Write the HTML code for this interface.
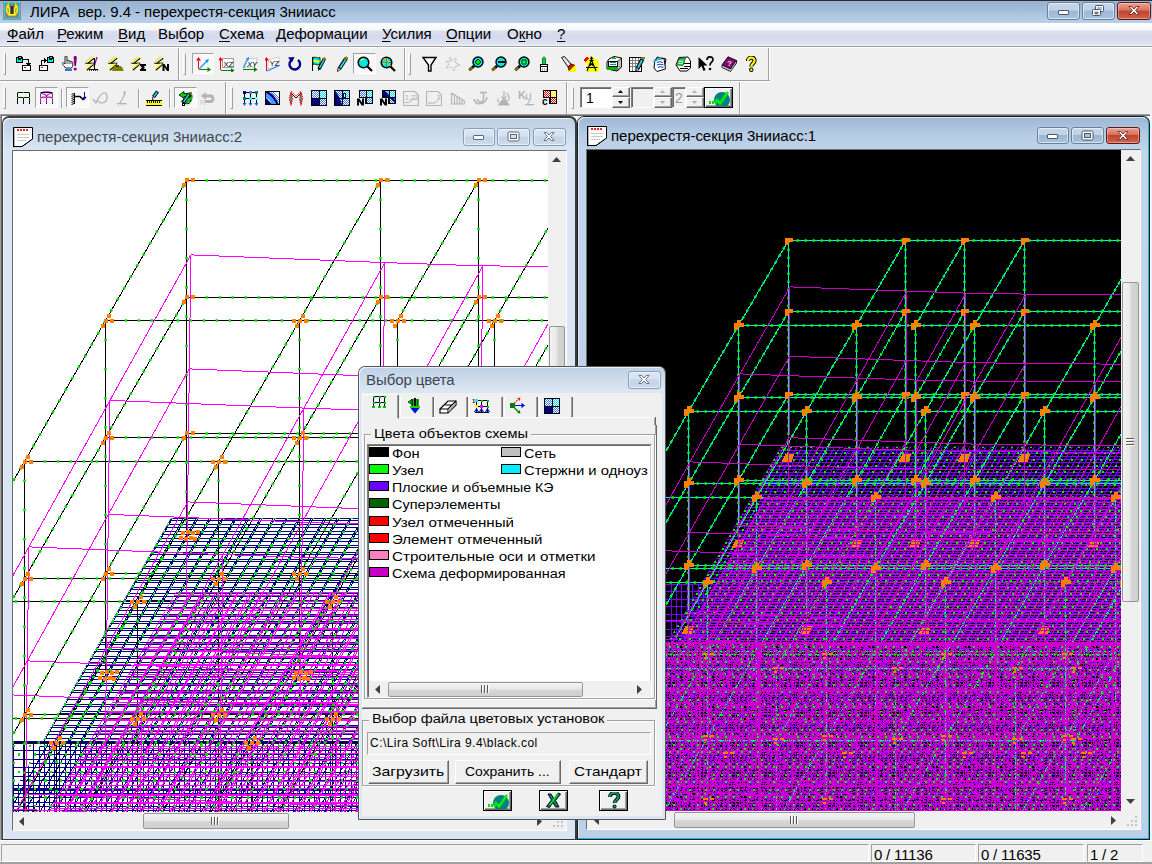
<!DOCTYPE html>
<html><head><meta charset="utf-8"><title>LIRA</title>
<style>
*{box-sizing:border-box;margin:0;padding:0}
html,body{width:1152px;height:864px;overflow:hidden;background:#f0f0f0;font-family:"Liberation Sans",sans-serif;}
.a{position:absolute}
svg{position:absolute;overflow:hidden;display:block}
.t{position:absolute;white-space:nowrap;line-height:1;color:#000}

#title{left:0;top:0;width:1152px;height:23px;background:linear-gradient(#98b3d2 0px,#9db7d5 6px,#adc5e0 14px,#b9d1ea 23px);border-top:1px solid #2a2a2a}
#menu{left:0;top:23px;width:1152px;height:23px;background:linear-gradient(#ffffff 0px,#f5f7fb 7px,#dadeee 8px,#d5daeb 14px,#dde2f1 20px,#e6eaf5 22px,#f6f8fc 23px)}
.mi{top:26px;font-size:15px;letter-spacing:0px}
.mi u{text-decoration:underline;text-underline-offset:2px}
.cbtn{position:absolute;border:1px solid #6a7f9c;border-radius:3px;background:linear-gradient(#c4d6ea 0,#bdd1e7 45%,#9db7d3 50%,#a9c2dc 100%);box-shadow:inset 0 0 0 1px rgba(255,255,255,.55)}
.cbtn.red{border-color:#5a1a1a;background:linear-gradient(#e8a294 0,#d8705c 45%,#c2432b 50%,#d0634c 100%);box-shadow:inset 0 0 0 1px rgba(255,255,255,.35)}
.cbtn.in{border-color:#8a9db8;background:linear-gradient(#dbe6f3 0,#d3e0ef 45%,#c3d3e6 50%,#cddbeb 100%)}
.child{position:absolute}
.ctitle{font-size:15px;color:#000;letter-spacing:-0.01px}
.sb{position:absolute;background:#f0f0f0}
.thumbv{position:absolute;border:1px solid #979797;border-radius:2px;background:linear-gradient(90deg,#f3f3f3 0,#e9e9e9 45%,#d6d6d6 55%,#cfcfcf 100%)}
.thumbh{position:absolute;border:1px solid #979797;border-radius:2px;background:linear-gradient(#f3f3f3 0,#e9e9e9 45%,#d6d6d6 55%,#cfcfcf 100%)}
.pane{position:absolute;top:844px;height:18px;border:1px solid;border-color:#a0a0a0 #fff #fff #a0a0a0;font-size:15px}
.pane span{position:absolute;left:2px;top:1px;white-space:nowrap;letter-spacing:-0.2px}

.grip{position:absolute;width:3px;border-left:1px solid #fff;border-top:1px solid #fff;border-right:1px solid #a0a0a0;border-bottom:1px solid #a0a0a0}
.vsep{position:absolute;width:2px;border-left:1px solid #a0a0a0;border-right:1px solid #fff}
.press{position:absolute;border:1px solid;border-color:#a0a0a0 #fff #fff #a0a0a0;background:#f8f8f8}
.ic{position:absolute;width:16px;height:16px;shape-rendering:crispEdges}
.spin{position:absolute;width:18px;background:#f0f0f0;border:1px solid;border-color:#fff #696969 #696969 #fff;box-shadow:inset -1px -1px 0 #a0a0a0}
.sunk{position:absolute;border:1px solid;border-color:#828282 #fff #fff #828282;box-shadow:inset 1px 1px 0 #696969}

.btn{position:absolute;background:#f0f0f0;border:1px solid;border-color:#fff #696969 #696969 #fff;box-shadow:inset -1px -1px 0 #a0a0a0}
.gb{position:absolute;border:1px solid #a0a0a0;box-shadow:inset 1px 1px 0 #fff, 1px 1px 0 #fff}
.sw{position:absolute;width:20px;height:10px;border:1px solid #000}

</style></head><body>
<div id="title" class="a"></div><svg class="a" style="left:3px;top:2px" width="18" height="18" viewBox="0 0 18 18"><rect x="0" y="0" width="18" height="18" fill="#8a8f96"/><rect x="1.5" y="0.5" width="15" height="16" fill="#7f8489" stroke="#16d9e6" stroke-width="1"/><path d="M5 3 C3 6 3.5 10 6 13 L12 13 C14.5 10 15 6 13 3 C13 5 12 6 11.5 7 L11.5 12 L6.5 12 L6.5 7 C6 6 5 5 5 3Z" fill="none" stroke="#ffef00" stroke-width="1.6"/><rect x="7.5" y="4" width="3" height="8" fill="#333"/></svg><div class="t" style="left:30px;top:4px;font-size:15px;letter-spacing:-0.05px" id="ttl">ЛИРА&nbsp; вер. 9.4 - перехрестя-секция 3нииасс</div><div class="cbtn" style="left:1047px;top:2px;width:33px;height:18px"></div><div class="a" style="left:1058px;top:10px;width:11px;height:5px;background:#fff;border:1px solid #4b556b;border-radius:1px"></div><div class="cbtn" style="left:1082px;top:2px;width:33px;height:18px"></div><svg class="a" style="left:1091px;top:4px" width="14" height="13" viewBox="0 0 14 13"><rect x="4.5" y="1.5" width="8" height="6" rx="1" fill="#fff" stroke="#4b556b"/><rect x="6" y="3" width="5" height="3" fill="#a9c2dc"/><rect x="1.5" y="5.5" width="8" height="6" rx="1" fill="#fff" stroke="#4b556b"/><rect x="4" y="8" width="3" height="2" fill="#7c90ad" stroke="#4b556b" stroke-width=".6"/></svg><div class="cbtn red" style="left:1117px;top:2px;width:34px;height:18px"></div><svg class="a" style="left:1127px;top:5px" width="14" height="12" viewBox="0 0 14 12"><path d="M2 1.5 L4.6 1.5 L7 4 L9.4 1.5 L12 1.5 L8.6 5.5 L12 9.5 L9.4 9.5 L7 7 L4.6 9.5 L2 9.5 L5.4 5.5 Z" fill="#fff" stroke="#5d2a2a" stroke-width=".9"/></svg><div id="menu" class="a"></div><div class="t mi" style="left:7px"><u>Ф</u>айл</div><div class="t mi" style="left:57px"><u>Р</u>ежим</div><div class="t mi" style="left:118px"><u>В</u>ид</div><div class="t mi" style="left:158px">Вы<u>б</u>ор</div><div class="t mi" style="left:219px"><u>С</u>хема</div><div class="t mi" style="left:276px"><u>Д</u>еформации</div><div class="t mi" style="left:382px"><u>У</u>силия</div><div class="t mi" style="left:446px"><u>О</u>пции</div><div class="t mi" style="left:507px">О<u>к</u>но</div><div class="t mi" style="left:557px"><u>?</u></div><div class="a" style="left:0;top:46px;width:1152px;height:1px;background:#a0a0a0"></div><div class="a" style="left:0;top:47px;width:1152px;height:1px;background:#fff"></div><svg width="0" height="0" style="position:absolute"><defs><pattern id="d4080ff" width="2" height="2" patternUnits="userSpaceOnUse"><rect x="0" y="0" width="1" height="1" fill="#4080ff"/><rect x="1" y="1" width="1" height="1" fill="#4080ff"/></pattern><pattern id="d00e0ff" width="2" height="2" patternUnits="userSpaceOnUse"><rect x="0" y="0" width="1" height="1" fill="#00e0ff"/><rect x="1" y="1" width="1" height="1" fill="#00e0ff"/></pattern><pattern id="dff0000" width="2" height="2" patternUnits="userSpaceOnUse"><rect x="0" y="0" width="1" height="1" fill="#ff0000"/><rect x="1" y="1" width="1" height="1" fill="#ff0000"/></pattern><pattern id="dffff00" width="2" height="2" patternUnits="userSpaceOnUse"><rect x="0" y="0" width="1" height="1" fill="#ffff00"/><rect x="1" y="1" width="1" height="1" fill="#ffff00"/></pattern></defs></svg><div class="a" style="left:0;top:80px;width:770px;height:1px;background:#a0a0a0"></div><div class="a" style="left:0;top:81px;width:770px;height:1px;background:#fff"></div><div class="a" style="left:178px;top:48px;width:1px;height:32px;background:#a0a0a0"></div><div class="a" style="left:179px;top:48px;width:1px;height:32px;background:#fff"></div><div class="a" style="left:404px;top:48px;width:1px;height:32px;background:#a0a0a0"></div><div class="a" style="left:405px;top:48px;width:1px;height:32px;background:#fff"></div><div class="a" style="left:768px;top:48px;width:1px;height:32px;background:#a0a0a0"></div><div class="a" style="left:769px;top:48px;width:1px;height:32px;background:#fff"></div><div class="grip" style="left:3px;top:53px;height:22px"></div><div class="grip" style="left:183px;top:53px;height:22px"></div><div class="grip" style="left:408px;top:53px;height:22px"></div><div class="press" style="left:192px;top:53px;width:22px;height:21px"></div><div class="press" style="left:353px;top:53px;width:23px;height:21px"></div><svg class="ic" style="left:16px;top:56px;width:16px;height:16px" viewBox="0 0 16 16" ><rect x="0.5" y="1.5" width="6" height="5" fill="#00e5e5" stroke="#000"/><rect x="2" y="0.5" width="3" height="1.5" fill="#00e5e5" stroke="#000"/><rect x="2" y="3" width="3" height="1" fill="#000"/><path d="M7 3.5 H12.5 V7.5" fill="none" stroke="#000" stroke-width="1.4" /><path d="M10 7 H15 L12.5 10Z" fill="#000" /><rect x="6.5" y="9.5" width="8" height="5" fill="#fff" stroke="#000"/><rect x="8" y="11" width="2" height="1" fill="#ff0000"/></svg><svg class="ic" style="left:39px;top:56px;width:16px;height:16px" viewBox="0 0 16 16" ><rect x="8.5" y="1.5" width="6" height="5" fill="#00e5e5" stroke="#000"/><rect x="10" y="0.5" width="3" height="1.5" fill="#00e5e5" stroke="#000"/><rect x="10" y="3" width="3" height="1" fill="#000"/><rect x="0.5" y="9.5" width="8" height="5" fill="#fff" stroke="#000"/><rect x="2" y="11" width="2" height="1" fill="#ff0000"/><path d="M2.5 9 V4.5 H5.5" fill="none" stroke="#000" stroke-width="1.4" /><path d="M5 2 V7 L8 4.5Z" fill="#000" /></svg><svg class="ic" style="left:62px;top:56px;width:16px;height:16px" viewBox="0 0 16 16" ><path d="M3 0.8 C3 -0.3 5 -0.3 5 0.8 V5 C5.5 4.2 7 4.3 7 5.3 C7.5 4.6 9 4.8 9 5.8 C9.5 5.2 10.8 5.5 10.8 6.6 V9 C10.8 10.5 10 11 9.5 12 H3.5 C3 10.5 0.5 9 0.2 7.5 C0.2 6.5 1.5 6.3 3 8 Z" fill="#fff" stroke="#000" stroke-width="0.9" style="shape-rendering:auto"/><path d="M5 5 V8 M7 5.5 V8 M9 6 V8" fill="none" stroke="#000" stroke-width="0.7" style="shape-rendering:auto"/><rect x="2.5" y="12.5" width="7.5" height="2.2" fill="#1e7fe0"/><path d="M11.6 1.5 C11.6 -0.4 14.8 -0.4 14.8 1.5 L14 10 L12.4 10Z" fill="#800080" style="shape-rendering:auto"/><circle cx="13.2" cy="13" r="1.6" fill="#800080" style="shape-rendering:auto"/></svg><svg class="ic" style="left:85px;top:56px;width:16px;height:16px" viewBox="0 0 16 16" ><path d="M6.5 0.8 L0.8 5.5" fill="none" stroke="#c8c8c8" stroke-width="1" style="shape-rendering:auto"/><path d="M9.2 2.2 L2.6 7.4 M8.6 8.4 L1.8 14.2" fill="none" stroke="#000" stroke-width="1.15" style="shape-rendering:auto"/><path d="M0.3 7.2 H9.3" fill="none" stroke="#000" stroke-width="1.1" style="shape-rendering:auto"/><path d="M8.2 1.2 L1.4 6.4 M7.6 7.6 L0.8 13.2" fill="none" stroke="#ffff00" stroke-width="1.35" style="shape-rendering:auto"/><path d="M12 1 L9 11" fill="none" stroke="#a000a0" stroke-width="1.2" style="shape-rendering:auto"/><path d="M9 2 V13" fill="none" stroke="#000" stroke-width="1" /><rect x="4" y="13" width="9" height="1" fill="#000"/><path d="M4 15 l1 -1 m1 1 l1 -1 m1 1 l1 -1 m1 1 l1 -1 m1 1 l1 -1" fill="none" stroke="#000" stroke-width="0.8" /></svg><svg class="ic" style="left:108px;top:56px;width:16px;height:16px" viewBox="0 0 16 16" ><path d="M6.5 0.8 L0.8 5.5" fill="none" stroke="#c8c8c8" stroke-width="1" style="shape-rendering:auto"/><path d="M9.2 2.2 L2.6 7.4 M8.6 8.4 L1.8 14.2" fill="none" stroke="#000" stroke-width="1.15" style="shape-rendering:auto"/><path d="M0.3 7.2 H9.3" fill="none" stroke="#000" stroke-width="1.1" style="shape-rendering:auto"/><path d="M8.2 1.2 L1.4 6.4 M7.6 7.6 L0.8 13.2" fill="none" stroke="#ffff00" stroke-width="1.35" style="shape-rendering:auto"/><path d="M4 15 C5 10 7 10 8 10 L12 10 C13 10 15 11 15.5 15 Z" fill="#808000" style="shape-rendering:auto"/><rect x="8" y="9" width="3" height="1.5" fill="#404000"/></svg><svg class="ic" style="left:131px;top:56px;width:16px;height:16px" viewBox="0 0 16 16" ><path d="M6.5 0.8 L0.8 5.5" fill="none" stroke="#c8c8c8" stroke-width="1" style="shape-rendering:auto"/><path d="M9.2 2.2 L2.6 7.4 M8.6 8.4 L1.8 14.2" fill="none" stroke="#000" stroke-width="1.15" style="shape-rendering:auto"/><path d="M0.3 7.2 H9.3" fill="none" stroke="#000" stroke-width="1.1" style="shape-rendering:auto"/><path d="M8.2 1.2 L1.4 6.4 M7.6 7.6 L0.8 13.2" fill="none" stroke="#ffff00" stroke-width="1.35" style="shape-rendering:auto"/><path d="M9 8 H15 V10 H12.5 L14 11.5 L12.5 13 H15 V15 H9 V13.5 L11 11.5 L9 9.5Z" fill="#000" style="shape-rendering:auto"/></svg><svg class="ic" style="left:154px;top:56px;width:16px;height:16px" viewBox="0 0 16 16" ><path d="M6.5 0.8 L0.8 5.5" fill="none" stroke="#c8c8c8" stroke-width="1" style="shape-rendering:auto"/><path d="M9.2 2.2 L2.6 7.4 M8.6 8.4 L1.8 14.2" fill="none" stroke="#000" stroke-width="1.15" style="shape-rendering:auto"/><path d="M0.3 7.2 H9.3" fill="none" stroke="#000" stroke-width="1.1" style="shape-rendering:auto"/><path d="M8.2 1.2 L1.4 6.4 M7.6 7.6 L0.8 13.2" fill="none" stroke="#ffff00" stroke-width="1.35" style="shape-rendering:auto"/><path d="M8.5 15 V8 H10.5 L13 12 V8 H15 V15 H13 L10.5 11 V15Z" fill="#000" style="shape-rendering:auto"/></svg><svg class="ic" style="left:196px;top:56px;width:16px;height:16px" viewBox="0 0 16 16" ><path d="M2.5 13 V2" fill="none" stroke="#ff0000" stroke-width="1" /><path d="M0.0 4.5 L2.5 1 L5.0 4.5Z" fill="#ff0000" style="shape-rendering:auto"/><path d="M2.5 13.5 H14" fill="none" stroke="#008000" stroke-width="1" /><path d="M11.5 11.0 L15 13.5 L11.5 16.0Z" fill="#008000" style="shape-rendering:auto"/><path d="M3.5 12.5 L12 4" fill="none" stroke="#1e90ff" stroke-width="1.2" style="shape-rendering:auto"/><path d="M12.8 3 L9 4.2 L11.8 7Z" fill="#1e90ff" style="shape-rendering:auto"/></svg><svg class="ic" style="left:219px;top:56px;width:16px;height:16px" viewBox="0 0 16 16" ><rect x="3.5" y="2.5" width="11" height="9" fill="#fff" stroke="#a0a0a0"/><path d="M1.5 14 V2" fill="none" stroke="#ff0000" stroke-width="1" /><path d="M-1.0 4.5 L1.5 1 L4.0 4.5Z" fill="#ff0000" style="shape-rendering:auto"/><path d="M1.5 14.5 H14.5" fill="none" stroke="#008000" stroke-width="1" /><path d="M12.0 12.0 L15.5 14.5 L12.0 17.0Z" fill="#008000" style="shape-rendering:auto"/><text x="4.5" y="10.5" font-family="Liberation Sans" font-size="8" font-weight="normal" font-style="normal" fill="#000" letter-spacing="-0.3" style="shape-rendering:auto">XZ</text></svg><svg class="ic" style="left:242px;top:56px;width:16px;height:16px" viewBox="0 0 16 16" ><path d="M5 2.5 H15.5 L12 11 H1Z" fill="#fff" stroke="#c0c0c0" stroke-width="0.8" style="shape-rendering:auto"/><path d="M1.5 12 L6 2.5" fill="none" stroke="#1e90ff" stroke-width="1.2" style="shape-rendering:auto"/><path d="M7 0.8 L3.6 3 L6.8 4.6Z" fill="#1e90ff" style="shape-rendering:auto"/><path d="M0.5 13.5 H14.5" fill="none" stroke="#008000" stroke-width="1" /><path d="M12.0 11.0 L15.5 13.5 L12.0 16.0Z" fill="#008000" style="shape-rendering:auto"/><text x="5" y="10.5" font-family="Liberation Sans" font-size="8" font-weight="normal" font-style="italic" fill="#000" letter-spacing="-0.3" style="shape-rendering:auto">XY</text></svg><svg class="ic" style="left:265px;top:56px;width:16px;height:16px" viewBox="0 0 16 16" ><path d="M3 4 L14 1 V9 L3 13Z" fill="#fff" stroke="#c0c0c0" stroke-width="0.8" style="shape-rendering:auto"/><path d="M1.5 15 V2" fill="none" stroke="#ff0000" stroke-width="1" /><path d="M-1.0 4.5 L1.5 1 L4.0 4.5Z" fill="#ff0000" style="shape-rendering:auto"/><path d="M2 15 L14.5 9.5" fill="none" stroke="#1e90ff" stroke-width="1.2" style="shape-rendering:auto"/><text x="4.5" y="9.5" font-family="Liberation Sans" font-size="8" font-weight="normal" font-style="normal" fill="#000" letter-spacing="-0.4" style="shape-rendering:auto">YZ</text></svg><svg class="ic" style="left:287px;top:56px;width:16px;height:16px" viewBox="0 0 16 16" ><path d="M4 4.5 A5.3 5.3 0 1 0 11 4" fill="none" stroke="#000080" stroke-width="2.4" style="shape-rendering:auto"/><path d="M1 1.5 L7.5 1 L5 6.5Z" fill="#000080" style="shape-rendering:auto"/></svg><svg class="ic" style="left:311px;top:56px;width:16px;height:16px" viewBox="0 0 16 16" ><path d="M1.5 1 V15" fill="none" stroke="#000" stroke-width="1.4" /><path d="M2 1.5 C4 0 6 3 9 1.5 V8.5 C6 10 4 7 2 8.5Z" fill="#00e5e5" stroke="#000" stroke-width="0.8" style="shape-rendering:auto"/><path d="M2.3 4 C4 2.8 6 5.5 8.7 4.2 V6.3 C6 7.6 4 4.8 2.3 6.2Z" fill="#ffff00" style="shape-rendering:auto"/><path d="M13.5 2.5 L8 13" fill="none" stroke="#000" stroke-width="3.4" style="shape-rendering:auto"/><path d="M13 3.5 L8.6 12" fill="none" stroke="#00e5e5" stroke-width="1.6" style="shape-rendering:auto"/><circle cx="13.3" cy="2.8" r="1.6" fill="#808000" style="shape-rendering:auto"/><path d="M7 15 L7.4 11.5 L9.6 12.8Z" fill="#000" style="shape-rendering:auto"/></svg><svg class="ic" style="left:334px;top:56px;width:16px;height:16px" viewBox="0 0 16 16" ><path d="M12 2.5 L5.5 12.5" fill="none" stroke="#000" stroke-width="4" style="shape-rendering:auto"/><path d="M11.5 3.5 L6 12" fill="none" stroke="#20d0e0" stroke-width="2" style="shape-rendering:auto"/><circle cx="12.2" cy="2.3" r="1.7" fill="#808000" style="shape-rendering:auto"/><path d="M3.5 15.5 L4 11.5 L6.8 13.2Z" fill="#fff" stroke="#000" stroke-width="0.8" style="shape-rendering:auto"/></svg><svg class="ic" style="left:357px;top:56px;width:16px;height:16px" viewBox="0 0 16 16" ><circle cx="6.5" cy="6.5" r="5.3" fill="#00e5e5" stroke="#000" stroke-width="1.5" style="shape-rendering:auto"/><path d="M4 5 A3 3 0 0 1 7 3.2" fill="none" stroke="#ffff00" stroke-width="1.3" style="shape-rendering:auto"/><path d="M10.5 10.5 L15 15" fill="none" stroke="#000" stroke-width="2.2" style="shape-rendering:auto"/></svg><svg class="ic" style="left:380px;top:56px;width:16px;height:16px" viewBox="0 0 16 16" ><circle cx="6.5" cy="6.5" r="5.3" fill="#00e5e5" stroke="#000" stroke-width="1.5" style="shape-rendering:auto"/><path d="M3 4 Q5 2 7 4 T10 5 M3 8 Q5 6 8 8 T10 9" fill="none" stroke="#e0c000" stroke-width="1.4" style="shape-rendering:auto"/><path d="M2 6.5 H11 M6.5 2 V11" fill="none" stroke="#0a9aa0" stroke-width="0.8" style="shape-rendering:auto"/><path d="M10.5 10.5 L15 15" fill="none" stroke="#000" stroke-width="2.2" style="shape-rendering:auto"/></svg><svg class="ic" style="left:422px;top:56px;width:16px;height:16px" viewBox="0 0 16 16" ><path d="M1 1.5 H14 L9 9 V15 H6.5 V9 Z" fill="#fff" stroke="#000" stroke-width="1.4" style="shape-rendering:auto"/></svg><svg class="ic" style="left:445px;top:56px;width:16px;height:16px" viewBox="0 0 16 16" ><path d="M5 1 L7 5 L11 2 L10.5 7 L15 9 L10 10.5 L9 15 L6 11 L1 12 L4 8 L1 5 L5 5.5Z" fill="none" stroke="#b0b0b0" stroke-width="1" stroke-dasharray="1.5 1" style="shape-rendering:auto"/></svg><svg class="ic" style="left:468px;top:56px;width:16px;height:16px" viewBox="0 0 16 16" ><path d="M6 10 L1.5 14" fill="none" stroke="#000" stroke-width="3" style="shape-rendering:auto"/><path d="M4.5 11.5 L1 14.5" fill="none" stroke="#808000" stroke-width="2" style="shape-rendering:auto"/><circle cx="10" cy="6" r="5" fill="#00e5e5" stroke="#000" stroke-width="1.4" style="shape-rendering:auto"/><path d="M10 3 L13 6 L10 9 L7 6Z" fill="#00e000" stroke="#000" stroke-width="0.8" style="shape-rendering:auto"/></svg><svg class="ic" style="left:491px;top:56px;width:16px;height:16px" viewBox="0 0 16 16" ><path d="M6 10 L1.5 14" fill="none" stroke="#000" stroke-width="3" style="shape-rendering:auto"/><path d="M4.5 11.5 L1 14.5" fill="none" stroke="#808000" stroke-width="2" style="shape-rendering:auto"/><circle cx="10" cy="6" r="5" fill="#00e5e5" stroke="#000" stroke-width="1.4" style="shape-rendering:auto"/><path d="M6.5 6 H13.5" fill="none" stroke="#000" stroke-width="1.6" /></svg><svg class="ic" style="left:514px;top:56px;width:16px;height:16px" viewBox="0 0 16 16" ><path d="M6 10 L1.5 14" fill="none" stroke="#000" stroke-width="3" style="shape-rendering:auto"/><path d="M4.5 11.5 L1 14.5" fill="none" stroke="#808000" stroke-width="2" style="shape-rendering:auto"/><circle cx="10" cy="6" r="5" fill="#00e5e5" stroke="#000" stroke-width="1.4" style="shape-rendering:auto"/><path d="M7 4.5 H13 M7 7.5 H13 M8.5 3 V9 M11.5 3 V9" fill="none" stroke="#00a000" stroke-width="1.2" /><circle cx="10" cy="6" r="2.6" fill="none" stroke="#008000" stroke-width="0.8" style="shape-rendering:auto"/></svg><svg class="ic" style="left:536px;top:56px;width:16px;height:16px" viewBox="0 0 16 16" ><path d="M6.5 9 V3 C6.5 0.5 9.5 0.5 9.5 3 V9Z" fill="#00d040" stroke="#006000" stroke-width="0.8" style="shape-rendering:auto"/><rect x="4.5" y="8.5" width="7" height="7" fill="#fff" stroke="#000"/><path d="M4.5 10.5 H11.5" fill="none" stroke="#000" stroke-width="1" /><path d="M6.5 12 V15 M8.5 12 V15 M10 12 V15" fill="none" stroke="#a0a0a0" stroke-width="0.8" /></svg><svg class="ic" style="left:560px;top:56px;width:16px;height:16px" viewBox="0 0 16 16" ><path d="M8 9 L15.5 9 L15.5 15.5 L8.5 15.5Z" fill="#ffff00" /><path d="M1.5 1.5 L4.5 0.5 L11 8 L8 11Z" fill="#d8d8d8" stroke="#000" stroke-width="0.9" style="shape-rendering:auto"/><path d="M8 11 L11 8 L14.5 9 L9 14.5Z" fill="#ff0000" stroke="#000" stroke-width="0.7" style="shape-rendering:auto"/><path d="M3 2 L9 9" fill="none" stroke="#fff" stroke-width="1" style="shape-rendering:auto"/></svg><svg class="ic" style="left:583px;top:56px;width:16px;height:16px" viewBox="0 0 16 16" ><path d="M1 3 L5 0.5 L10 0.5 L15.5 5 V15.5 H3.5 V8Z" fill="#ffff00" /><path d="M0.5 4 L4.5 0.5 L6 3 L2 6Z" fill="#ff0000" /><path d="M8.5 0.5 V4 M8.5 4 L4 15 M8.5 4 L13 15 M6.5 4.5 H10.5 M7 7 L10 9.5 M10 7 L7 9.5 M3 11.5 H14.5" fill="none" stroke="#000" stroke-width="1.1" style="shape-rendering:auto"/><circle cx="8.5" cy="2.5" r="1.3" fill="#000" style="shape-rendering:auto"/></svg><svg class="ic" style="left:606px;top:56px;width:16px;height:16px" viewBox="0 0 16 16" ><path d="M3 3 L8 0.5 L15.5 2 V11 L11 15 L1 13 L1 6 Z" fill="#fff" stroke="#000" stroke-width="1" style="shape-rendering:auto"/><path d="M11 6 L15.5 2 V11 L11 15Z" fill="#c0c0c0" stroke="#000" stroke-width="0.8" style="shape-rendering:auto"/><rect x="2.5" y="5" width="8.5" height="5" fill="#fff" stroke="#000"/><path d="M4 6.8 H9.5 M4 8.6 H9.5" fill="none" stroke="#008a8a" stroke-width="1.2" /><path d="M1 12.5 H11" fill="none" stroke="#00b000" stroke-width="2.4" /><path d="M6 2.5 L8.5 0.8 L10.5 2.6Z" fill="#00c000" /><rect x="13" y="9.5" width="1.4" height="1.4" fill="#00c000"/></svg><svg class="ic" style="left:629px;top:56px;width:16px;height:16px" viewBox="0 0 16 16" ><rect x="0.5" y="1.5" width="12" height="13.5" fill="#fff" stroke="#000"/><path d="M3.5 2 V15 M6.5 2 V15 M9.5 2 V15 M1 4.5 H12 M1 7.5 H12 M1 10.5 H12" fill="none" stroke="#808080" stroke-width="1" /><path d="M13.5 3 L8.5 12.5" fill="none" stroke="#000" stroke-width="4" style="shape-rendering:auto"/><path d="M13 4 L9 11.8" fill="none" stroke="#20d0e0" stroke-width="2" style="shape-rendering:auto"/><rect x="12" y="0.5" width="3.5" height="2" fill="#808000"/><path d="M7 15 L7.5 11.5 L10 13Z" fill="#fff" stroke="#000" stroke-width="0.7" style="shape-rendering:auto"/></svg><svg class="ic" style="left:652px;top:56px;width:16px;height:16px" viewBox="0 0 16 16" ><path d="M5 1 L14 3 L12 13 L3 11Z" fill="#fff" stroke="#000" stroke-width="1" style="shape-rendering:auto"/><path d="M3 3.5 L12 2.5 L13.5 13 L5 15.5 L2 12Z" fill="#fff" stroke="#000" stroke-width="1" style="shape-rendering:auto"/><path d="M5 6.5 Q8 5 11 6.5 M5 9 Q8 7.5 11.5 9 M6 11.5 Q8.5 10 11.5 11.5" fill="none" stroke="#2040d0" stroke-width="1.1" style="shape-rendering:auto"/><path d="M1.5 6 L9 1.5" fill="none" stroke="#20c0d0" stroke-width="1.8" style="shape-rendering:auto"/></svg><svg class="ic" style="left:675px;top:56px;width:16px;height:16px" viewBox="0 0 16 16" ><path d="M4 1.5 L13 1 L15.5 5 V12 L12 15 H5 L1 9Z" fill="#fff" stroke="#000" stroke-width="1" style="shape-rendering:auto"/><path d="M4.5 2.5 L10.5 2 L8 9.5 L1.5 9Z" fill="#30d060" stroke="#006000" stroke-width="0.8" style="shape-rendering:auto"/><path d="M9 7 H14.5 M8.5 10 H14.5 M5 12.5 H13" fill="none" stroke="#000" stroke-width="1" /><path d="M3 5 H8 M2.5 7 H7.5" fill="none" stroke="#e0ffe0" stroke-width="0.8" /></svg><svg class="ic" style="left:698px;top:56px;width:16px;height:16px" viewBox="0 0 16 16" ><path d="M0.5 1 V13 L3.5 10 L5.5 15 L7.5 14 L5.5 9.5 L9.5 9.5Z" fill="#000" style="shape-rendering:auto"/><path d="M9 4 C9 0 15 0 15 3.5 C15 6.5 12 6 12 9.5" fill="none" stroke="#000" stroke-width="1.7" style="shape-rendering:auto"/><circle cx="12" cy="13" r="1.3" fill="#000" style="shape-rendering:auto"/></svg><svg class="ic" style="left:721px;top:56px;width:16px;height:16px" viewBox="0 0 16 16" ><path d="M1 9 L7 0.8 L15.5 4.5 L9.5 13Z" fill="#800090" stroke="#000" stroke-width="0.9" style="shape-rendering:auto"/><path d="M1 9 L9.5 13 L15.5 4.5 V7 L9.5 15.5 L1 11.5Z" fill="#fff" stroke="#000" stroke-width="0.9" style="shape-rendering:auto"/><path d="M1.5 10.5 L9.5 14.2 L15 6" fill="none" stroke="#909090" stroke-width="0.8" style="shape-rendering:auto"/><text x="6" y="9.5" font-family="Liberation Sans" font-size="8" font-weight="bold" font-style="normal" fill="#ffff00" letter-spacing="0" style="shape-rendering:auto">?</text></svg><svg class="ic" style="left:743px;top:56px;width:16px;height:16px" viewBox="0 0 16 16" ><path d="M5 5 C5 0.5 11.5 0.5 11.5 4.5 C11.5 7.5 8.3 7.5 8.3 10.5" fill="none" stroke="#000" stroke-width="4.2" style="shape-rendering:auto"/><circle cx="8.3" cy="13.8" r="2.2" fill="#000" style="shape-rendering:auto"/><path d="M5 5 C5 0.5 11.5 0.5 11.5 4.5 C11.5 7.5 8.3 7.5 8.3 10.5" fill="none" stroke="#ffff00" stroke-width="2.2" style="shape-rendering:auto"/><circle cx="8.3" cy="13.8" r="1.25" fill="#ffff00" style="shape-rendering:auto"/></svg><div class="a" style="left:225px;top:82px;width:1px;height:32px;background:#a0a0a0"></div><div class="a" style="left:226px;top:82px;width:1px;height:32px;background:#fff"></div><div class="a" style="left:566px;top:82px;width:1px;height:32px;background:#a0a0a0"></div><div class="a" style="left:567px;top:82px;width:1px;height:32px;background:#fff"></div><div class="a" style="left:739px;top:82px;width:1px;height:32px;background:#a0a0a0"></div><div class="a" style="left:740px;top:82px;width:1px;height:32px;background:#fff"></div><div class="grip" style="left:3px;top:87px;height:22px"></div><div class="grip" style="left:230px;top:87px;height:22px"></div><div class="grip" style="left:571px;top:87px;height:22px"></div><div class="vsep" style="left:61px;top:89px;height:19px"></div><div class="vsep" style="left:138px;top:89px;height:19px"></div><div class="vsep" style="left:169px;top:89px;height:19px"></div><div class="press" style="left:35px;top:87px;width:23px;height:21px"></div><div class="press" style="left:66px;top:87px;width:23px;height:21px"></div><div class="press" style="left:174px;top:87px;width:23px;height:21px"></div><svg class="ic" style="left:16px;top:90px;width:16px;height:16px" viewBox="0 0 16 16" ><path d="M1.5 2 V14 M7.5 7 V14 M13.5 2 V14 M1 2.5 H14 M1 7.5 H14" fill="none" stroke="#000" stroke-width="1.3" /><rect x="0.7" y="1.7" width="1.6" height="1.6" fill="#00e000"/><rect x="6.7" y="1.7" width="1.6" height="1.6" fill="#00e000"/><rect x="12.7" y="1.7" width="1.6" height="1.6" fill="#00e000"/><rect x="0.7" y="6.7" width="1.6" height="1.6" fill="#00e000"/><rect x="6.7" y="6.7" width="1.6" height="1.6" fill="#00e000"/><rect x="12.7" y="6.7" width="1.6" height="1.6" fill="#00e000"/><rect x="0.7" y="12.5" width="1.6" height="1.6" fill="#000080"/><rect x="6.7" y="12.5" width="1.6" height="1.6" fill="#000080"/><rect x="12.7" y="12.5" width="1.6" height="1.6" fill="#000080"/></svg><svg class="ic" style="left:39px;top:90px;width:16px;height:16px" viewBox="0 0 16 16" ><path d="M1.5 3 V14 M7.5 7 V14 M13.5 3 V14" fill="none" stroke="#c000c0" stroke-width="1.3" /><path d="M1.5 3.5 Q4 1.5 7.5 2 Q11 1.5 13.5 3.5 M1.5 8 Q4 6.5 7.5 7.5 Q11 6.5 13.5 8 M2 3.5 Q7.5 4 7.5 7 Q7.5 4 13 3.5" fill="none" stroke="#c000c0" stroke-width="1.2" style="shape-rendering:auto"/><path d="M1 2.5 H14" fill="none" stroke="#000" stroke-width="1" /><rect x="0.7" y="2.2" width="1.6" height="1.6" fill="#00e000"/><rect x="12.7" y="2.2" width="1.6" height="1.6" fill="#00e000"/><rect x="0.7" y="7.2" width="1.6" height="1.6" fill="#00e000"/><rect x="6.7" y="6.7" width="1.6" height="1.6" fill="#00e000"/><rect x="12.7" y="7.2" width="1.6" height="1.6" fill="#00e000"/><rect x="0.7" y="12.5" width="1.6" height="1.6" fill="#000080"/><rect x="6.7" y="12.5" width="1.6" height="1.6" fill="#000080"/><rect x="12.7" y="12.5" width="1.6" height="1.6" fill="#000080"/></svg><svg class="ic" style="left:71px;top:90px;width:16px;height:16px" viewBox="0 0 16 16" ><path d="M3.5 3 V14" fill="none" stroke="#000" stroke-width="1.3" /><path d="M0.5 4.5 l2.5 -1 M0.5 6.5 l2.5 -1 M0.5 8.5 l2.5 -1 M0.5 10.5 l2.5 -1 M0.5 12.5 l2.5 -1 M0.5 14.5 l2.5 -1" fill="none" stroke="#000" stroke-width="1" style="shape-rendering:auto"/><path d="M3.5 6.5 L9 6.5 L12 9.5 L15 7" fill="none" stroke="#000" stroke-width="1.5" style="shape-rendering:auto"/><path d="M13.5 2 V8" fill="none" stroke="#0000c0" stroke-width="1.3" /><path d="M11.8 7 H15.2 L13.5 10Z" fill="#0000c0" style="shape-rendering:auto"/></svg><svg class="ic" style="left:92px;top:90px;width:16px;height:16px" viewBox="0 0 16 16" ><path d="M1 9 L4 13 C8 3 14 0 15 6 C16 12 8 16 5.5 10" fill="none" stroke="#b4b4b4" stroke-width="1.3" style="shape-rendering:auto"/></svg><svg class="ic" style="left:115px;top:90px;width:16px;height:16px" viewBox="0 0 16 16" ><path d="M9.5 1 V6 M8 3 H11 M9.5 5 L5 13 M2 13.5 H11" fill="none" stroke="#b4b4b4" stroke-width="1.2" style="shape-rendering:auto"/><path d="M2.5 15.5 l1.5 -2 m1 2 l1.5 -2 m1 2 l1.5 -2 m1 2 l1.5 -2" fill="none" stroke="#b4b4b4" stroke-width="0.8" style="shape-rendering:auto"/></svg><svg class="ic" style="left:146px;top:90px;width:16px;height:16px" viewBox="0 0 16 16" ><rect x="0" y="11" width="16" height="3.5" fill="#ffff00"/><path d="M0 10.5 H16" fill="none" stroke="#000" stroke-width="1.4" /><path d="M1.5 11 V13 M3.5 11 V12.5 M5.5 11 V13 M7.5 11 V12.5 M9.5 11 V13 M11.5 11 V12.5 M13.5 11 V13" fill="none" stroke="#000" stroke-width="0.9" /><path d="M0 15.5 H16" fill="none" stroke="#000" stroke-width="1" /><path d="M11.5 1.5 L7.5 7" fill="none" stroke="#000" stroke-width="3.6" style="shape-rendering:auto"/><path d="M11 2.3 L8 6.5" fill="none" stroke="#20d0e0" stroke-width="1.8" style="shape-rendering:auto"/><path d="M7 7 Q6 9 7 10" fill="none" stroke="#000" stroke-width="1" style="shape-rendering:auto"/></svg><svg class="ic" style="left:178px;top:90px;width:16px;height:16px" viewBox="0 0 16 16" ><path d="M13 5 C14 9 12 12 5 12" fill="none" stroke="#00c000" stroke-width="3" style="shape-rendering:auto"/><path d="M1 5 L6 1.5 V3.5 H13 V6.5 H6 V8.5Z" fill="#00d000" stroke="#000" stroke-width="0.8" style="shape-rendering:auto"/><path d="M4 12 C3 8 12 9 12 7 M4 12 C8 15 13 14 13 10" fill="none" stroke="#000" stroke-width="1" style="shape-rendering:auto"/><path d="M11.5 3.5 L5 13" fill="none" stroke="#000" stroke-width="3.4" style="shape-rendering:auto"/><path d="M11 4.2 L5.6 12" fill="none" stroke="#20d0e0" stroke-width="1.6" style="shape-rendering:auto"/><rect x="10.5" y="1.5" width="3" height="2" fill="#808000"/><rect x="4" y="13" width="2.5" height="2" fill="#fff" stroke="#000"/></svg><svg class="ic" style="left:200px;top:90px;width:16px;height:16px" viewBox="0 0 16 16" ><path d="M1 6 L6 2 V4.5 H11 C15.5 4.5 15.5 13 11 13 H5 V10 H10.5 C12 10 12 7.5 10.5 7.5 H6 V10Z" fill="#b4b4b4" style="shape-rendering:auto"/><text x="0" y="15" font-family="Liberation Sans" font-size="7" font-weight="normal" font-style="normal" fill="#c4c4c4" letter-spacing="0" style="shape-rendering:auto">R</text></svg><svg class="ic" style="left:242px;top:90px;width:16px;height:16px" viewBox="0 0 16 16" ><path d="M2.5 2 V13 M8.5 2 V13 M14.5 2 V13 M2 2.5 H15 M2 8.5 H15" fill="none" stroke="#000" stroke-width="1.3" /><rect x="1" y="1" width="3" height="3" fill="#000080"/><rect x="7" y="1" width="3" height="3" fill="#1e90ff"/><rect x="13" y="1" width="3" height="3" fill="#008080"/><rect x="1" y="7" width="3" height="3" fill="#008080"/><rect x="7" y="7" width="3" height="3" fill="#00ffff"/><rect x="13" y="7" width="3" height="3" fill="#80ffff"/><path d="M0.5 13 H4.5 L2.5 16Z" fill="#1e60ff" style="shape-rendering:auto"/><path d="M6.5 13 H10.5 L8.5 16Z" fill="#1e60ff" style="shape-rendering:auto"/><path d="M12.5 13 H16.5 L14.5 16Z" fill="#1e60ff" style="shape-rendering:auto"/></svg><svg class="ic" style="left:265px;top:90px;width:16px;height:16px" viewBox="0 0 16 16" ><rect x="0.5" y="1.5" width="14" height="13" fill="#fff" stroke="#000"/><path d="M1 8 L7 14 H1Z" fill="#000080" style="shape-rendering:auto"/><path d="M1 3 C5 5 10 10 11 14 H7 C6 11 4 9 1 8Z" fill="#3a9aff" style="shape-rendering:auto"/><path d="M1 2 H4 C8 4 12 9 13.5 14 H11 C10 10 5 5 1 3Z" fill="#000080" style="shape-rendering:auto"/><path d="M4 2 H9 L14 8 V14 H13.5 C12 9 8 4 4 2Z" fill="url(#d4080ff)"/><rect x="0.5" y="1.5" width="14" height="13" fill="none" stroke="#000"/></svg><svg class="ic" style="left:288px;top:90px;width:16px;height:16px" viewBox="0 0 16 16" ><path d="M3 3 V14 M13 3 V14 M3 3 L8 8 L13 3" fill="none" stroke="#000" stroke-width="1" style="shape-rendering:auto"/><path d="M3 2 L1.2 8 L3 15.5 L4.8 8Z M13 2 L11.2 8 L13 15.5 L14.8 8Z" fill="none" stroke="#ff0000" stroke-width="1" stroke-dasharray="1.6 0.9" style="shape-rendering:auto"/><path d="M3 1 L8 6 L13 1" fill="none" stroke="#ff0000" stroke-width="0.9" stroke-dasharray="1.6 0.9" style="shape-rendering:auto"/></svg><svg class="ic" style="left:311px;top:90px;width:16px;height:16px" viewBox="0 0 16 16" ><rect x="0.5" y="0.5" width="15" height="15" fill="#fff" stroke="#000"/><rect x="1" y="1" width="7" height="7" fill="#fff"/><rect x="1" y="1" width="7" height="7" fill="url(#d4080ff)"/><rect x="8" y="1" width="7" height="7" fill="#fff"/><rect x="8" y="1" width="7" height="7" fill="url(#d00e0ff)"/><rect x="1" y="8" width="7" height="7" fill="#000080"/><rect x="8" y="8" width="7" height="7" fill="#fff"/><rect x="8" y="8" width="7" height="7" fill="url(#d4080ff)"/><path d="M8 1 V15 M1 8 H15" fill="none" stroke="#000" stroke-width="1" /></svg><svg class="ic" style="left:334px;top:90px;width:16px;height:16px" viewBox="0 0 16 16" ><rect x="0.5" y="0.5" width="15" height="15" fill="#fff" stroke="#000"/><rect x="1" y="1" width="7" height="7" fill="#fff"/><rect x="1" y="1" width="7" height="7" fill="url(#d4080ff)"/><rect x="8" y="1" width="7" height="7" fill="#fff"/><rect x="8" y="1" width="7" height="7" fill="url(#d00e0ff)"/><rect x="1" y="8" width="7" height="7" fill="#fff"/><rect x="1" y="8" width="7" height="7" fill="url(#d4080ff)"/><rect x="8" y="8" width="7" height="7" fill="#fff"/><rect x="8" y="8" width="7" height="7" fill="url(#d4080ff)"/><path d="M1 1 V15 L8 15 C7 10 4 4 1 1Z" fill="#000080" style="shape-rendering:auto"/><path d="M8 1 V15 M1 8 H15" fill="none" stroke="#000" stroke-width="1" /><rect x="9" y="3" width="2.5" height="4" fill="#fff" stroke="#000080"/></svg><svg class="ic" style="left:357px;top:90px;width:16px;height:16px" viewBox="0 0 16 16" ><rect x="3" y="1" width="6" height="6" fill="#fff"/><rect x="3" y="1" width="6" height="6" fill="url(#d4080ff)"/><rect x="9" y="1" width="6" height="6" fill="#fff"/><rect x="9" y="1" width="6" height="6" fill="url(#d00e0ff)"/><rect x="9" y="7" width="6" height="6" fill="#fff"/><rect x="9" y="7" width="6" height="6" fill="url(#d4080ff)"/><path d="M2.5 0.5 H15.5 V13.5 H8.5 V7.5 H2.5Z M9 1 V13 M3 7 H15" fill="none" stroke="#000" stroke-width="1" /><path d="M0 15.5 V8.5 H2.3 L5 12.5 V8.5 H7 V15.5 H4.7 L2 11.5 V15.5Z" fill="#000" style="shape-rendering:auto"/></svg><svg class="ic" style="left:380px;top:90px;width:16px;height:16px" viewBox="0 0 16 16" ><rect x="3" y="1" width="6" height="6" fill="#000080"/><path d="M5 1 H9 V5Z" fill="#80c0ff" style="shape-rendering:auto"/><rect x="9" y="1" width="6" height="6" fill="#fff"/><rect x="9" y="1" width="6" height="6" fill="url(#d00e0ff)"/><rect x="9" y="7" width="6" height="6" fill="#fff"/><rect x="9" y="7" width="6" height="6" fill="url(#d4080ff)"/><path d="M9 7 H13 L15 10 V13 Z" fill="#000080" style="shape-rendering:auto"/><path d="M2.5 0.5 H15.5 V13.5 H8.5 V7.5 H2.5Z M9 1 V13 M3 7 H15" fill="none" stroke="#000" stroke-width="1" /><path d="M0 15.5 V8.5 H2.3 L5 12.5 V8.5 H7 V15.5 H4.7 L2 11.5 V15.5Z" fill="#000" style="shape-rendering:auto"/></svg><svg class="ic" style="left:403px;top:90px;width:16px;height:16px" viewBox="0 0 16 16" ><path d="M0.5 1.5 H12 L15.5 5 V15.5 H0.5Z" fill="none" stroke="#b4b4b4" stroke-width="1.2" style="shape-rendering:auto"/><text x="2" y="9.5" font-family="Liberation Sans" font-size="7" font-weight="normal" font-style="normal" fill="#b4b4b4" letter-spacing="0" style="shape-rendering:auto">1.2</text><path d="M2 12.5 Q6 13.5 8 11 T14 9" fill="none" stroke="#b4b4b4" stroke-width="1" style="shape-rendering:auto"/><text x="11" y="9.5" font-family="Liberation Sans" font-size="7" font-weight="normal" font-style="normal" fill="#b4b4b4" letter-spacing="0" style="shape-rendering:auto">3</text></svg><svg class="ic" style="left:426px;top:90px;width:16px;height:16px" viewBox="0 0 16 16" ><path d="M0.5 1.5 H12 L15.5 5 V15.5 H0.5Z" fill="none" stroke="#b4b4b4" stroke-width="1.2" style="shape-rendering:auto"/><path d="M2 13 H8 C10 13 12 11 13 8" fill="none" stroke="#b4b4b4" stroke-width="1" style="shape-rendering:auto"/><text x="11" y="9" font-family="Liberation Sans" font-size="6" font-weight="normal" font-style="normal" fill="#b4b4b4" letter-spacing="0" style="shape-rendering:auto">3</text></svg><svg class="ic" style="left:450px;top:90px;width:16px;height:16px" viewBox="0 0 16 16" ><path d="M1.5 3 V14 M4.5 5 V14 M7 7 V14 M9.5 8.5 V14 M12 10 V14 M14.5 11 V14 M1 14 H15 M1.5 3 L14.5 11" fill="none" stroke="#b4b4b4" stroke-width="1.1" style="shape-rendering:auto"/></svg><svg class="ic" style="left:473px;top:90px;width:16px;height:16px" viewBox="0 0 16 16" ><path d="M7 2.5 H14 M10.5 2.5 V9 C10.5 13 5 13 4.5 9 M1 9 C3 16 13 15 14 7" fill="none" stroke="#b4b4b4" stroke-width="1.5" style="shape-rendering:auto"/></svg><svg class="ic" style="left:496px;top:90px;width:16px;height:16px" viewBox="0 0 16 16" ><path d="M8 1 V9 M5.5 6.5 L8 9.5 L10.5 6.5 M10 3 C14 5 14 10 11 11" fill="none" stroke="#b4b4b4" stroke-width="1.2" style="shape-rendering:auto"/><path d="M1.5 15.5 L6 9.5 H10 L14 15.5Z" fill="#b4b4b4" style="shape-rendering:auto"/><path d="M3 9 C1 9 1 12 3 12" fill="none" stroke="#b4b4b4" stroke-width="1.1" style="shape-rendering:auto"/></svg><svg class="ic" style="left:518px;top:90px;width:16px;height:16px" viewBox="0 0 16 16" ><text x="0" y="9" font-family="Liberation Sans" font-size="11" font-weight="bold" font-style="normal" fill="#b4b4b4" letter-spacing="0" style="shape-rendering:auto">K</text><path d="M8.5 4 V9 H11 M12.5 3 V9 L9.5 14 M7 14.5 H16" fill="none" stroke="#b4b4b4" stroke-width="1.2" style="shape-rendering:auto"/><path d="M8 16 l1 -1.5 m1 1.5 l1 -1.5 m1 1.5 l1 -1.5 m1 1.5 l1 -1.5" fill="none" stroke="#b4b4b4" stroke-width="0.7" style="shape-rendering:auto"/></svg><svg class="ic" style="left:542px;top:90px;width:16px;height:16px" viewBox="0 0 16 16" ><rect x="2" y="1" width="6" height="6" fill="#fff"/><rect x="2" y="1" width="6" height="6" fill="url(#dff0000)"/><rect x="8" y="1" width="6" height="6" fill="#fff"/><rect x="8" y="1" width="6" height="6" fill="url(#dffff00)"/><rect x="8" y="7" width="6" height="6" fill="#fff"/><rect x="8" y="7" width="6" height="6" fill="url(#dff0000)"/><path d="M1.5 0.5 H14.5 V13.5 H7.5 V7.5 H1.5Z M8 1 V13 M2 7 H14" fill="none" stroke="#000" stroke-width="1" /><text x="0" y="14.5" font-family="Liberation Sans" font-size="10" font-weight="bold" font-style="normal" fill="#000" letter-spacing="0" style="shape-rendering:auto">c</text></svg><div class="sunk" style="left:580px;top:87px;width:32px;height:21px;background:#fff"></div><div class="t" style="left:586px;top:91px;font-size:14px">1</div><div class="spin" style="left:612px;top:87px;height:10px"></div><div class="spin" style="left:612px;top:97px;height:11px"></div><svg class="a" style="left:618px;top:90px" width="5" height="3"><path d="M0 3 L2.5 0 L5 3Z" fill="#000"/></svg><svg class="a" style="left:618px;top:101px" width="5" height="3"><path d="M0 0 L2.5 3 L5 0Z" fill="#000"/></svg><div class="sunk" style="left:631px;top:87px;width:23px;height:21px;background:#f0f0f0"></div><div class="spin" style="left:654px;top:87px;height:10px"></div><div class="spin" style="left:654px;top:97px;height:11px"></div><svg class="a" style="left:660px;top:90px" width="5" height="3"><path d="M0 3 L2.5 0 L5 3Z" fill="#b0b0b0"/></svg><svg class="a" style="left:660px;top:101px" width="5" height="3"><path d="M0 0 L2.5 3 L5 0Z" fill="#b0b0b0"/></svg><div class="sunk" style="left:672px;top:87px;width:14px;height:21px;background:#f0f0f0"></div><div class="t" style="left:675px;top:91px;font-size:14px;color:#9a9a9a">2</div><div class="spin" style="left:686px;top:87px;height:10px"></div><div class="spin" style="left:686px;top:97px;height:11px"></div><svg class="a" style="left:692px;top:90px" width="5" height="3"><path d="M0 3 L2.5 0 L5 3Z" fill="#b0b0b0"/></svg><svg class="a" style="left:692px;top:101px" width="5" height="3"><path d="M0 0 L2.5 3 L5 0Z" fill="#b0b0b0"/></svg><div class="a" style="left:704px;top:87px;width:29px;height:21px;background:#f0f0f0;border:1px solid #000;box-shadow:inset 1px 1px 0 #fff,inset -1px -1px 0 #696969,inset -2px -2px 0 #a0a0a0"></div><svg class="ic" style="left:707px;top:90px;width:24px;height:16px" viewBox="0 0 24 16" ><circle cx="15" cy="10" r="8" fill="#008080" style="shape-rendering:auto"/><path d="M2 12.5 H10" fill="none" stroke="#00e000" stroke-width="2.6" stroke-dasharray="2.2 1"/><path d="M9 9 L13 13.5 L21 2" fill="none" stroke="#00f000" stroke-width="2.6" style="shape-rendering:auto"/></svg><div class="a" style="left:0;top:114px;width:1152px;height:728px;background:#ffffff"></div><div class="a" style="left:0;top:114px;width:1152px;height:1px;background:#a0a0a0"></div><div class="a" style="left:0;top:115px;width:1152px;height:1px;background:#696969"></div><div class="a" style="left:0;top:114px;width:1px;height:728px;background:#a0a0a0"></div><div class="a" style="left:1px;top:115px;width:1px;height:726px;background:#696969"></div><div class="a" style="left:1150px;top:114px;width:2px;height:728px;background:#f4f4f4"></div><div class="a" style="left:2px;top:116px;width:575px;height:724px;background:#3c3c3c;border-radius:7px 7px 0 0"></div><div class="a" style="left:3px;top:118px;width:572px;height:721px;background:linear-gradient(#bccfe3 0,#cfdeee 20px,#dae6f3 33px,#d9e5f2 100%);border-radius:6px 6px 0 0;box-shadow:inset 1px 1px 0 #eef4fa"></div><svg class="a" style="left:13px;top:127px" width="22" height="21" viewBox="0 0 22 21"><path d="M0.5 0.5 H19.5 V12 L9 19.5 H0.5Z" fill="#fff" stroke="#000" stroke-width="1"/><path d="M0.5 0.5 V19.5" stroke="#000" stroke-width="1.6"/><path d="M0 19.6 H9 L19.5 12" stroke="#000" stroke-width="1" fill="none" stroke-dasharray="2 1"/><path d="M4 3 h11" stroke="#e8232b" stroke-width="2" stroke-dasharray="2 1"/><path d="M4 7.5 h12 M4 10.5 h12 M4 13.5 h9" stroke="#c8c8c8" stroke-width="1"/></svg><div class="t ctitle" style="left:37px;top:129px;color:#3e4650" id="lt">перехрестя-секция 3нииасс:2</div><div class="cbtn in" style="left:463px;top:128px;width:32px;height:18px"></div><div class="a" style="left:473px;top:135px;width:11px;height:5px;background:#fff;border:1px solid #5b6478;border-radius:1px"></div><div class="cbtn in" style="left:497px;top:128px;width:33px;height:18px"></div><svg class="a" style="left:507px;top:131px" width="13" height="11"><rect x="1" y="1" width="11" height="9" rx="1.5" fill="#fff" stroke="#5b6478"/><rect x="3.5" y="3.5" width="6" height="4" fill="#d3e0ef" stroke="#5b6478"/></svg><div class="cbtn in" style="left:533px;top:128px;width:33px;height:18px"></div><svg class="a" style="left:542px;top:131px" width="14" height="12" viewBox="0 0 14 12"><path d="M2 1.5 L4.6 1.5 L7 4 L9.4 1.5 L12 1.5 L8.6 5.5 L12 9.5 L9.4 9.5 L7 7 L4.6 9.5 L2 9.5 L5.4 5.5 Z" fill="#fff" stroke="#5b6478" stroke-width=".9"/></svg><div class="a" style="left:12px;top:150px;width:555px;height:681px;background:#fff;border:1px solid;border-color:#6d6d6d #fff #fff #6d6d6d"></div><svg style="left:13px;top:151px" width="535" height="661" viewBox="13 151 535 661"><defs><clipPath id="lslab"><path d="M171 518 H560 V820 H-2.5Z"/></clipPath><clipPath id="lslabm"><path d="M176 592 H560 V820 H44Z"/></clipPath></defs><g clip-path="url(#lslab)" shape-rendering="crispEdges"><path d="M171 518L560 518M167 524.9L560 524.9M163 531.8L560 531.8M159.1 538.7L560 538.7M155.1 545.6L560 545.6M151.1 552.5L560 552.5M147.1 559.4L560 559.4M143.2 566.3L560 566.3M139.2 573.2L560 573.2M135.2 580.1L560 580.1M131.2 587L560 587M127.2 593.9L560 593.9M123.3 600.8L560 600.8M119.3 607.7L560 607.7M115.3 614.6L560 614.6M111.3 621.5L560 621.5M107.4 628.4L560 628.4M103.4 635.3L560 635.3M99.4 642.2L560 642.2M95.4 649.1L560 649.1M91.4 656L560 656M87.5 662.9L560 662.9M83.5 669.8L560 669.8M79.5 676.7L560 676.7M75.5 683.6L560 683.6M71.6 690.5L560 690.5M67.6 697.4L560 697.4M63.6 704.3L560 704.3M59.6 711.2L560 711.2M55.6 718.1L560 718.1M51.7 725L560 725M47.7 731.9L560 731.9M43.7 738.8L560 738.8M171 518L41.9 742M183.8 518L54.7 742M196.6 518L67.5 742M209.4 518L80.3 742M222.2 518L93.1 742M235 518L105.9 742M247.8 518L118.7 742M260.6 518L131.5 742M273.4 518L144.3 742M286.2 518L157.1 742M299 518L169.9 742M311.8 518L182.7 742M324.6 518L195.5 742M337.4 518L208.3 742M350.2 518L221.1 742M363 518L233.9 742M375.8 518L246.7 742M388.6 518L259.5 742M401.4 518L272.3 742M414.2 518L285.1 742M427 518L297.9 742M439.8 518L310.7 742M452.6 518L323.5 742M465.4 518L336.3 742M478.2 518L349.1 742M491 518L361.9 742M503.8 518L374.7 742M516.6 518L387.5 742M529.4 518L400.3 742M542.2 518L413.1 742M555 518L425.9 742M567.8 518L438.7 742M580.6 518L451.5 742M593.4 518L464.3 742M606.2 518L477.1 742M619 518L489.9 742M631.8 518L502.7 742M644.6 518L515.5 742M657.4 518L528.3 742M670.2 518L541.1 742M683 518L553.9 742M695.8 518L566.7 742" stroke="#000080" stroke-width="1" fill="none"/><path d="M169.7 520.3L560 520.3M165.7 527.2L560 527.2M161.7 534.1L560 534.1M157.7 541L560 541M153.8 547.9L560 547.9M149.8 554.8L560 554.8M145.8 561.7L560 561.7M141.8 568.6L560 568.6M137.9 575.5L560 575.5M133.9 582.4L560 582.4M129.9 589.3L560 589.3M125.9 596.2L560 596.2M121.9 603.1L560 603.1M118 610L560 610M114 616.9L560 616.9M110 623.8L560 623.8M106 630.7L560 630.7M102 637.6L560 637.6M98.1 644.5L560 644.5M94.1 651.4L560 651.4M90.1 658.3L560 658.3M86.1 665.2L560 665.2M82.2 672.1L560 672.1M78.2 679L560 679M74.2 685.9L560 685.9M70.2 692.8L560 692.8M66.2 699.7L560 699.7M62.3 706.6L560 706.6M58.3 713.5L560 713.5M54.3 720.4L560 720.4M50.3 727.3L560 727.3M46.4 734.2L560 734.2M42.4 741.1L560 741.1M172.6 518L43.5 742M185.4 518L56.3 742M198.2 518L69.1 742M211 518L81.9 742M223.8 518L94.7 742M236.6 518L107.5 742M249.4 518L120.3 742M262.2 518L133.1 742M275 518L145.9 742M287.8 518L158.7 742M300.6 518L171.5 742M313.4 518L184.3 742M326.2 518L197.1 742M339 518L209.9 742M351.8 518L222.7 742M364.6 518L235.5 742M377.4 518L248.3 742M390.2 518L261.1 742M403 518L273.9 742M415.8 518L286.7 742M428.6 518L299.5 742M441.4 518L312.3 742M454.2 518L325.1 742M467 518L337.9 742M479.8 518L350.7 742M492.6 518L363.5 742M505.4 518L376.3 742M518.2 518L389.1 742M531 518L401.9 742M543.8 518L414.7 742M556.6 518L427.5 742M569.4 518L440.3 742M582.2 518L453.1 742M595 518L465.9 742M607.8 518L478.7 742M620.6 518L491.5 742M633.4 518L504.3 742M646.2 518L517.1 742M659 518L529.9 742M671.8 518L542.7 742M684.6 518L555.5 742M697.4 518L568.3 742" stroke="#000080" stroke-width="1" fill="none"/><path d="M13 742L548 742M13 746.3L548 746.3M13 750.6L548 750.6M13 754.9L548 754.9M13 759.2L548 759.2M13 763.5L548 763.5M13 767.8L548 767.8M13 772.1L548 772.1M13 776.4L548 776.4M13 780.7L548 780.7M13 785L548 785M13 789.3L548 789.3M13 793.6L548 793.6M13 797.9L548 797.9M13 802.2L548 802.2M13 806.5L548 806.5M13 810.8L548 810.8M13 742L13 812M18.2 742L18.2 812M23.4 742L23.4 812M28.6 742L28.6 812M33.8 742L33.8 812M39 742L39 812M44.2 742L44.2 812M49.4 742L49.4 812M54.6 742L54.6 812M59.8 742L59.8 812M65 742L65 812M70.2 742L70.2 812M75.4 742L75.4 812M80.6 742L80.6 812M85.8 742L85.8 812M91 742L91 812M96.2 742L96.2 812M101.4 742L101.4 812M106.6 742L106.6 812M111.8 742L111.8 812M117 742L117 812M122.2 742L122.2 812M127.4 742L127.4 812M132.6 742L132.6 812M137.8 742L137.8 812M143 742L143 812M148.2 742L148.2 812M153.4 742L153.4 812M158.6 742L158.6 812M163.8 742L163.8 812M169 742L169 812M174.2 742L174.2 812M179.4 742L179.4 812M184.6 742L184.6 812M189.8 742L189.8 812M195 742L195 812M200.2 742L200.2 812M205.4 742L205.4 812M210.6 742L210.6 812M215.8 742L215.8 812M221 742L221 812M226.2 742L226.2 812M231.4 742L231.4 812M236.6 742L236.6 812M241.8 742L241.8 812M247 742L247 812M252.2 742L252.2 812M257.4 742L257.4 812M262.6 742L262.6 812M267.8 742L267.8 812M273 742L273 812M278.2 742L278.2 812M283.4 742L283.4 812M288.6 742L288.6 812M293.8 742L293.8 812M299 742L299 812M304.2 742L304.2 812M309.4 742L309.4 812M314.6 742L314.6 812M319.8 742L319.8 812M325 742L325 812M330.2 742L330.2 812M335.4 742L335.4 812M340.6 742L340.6 812M345.8 742L345.8 812M351 742L351 812M356.2 742L356.2 812M361.4 742L361.4 812M366.6 742L366.6 812M371.8 742L371.8 812M377 742L377 812M382.2 742L382.2 812M387.4 742L387.4 812M392.6 742L392.6 812M397.8 742L397.8 812M403 742L403 812M408.2 742L408.2 812M413.4 742L413.4 812M418.6 742L418.6 812M423.8 742L423.8 812M429 742L429 812M434.2 742L434.2 812M439.4 742L439.4 812M444.6 742L444.6 812M449.8 742L449.8 812M455 742L455 812M460.2 742L460.2 812M465.4 742L465.4 812M470.6 742L470.6 812M475.8 742L475.8 812M481 742L481 812M486.2 742L486.2 812M491.4 742L491.4 812M496.6 742L496.6 812M501.8 742L501.8 812M507 742L507 812M512.2 742L512.2 812M517.4 742L517.4 812M522.6 742L522.6 812M527.8 742L527.8 812M533 742L533 812M538.2 742L538.2 812M543.4 742L543.4 812" stroke="#000080" stroke-width="1" fill="none"/><path d="M13 742H548M13 789H548" stroke="#000080" stroke-width="3" fill="none"/><path d="M41.6 742L1.2 812M49.3 742L8.9 812M57 742L16.6 812M64.7 742L24.3 812M72.4 742L32 812M80.1 742L39.7 812M87.8 742L47.4 812M95.5 742L55.1 812M103.2 742L62.8 812M110.9 742L70.5 812M118.6 742L78.2 812M126.3 742L85.9 812M134 742L93.6 812M141.7 742L101.3 812M149.4 742L109 812M157.1 742L116.7 812M164.8 742L124.4 812M172.5 742L132.1 812M180.2 742L139.8 812M187.9 742L147.5 812M195.6 742L155.2 812M203.3 742L162.9 812M211 742L170.6 812M218.7 742L178.3 812M226.4 742L186 812M234.1 742L193.7 812M241.8 742L201.4 812M249.5 742L209.1 812M257.2 742L216.8 812M264.9 742L224.5 812M272.6 742L232.2 812M280.3 742L239.9 812M288 742L247.6 812M295.7 742L255.3 812M303.4 742L263 812M311.1 742L270.7 812M318.8 742L278.4 812M326.5 742L286.1 812M334.2 742L293.8 812M341.9 742L301.5 812M349.6 742L309.2 812M357.3 742L316.9 812M365 742L324.6 812M372.7 742L332.3 812M380.4 742L340 812M388.1 742L347.7 812M395.8 742L355.4 812M403.5 742L363.1 812M411.2 742L370.8 812M418.9 742L378.5 812M426.6 742L386.2 812M434.3 742L393.9 812M442 742L401.6 812M449.7 742L409.3 812M457.4 742L417 812M465.1 742L424.7 812M472.8 742L432.4 812M480.5 742L440.1 812M488.2 742L447.8 812M495.9 742L455.5 812M503.6 742L463.2 812M511.3 742L470.9 812M519 742L478.6 812M526.7 742L486.3 812M534.4 742L494 812M542.1 742L501.7 812M549.8 742L509.4 812M557.5 742L517.1 812M565.2 742L524.8 812M572.9 742L532.5 812M580.6 742L540.2 812M588.3 742L547.9 812M596 742L555.6 812M603.7 742L563.3 812" stroke="#000080" stroke-width="1" fill="none"/></g><path d="M13 742L110 742M13 750.6L110 750.6M13 759.2L110 759.2M13 767.8L110 767.8M13 776.4L110 776.4M13 785L110 785M13 793.6L110 793.6M13 802.2L110 802.2M13 810.8L110 810.8M13 742L13 812M23.4 742L23.4 812M33.8 742L33.8 812M44.2 742L44.2 812M54.6 742L54.6 812M65 742L65 812M75.4 742L75.4 812M85.8 742L85.8 812M96.2 742L96.2 812M106.6 742L106.6 812" stroke="#000080" stroke-width="1" fill="none" shape-rendering="crispEdges"/><path d="M13 742H120M13 789H120" stroke="#000080" stroke-width="3" fill="none" shape-rendering="crispEdges"/><path d="M186.5 180.5L380.5 180.5L478.5 180.5L575.5 180.5L770.5 180.5M186.5 297.5L380.5 297.5L478.5 297.5L575.5 297.5L770.5 297.5M186.5 433.5L380.5 433.5L478.5 433.5L575.5 433.5L770.5 433.5M105.5 320.5L299.5 320.5L397.5 320.5L494.5 320.5L689.5 320.5M105.5 437.5L299.5 437.5L397.5 437.5L494.5 437.5L689.5 437.5M105.5 573.5L299.5 573.5L397.5 573.5L494.5 573.5L689.5 573.5M24.5 461.5L218.5 461.5L316.5 461.5L413.5 461.5L608.5 461.5M24.5 578.5L218.5 578.5L316.5 578.5L413.5 578.5L608.5 578.5M24.5 714.5L218.5 714.5L316.5 714.5L413.5 714.5L608.5 714.5M-56.5 601.5L137.5 601.5L235.5 601.5L332.5 601.5L527.5 601.5M-56.5 718.5L137.5 718.5L235.5 718.5L332.5 718.5L527.5 718.5M-56.5 854.5L137.5 854.5L235.5 854.5L332.5 854.5L527.5 854.5M-137.5 742.5L56.5 742.5L154.5 742.5L251.5 742.5L446.5 742.5M-137.5 859.5L56.5 859.5L154.5 859.5L251.5 859.5L446.5 859.5M-137.5 995.5L56.5 995.5L154.5 995.5L251.5 995.5L446.5 995.5M-218.5 882.5L-24.5 882.5L73.5 882.5L170.5 882.5L365.5 882.5M-218.5 999.5L-24.5 999.5L73.5 999.5L170.5 999.5L365.5 999.5M-218.5 1135.5L-24.5 1135.5L73.5 1135.5L170.5 1135.5L365.5 1135.5M186.5 180.5L105.5 320.5L24.5 461.5L-56.5 601.5L-137.5 742.5L-218.5 882.5M186.5 297.5L105.5 437.5L24.5 578.5L-56.5 718.5L-137.5 859.5L-218.5 999.5M186.5 433.5L105.5 573.5L24.5 714.5L-56.5 854.5L-137.5 995.5L-218.5 1135.5M380.5 180.5L299.5 320.5L218.5 461.5L137.5 601.5L56.5 742.5L-24.5 882.5M380.5 297.5L299.5 437.5L218.5 578.5L137.5 718.5L56.5 859.5L-24.5 999.5M380.5 433.5L299.5 573.5L218.5 714.5L137.5 854.5L56.5 995.5L-24.5 1135.5M478.5 180.5L397.5 320.5M478.5 297.5L397.5 437.5M478.5 433.5L397.5 573.5M575.5 180.5L494.5 320.5L413.5 461.5L332.5 601.5L251.5 742.5L170.5 882.5M575.5 297.5L494.5 437.5L413.5 578.5L332.5 718.5L251.5 859.5L170.5 999.5M575.5 433.5L494.5 573.5L413.5 714.5L332.5 854.5L251.5 995.5L170.5 1135.5M770.5 180.5L689.5 320.5L608.5 461.5L527.5 601.5L446.5 742.5L365.5 882.5M770.5 297.5L689.5 437.5L608.5 578.5L527.5 718.5L446.5 859.5L365.5 999.5M770.5 433.5L689.5 573.5L608.5 714.5L527.5 854.5L446.5 995.5L365.5 1135.5M186.5 180.5L186.5 297.5L186.5 433.5L186.5 536.5M380.5 180.5L380.5 297.5L380.5 433.5L380.5 536.5M478.5 180.5L478.5 297.5L478.5 433.5L478.5 536.5M575.5 180.5L575.5 297.5L575.5 433.5L575.5 536.5M770.5 180.5L770.5 297.5L770.5 433.5L770.5 536.5M105.5 320.5L105.5 437.5L105.5 573.5L105.5 676.5M299.5 320.5L299.5 437.5L299.5 573.5L299.5 676.5M397.5 320.5L397.5 437.5L397.5 573.5L397.5 676.5M494.5 320.5L494.5 437.5L494.5 573.5L494.5 676.5M689.5 320.5L689.5 437.5L689.5 573.5L689.5 676.5M24.5 461.5L24.5 578.5L24.5 714.5L24.5 817.5M218.5 461.5L218.5 578.5L218.5 714.5L218.5 817.5M413.5 461.5L413.5 578.5L413.5 714.5L413.5 817.5M608.5 461.5L608.5 578.5L608.5 714.5L608.5 817.5M-56.5 601.5L-56.5 718.5L-56.5 854.5L-56.5 957.5M137.5 601.5L137.5 718.5L137.5 854.5L137.5 957.5M332.5 601.5L332.5 718.5L332.5 854.5L332.5 957.5M527.5 601.5L527.5 718.5L527.5 854.5L527.5 957.5M-137.5 742.5L-137.5 859.5L-137.5 995.5L-137.5 1098.5M56.5 742.5L56.5 859.5L56.5 995.5L56.5 1098.5M251.5 742.5L251.5 859.5L251.5 995.5L251.5 1098.5M446.5 742.5L446.5 859.5L446.5 995.5L446.5 1098.5M-218.5 882.5L-218.5 999.5L-218.5 1135.5L-218.5 1238.5M-24.5 882.5L-24.5 999.5L-24.5 1135.5L-24.5 1238.5M170.5 882.5L170.5 999.5L170.5 1135.5L170.5 1238.5M365.5 882.5L365.5 999.5L365.5 1135.5L365.5 1238.5" stroke="#000" stroke-width="1" fill="none" shape-rendering="crispEdges"/><path d="M186.5 180.5L380.5 180.5L478.5 180.5L575.5 180.5L770.5 180.5M186.5 297.5L380.5 297.5L478.5 297.5L575.5 297.5L770.5 297.5M186.5 433.5L380.5 433.5L478.5 433.5L575.5 433.5L770.5 433.5M105.5 320.5L299.5 320.5L397.5 320.5L494.5 320.5L689.5 320.5M105.5 437.5L299.5 437.5L397.5 437.5L494.5 437.5L689.5 437.5M105.5 573.5L299.5 573.5L397.5 573.5L494.5 573.5L689.5 573.5M24.5 461.5L218.5 461.5L316.5 461.5L413.5 461.5L608.5 461.5M24.5 578.5L218.5 578.5L316.5 578.5L413.5 578.5L608.5 578.5M24.5 714.5L218.5 714.5L316.5 714.5L413.5 714.5L608.5 714.5M-56.5 601.5L137.5 601.5L235.5 601.5L332.5 601.5L527.5 601.5M-56.5 718.5L137.5 718.5L235.5 718.5L332.5 718.5L527.5 718.5M-56.5 854.5L137.5 854.5L235.5 854.5L332.5 854.5L527.5 854.5M-137.5 742.5L56.5 742.5L154.5 742.5L251.5 742.5L446.5 742.5M-137.5 859.5L56.5 859.5L154.5 859.5L251.5 859.5L446.5 859.5M-137.5 995.5L56.5 995.5L154.5 995.5L251.5 995.5L446.5 995.5M-218.5 882.5L-24.5 882.5L73.5 882.5L170.5 882.5L365.5 882.5M-218.5 999.5L-24.5 999.5L73.5 999.5L170.5 999.5L365.5 999.5M-218.5 1135.5L-24.5 1135.5L73.5 1135.5L170.5 1135.5L365.5 1135.5M186.5 180.5L105.5 320.5L24.5 461.5L-56.5 601.5L-137.5 742.5L-218.5 882.5M186.5 297.5L105.5 437.5L24.5 578.5L-56.5 718.5L-137.5 859.5L-218.5 999.5M186.5 433.5L105.5 573.5L24.5 714.5L-56.5 854.5L-137.5 995.5L-218.5 1135.5M380.5 180.5L299.5 320.5L218.5 461.5L137.5 601.5L56.5 742.5L-24.5 882.5M380.5 297.5L299.5 437.5L218.5 578.5L137.5 718.5L56.5 859.5L-24.5 999.5M380.5 433.5L299.5 573.5L218.5 714.5L137.5 854.5L56.5 995.5L-24.5 1135.5M478.5 180.5L397.5 320.5M478.5 297.5L397.5 437.5M478.5 433.5L397.5 573.5M575.5 180.5L494.5 320.5L413.5 461.5L332.5 601.5L251.5 742.5L170.5 882.5M575.5 297.5L494.5 437.5L413.5 578.5L332.5 718.5L251.5 859.5L170.5 999.5M575.5 433.5L494.5 573.5L413.5 714.5L332.5 854.5L251.5 995.5L170.5 1135.5M770.5 180.5L689.5 320.5L608.5 461.5L527.5 601.5L446.5 742.5L365.5 882.5M770.5 297.5L689.5 437.5L608.5 578.5L527.5 718.5L446.5 859.5L365.5 999.5M770.5 433.5L689.5 573.5L608.5 714.5L527.5 854.5L446.5 995.5L365.5 1135.5" stroke="#00e000" stroke-width="2.6" fill="none" stroke-dasharray="2.6 10.4" stroke-dashoffset="-6"/><path d="M186.5 180.5L186.5 297.5L186.5 433.5L186.5 536.5M380.5 180.5L380.5 297.5L380.5 433.5L380.5 536.5M478.5 180.5L478.5 297.5L478.5 433.5L478.5 536.5M575.5 180.5L575.5 297.5L575.5 433.5L575.5 536.5M770.5 180.5L770.5 297.5L770.5 433.5L770.5 536.5M105.5 320.5L105.5 437.5L105.5 573.5L105.5 676.5M299.5 320.5L299.5 437.5L299.5 573.5L299.5 676.5M397.5 320.5L397.5 437.5L397.5 573.5L397.5 676.5M494.5 320.5L494.5 437.5L494.5 573.5L494.5 676.5M689.5 320.5L689.5 437.5L689.5 573.5L689.5 676.5M24.5 461.5L24.5 578.5L24.5 714.5L24.5 817.5M218.5 461.5L218.5 578.5L218.5 714.5L218.5 817.5M413.5 461.5L413.5 578.5L413.5 714.5L413.5 817.5M608.5 461.5L608.5 578.5L608.5 714.5L608.5 817.5M-56.5 601.5L-56.5 718.5L-56.5 854.5L-56.5 957.5M137.5 601.5L137.5 718.5L137.5 854.5L137.5 957.5M332.5 601.5L332.5 718.5L332.5 854.5L332.5 957.5M527.5 601.5L527.5 718.5L527.5 854.5L527.5 957.5M-137.5 742.5L-137.5 859.5L-137.5 995.5L-137.5 1098.5M56.5 742.5L56.5 859.5L56.5 995.5L56.5 1098.5M251.5 742.5L251.5 859.5L251.5 995.5L251.5 1098.5M446.5 742.5L446.5 859.5L446.5 995.5L446.5 1098.5M-218.5 882.5L-218.5 999.5L-218.5 1135.5L-218.5 1238.5M-24.5 882.5L-24.5 999.5L-24.5 1135.5L-24.5 1238.5M170.5 882.5L170.5 999.5L170.5 1135.5L170.5 1238.5M365.5 882.5L365.5 999.5L365.5 1135.5L365.5 1238.5" stroke="#00e000" stroke-width="2.6" fill="none" stroke-dasharray="2.6 26.6" stroke-dashoffset="-18"/><g clip-path="url(#lslabm)" shape-rendering="crispEdges"><path d="M176 592L560 592M170.7 601.2L560 601.2M165.4 610.4L560 610.4M160.1 619.6L560 619.6M154.8 628.8L560 628.8M149.5 638L560 638M144.2 647.2L560 647.2M138.9 656.4L560 656.4M133.6 665.6L560 665.6M128.3 674.8L560 674.8M123 684L560 684M117.7 693.2L560 693.2M112.4 702.4L560 702.4M107 711.6L560 711.6M101.7 720.8L560 720.8M96.4 730L560 730M91.1 739.2L560 739.2M85.8 748.4L560 748.4M80.5 757.6L560 757.6M75.2 766.8L560 766.8M69.9 776L560 776M64.6 785.2L560 785.2M59.3 794.4L560 794.4M54 803.6L560 803.6M176 592L49.2 812M191.4 592L64.6 812M206.8 592L80 812M222.2 592L95.4 812M237.6 592L110.8 812M253 592L126.2 812M268.4 592L141.6 812M283.8 592L157 812M299.2 592L172.4 812M314.6 592L187.8 812M330 592L203.2 812M345.4 592L218.6 812M360.8 592L234 812M376.2 592L249.4 812M391.6 592L264.8 812M407 592L280.2 812M422.4 592L295.6 812M437.8 592L311 812M453.2 592L326.4 812M468.6 592L341.8 812M484 592L357.2 812M499.4 592L372.6 812M514.8 592L388 812M530.2 592L403.4 812M545.6 592L418.8 812M561 592L434.2 812M576.4 592L449.6 812M591.8 592L465 812M607.2 592L480.4 812M622.6 592L495.8 812M638 592L511.2 812M653.4 592L526.6 812M668.8 592L542 812M684.2 592L557.4 812M699.6 592L572.8 812" stroke="#ff00ff" stroke-width="1" fill="none"/><path d="M174.3 595L560 595M170.3 601.9L560 601.9M166.3 608.8L560 608.8M162.3 615.7L560 615.7M158.4 622.6L560 622.6M154.4 629.5L560 629.5M150.4 636.4L560 636.4M146.4 643.3L560 643.3M142.4 650.2L560 650.2M138.5 657.1L560 657.1M134.5 664L560 664M130.5 670.9L560 670.9M126.5 677.8L560 677.8M122.6 684.7L560 684.7M118.6 691.6L560 691.6M114.6 698.5L560 698.5M110.6 705.4L560 705.4M106.6 712.3L560 712.3M102.7 719.2L560 719.2M98.7 726.1L560 726.1M94.7 733L560 733M90.7 739.9L560 739.9M86.8 746.8L560 746.8M82.8 753.7L560 753.7M78.8 760.6L560 760.6M74.8 767.5L560 767.5M70.8 774.4L560 774.4M66.9 781.3L560 781.3M62.9 788.2L560 788.2M58.9 795.1L560 795.1M54.9 802L560 802M51 808.9L560 808.9M181 592L54.2 812M192.6 592L65.8 812M204.2 592L77.4 812M215.8 592L89 812M227.4 592L100.6 812M239 592L112.2 812M250.6 592L123.8 812M262.2 592L135.4 812M273.8 592L147 812M285.4 592L158.6 812M297 592L170.2 812M308.6 592L181.8 812M320.2 592L193.4 812M331.8 592L205 812M343.4 592L216.6 812M355 592L228.2 812M366.6 592L239.8 812M378.2 592L251.4 812M389.8 592L263 812M401.4 592L274.6 812M413 592L286.2 812M424.6 592L297.8 812M436.2 592L309.4 812M447.8 592L321 812M459.4 592L332.6 812M471 592L344.2 812M482.6 592L355.8 812M494.2 592L367.4 812M505.8 592L379 812M517.4 592L390.6 812M529 592L402.2 812M540.6 592L413.8 812M552.2 592L425.4 812M563.8 592L437 812M575.4 592L448.6 812M587 592L460.2 812M598.6 592L471.8 812M610.2 592L483.4 812M621.8 592L495 812M633.4 592L506.6 812M645 592L518.2 812M656.6 592L529.8 812M668.2 592L541.4 812M679.8 592L553 812M691.4 592L564.6 812" stroke="#ff00ff" stroke-width="1" fill="none"/></g><path d="M171 518L548 518M167 524.9L548 524.9M163 531.8L548 531.8M159.1 538.7L548 538.7M155.1 545.6L548 545.6M151.1 552.5L548 552.5M147.1 559.4L548 559.4M143.2 566.3L548 566.3M139.2 573.2L548 573.2M135.2 580.1L548 580.1M131.2 587L548 587M127.2 593.9L548 593.9M123.3 600.8L548 600.8M119.3 607.7L548 607.7M115.3 614.6L548 614.6M111.3 621.5L548 621.5M107.4 628.4L548 628.4M103.4 635.3L548 635.3M99.4 642.2L548 642.2M95.4 649.1L548 649.1M91.4 656L548 656M87.5 662.9L548 662.9M83.5 669.8L548 669.8M79.5 676.7L548 676.7M75.5 683.6L548 683.6M71.6 690.5L548 690.5M67.6 697.4L548 697.4M63.6 704.3L548 704.3M59.6 711.2L548 711.2M55.6 718.1L548 718.1M51.7 725L548 725M47.7 731.9L548 731.9M43.7 738.8L548 738.8" stroke="#00e000" stroke-width="2.4" fill="none" stroke-dasharray="2.4 10.4" shape-rendering="crispEdges" clip-path="url(#lslab)"/><path d="M13 746L548 746M18 754.6L548 754.6M13 763.2L548 763.2M18 771.8L548 771.8M13 780.4L548 780.4M18 789L548 789M13 797.6L548 797.6M18 806.2L548 806.2" stroke="#00e000" stroke-width="2.4" fill="none" stroke-dasharray="2.4 13.2" shape-rendering="crispEdges"/><path d="M190.9 254.9L384.9 262.6L482.9 265.9L579.9 266.5L774.9 266.9M189.3 368.9L383.3 376.6L481.3 379.9L578.3 380.5L773.3 380.9M187.7 501.9L381.7 509.6L479.7 512.9L576.7 513.5L771.7 513.9M109.9 400.4L303.9 408.1L401.9 411.4L498.9 412L693.9 412.4M108.3 514.4L302.3 522.1L400.3 525.4L497.3 526L692.3 526.4M106.7 647.4L300.7 655.1L398.7 658.4L495.7 659L690.7 659.4M28.9 546.9L222.9 554.6L320.9 557.9L417.9 558.5L612.9 558.9M27.3 660.9L221.3 668.6L319.3 671.9L416.3 672.5L611.3 672.9M25.7 793.9L219.7 801.6L317.7 804.9L414.7 805.5L609.7 805.9M-52.1 692.4L141.9 700.1L239.9 703.4L336.9 704L531.9 704.4M-53.7 806.4L140.3 814.1L238.3 817.4L335.3 818L530.3 818.4M-55.3 939.4L138.7 947.1L236.7 950.4L333.7 951L528.7 951.4M-133.1 838.9L60.9 846.6L158.9 849.9L255.9 850.5L450.9 850.9M-134.7 952.9L59.3 960.6L157.3 963.9L254.3 964.5L449.3 964.9M-136.3 1085.9L57.7 1093.6L155.7 1096.9L252.7 1097.5L447.7 1097.9M-214.1 984.4L-20.1 992.1L77.9 995.4L174.9 996L369.9 996.4M-215.7 1098.4L-21.7 1106.1L76.3 1109.4L173.3 1110L368.3 1110.4M-217.3 1231.4L-23.3 1239.1L74.7 1242.4L171.7 1243L366.7 1243.4M190.9 254.9L109.9 400.4L28.9 546.9L-52.1 692.4L-133.1 838.9L-214.1 984.4M189.3 368.9L108.3 514.4L27.3 660.9L-53.7 806.4L-134.7 952.9L-215.7 1098.4M187.7 501.9L106.7 647.4L25.7 793.9L-55.3 939.4L-136.3 1085.9L-217.3 1231.4M384.9 262.6L303.9 408.1L222.9 554.6L141.9 700.1L60.9 846.6L-20.1 992.1M383.3 376.6L302.3 522.1L221.3 668.6L140.3 814.1L59.3 960.6L-21.7 1106.1M381.7 509.6L300.7 655.1L219.7 801.6L138.7 947.1L57.7 1093.6L-23.3 1239.1M482.9 265.9L401.9 411.4M481.3 379.9L400.3 525.4M479.7 512.9L398.7 658.4M579.9 266.5L498.9 412L417.9 558.5L336.9 704L255.9 850.5L174.9 996M578.3 380.5L497.3 526L416.3 672.5L335.3 818L254.3 964.5L173.3 1110M576.7 513.5L495.7 659L414.7 805.5L333.7 951L252.7 1097.5L171.7 1243M774.9 266.9L693.9 412.4L612.9 558.9L531.9 704.4L450.9 850.9L369.9 996.4M773.3 380.9L692.3 526.4L611.3 672.9L530.3 818.4L449.3 964.9L368.3 1110.4M771.7 513.9L690.7 659.4L609.7 805.9L528.7 951.4L447.7 1097.9L366.7 1243.4M190.9 254.9L189.3 368.9L187.7 501.9L186.1 601.9M384.9 262.6L383.3 376.6L381.7 509.6L380.1 609.6M482.9 265.9L481.3 379.9L479.7 512.9L478.1 612.9M579.9 266.5L578.3 380.5L576.7 513.5L575.1 613.5M774.9 266.9L773.3 380.9L771.7 513.9L770.1 613.9M109.9 400.4L108.3 514.4L106.7 647.4L105.1 747.4M303.9 408.1L302.3 522.1L300.7 655.1L299.1 755.1M401.9 411.4L400.3 525.4L398.7 658.4L397.1 758.4M498.9 412L497.3 526L495.7 659L494.1 759M693.9 412.4L692.3 526.4L690.7 659.4L689.1 759.4M28.9 546.9L27.3 660.9L25.7 793.9L24.1 893.9M222.9 554.6L221.3 668.6L219.7 801.6L218.1 901.6M417.9 558.5L416.3 672.5L414.7 805.5L413.1 905.5M612.9 558.9L611.3 672.9L609.7 805.9L608.1 905.9M-52.1 692.4L-53.7 806.4L-55.3 939.4L-56.9 1039.4M141.9 700.1L140.3 814.1L138.7 947.1L137.1 1047.1M336.9 704L335.3 818L333.7 951L332.1 1051M531.9 704.4L530.3 818.4L528.7 951.4L527.1 1051.4M-133.1 838.9L-134.7 952.9L-136.3 1085.9L-137.9 1185.9M60.9 846.6L59.3 960.6L57.7 1093.6L56.1 1193.6M255.9 850.5L254.3 964.5L252.7 1097.5L251.1 1197.5M450.9 850.9L449.3 964.9L447.7 1097.9L446.1 1197.9M-214.1 984.4L-215.7 1098.4L-217.3 1231.4L-218.9 1331.4M-20.1 992.1L-21.7 1106.1L-23.3 1239.1L-24.9 1339.1M174.9 996L173.3 1110L171.7 1243L170.1 1343M369.9 996.4L368.3 1110.4L366.7 1243.4L365.1 1343.4" stroke="#ff00ff" stroke-width="1" fill="none" shape-rendering="crispEdges"/><g fill="#ff8000" shape-rendering="crispEdges"><rect x="184.5" y="177.5" width="4" height="4"/><rect x="190.5" y="177.5" width="4" height="4"/><rect x="181.5" y="182.5" width="4" height="4"/><rect x="184.5" y="294.5" width="4" height="4"/><rect x="190.5" y="294.5" width="4" height="4"/><rect x="181.5" y="299.5" width="4" height="4"/><rect x="184.5" y="430.5" width="4" height="4"/><rect x="190.5" y="430.5" width="4" height="4"/><rect x="181.5" y="435.5" width="4" height="4"/><rect x="378.5" y="177.5" width="4" height="4"/><rect x="384.5" y="177.5" width="4" height="4"/><rect x="375.5" y="182.5" width="4" height="4"/><rect x="378.5" y="294.5" width="4" height="4"/><rect x="384.5" y="294.5" width="4" height="4"/><rect x="375.5" y="299.5" width="4" height="4"/><rect x="378.5" y="430.5" width="4" height="4"/><rect x="384.5" y="430.5" width="4" height="4"/><rect x="375.5" y="435.5" width="4" height="4"/><rect x="476.5" y="177.5" width="4" height="4"/><rect x="482.5" y="177.5" width="4" height="4"/><rect x="473.5" y="182.5" width="4" height="4"/><rect x="476.5" y="294.5" width="4" height="4"/><rect x="482.5" y="294.5" width="4" height="4"/><rect x="473.5" y="299.5" width="4" height="4"/><rect x="476.5" y="430.5" width="4" height="4"/><rect x="482.5" y="430.5" width="4" height="4"/><rect x="473.5" y="435.5" width="4" height="4"/><rect x="573.5" y="177.5" width="4" height="4"/><rect x="579.5" y="177.5" width="4" height="4"/><rect x="570.5" y="182.5" width="4" height="4"/><rect x="573.5" y="294.5" width="4" height="4"/><rect x="579.5" y="294.5" width="4" height="4"/><rect x="570.5" y="299.5" width="4" height="4"/><rect x="573.5" y="430.5" width="4" height="4"/><rect x="579.5" y="430.5" width="4" height="4"/><rect x="570.5" y="435.5" width="4" height="4"/><rect x="768.5" y="177.5" width="4" height="4"/><rect x="774.5" y="177.5" width="4" height="4"/><rect x="765.5" y="182.5" width="4" height="4"/><rect x="768.5" y="294.5" width="4" height="4"/><rect x="774.5" y="294.5" width="4" height="4"/><rect x="765.5" y="299.5" width="4" height="4"/><rect x="768.5" y="430.5" width="4" height="4"/><rect x="774.5" y="430.5" width="4" height="4"/><rect x="765.5" y="435.5" width="4" height="4"/><rect x="103.5" y="318.5" width="4" height="4"/><rect x="109.5" y="318.5" width="4" height="4"/><rect x="100.5" y="323.5" width="4" height="4"/><rect x="106.5" y="313.5" width="4" height="4"/><rect x="103.5" y="435.5" width="4" height="4"/><rect x="109.5" y="435.5" width="4" height="4"/><rect x="100.5" y="440.5" width="4" height="4"/><rect x="106.5" y="430.5" width="4" height="4"/><rect x="103.5" y="571.5" width="4" height="4"/><rect x="109.5" y="571.5" width="4" height="4"/><rect x="100.5" y="576.5" width="4" height="4"/><rect x="106.5" y="566.5" width="4" height="4"/><rect x="297.5" y="318.5" width="4" height="4"/><rect x="303.5" y="318.5" width="4" height="4"/><rect x="294.5" y="323.5" width="4" height="4"/><rect x="300.5" y="313.5" width="4" height="4"/><rect x="291.5" y="318.5" width="4" height="4"/><rect x="297.5" y="435.5" width="4" height="4"/><rect x="303.5" y="435.5" width="4" height="4"/><rect x="294.5" y="440.5" width="4" height="4"/><rect x="300.5" y="430.5" width="4" height="4"/><rect x="291.5" y="435.5" width="4" height="4"/><rect x="297.5" y="571.5" width="4" height="4"/><rect x="303.5" y="571.5" width="4" height="4"/><rect x="294.5" y="576.5" width="4" height="4"/><rect x="300.5" y="566.5" width="4" height="4"/><rect x="291.5" y="571.5" width="4" height="4"/><rect x="395.5" y="318.5" width="4" height="4"/><rect x="401.5" y="318.5" width="4" height="4"/><rect x="392.5" y="323.5" width="4" height="4"/><rect x="398.5" y="313.5" width="4" height="4"/><rect x="389.5" y="318.5" width="4" height="4"/><rect x="395.5" y="435.5" width="4" height="4"/><rect x="401.5" y="435.5" width="4" height="4"/><rect x="392.5" y="440.5" width="4" height="4"/><rect x="398.5" y="430.5" width="4" height="4"/><rect x="389.5" y="435.5" width="4" height="4"/><rect x="395.5" y="571.5" width="4" height="4"/><rect x="401.5" y="571.5" width="4" height="4"/><rect x="392.5" y="576.5" width="4" height="4"/><rect x="398.5" y="566.5" width="4" height="4"/><rect x="389.5" y="571.5" width="4" height="4"/><rect x="492.5" y="318.5" width="4" height="4"/><rect x="498.5" y="318.5" width="4" height="4"/><rect x="489.5" y="323.5" width="4" height="4"/><rect x="495.5" y="313.5" width="4" height="4"/><rect x="486.5" y="318.5" width="4" height="4"/><rect x="492.5" y="435.5" width="4" height="4"/><rect x="498.5" y="435.5" width="4" height="4"/><rect x="489.5" y="440.5" width="4" height="4"/><rect x="495.5" y="430.5" width="4" height="4"/><rect x="486.5" y="435.5" width="4" height="4"/><rect x="492.5" y="571.5" width="4" height="4"/><rect x="498.5" y="571.5" width="4" height="4"/><rect x="489.5" y="576.5" width="4" height="4"/><rect x="495.5" y="566.5" width="4" height="4"/><rect x="486.5" y="571.5" width="4" height="4"/><rect x="687.5" y="318.5" width="4" height="4"/><rect x="693.5" y="318.5" width="4" height="4"/><rect x="684.5" y="323.5" width="4" height="4"/><rect x="690.5" y="313.5" width="4" height="4"/><rect x="681.5" y="318.5" width="4" height="4"/><rect x="687.5" y="435.5" width="4" height="4"/><rect x="693.5" y="435.5" width="4" height="4"/><rect x="684.5" y="440.5" width="4" height="4"/><rect x="690.5" y="430.5" width="4" height="4"/><rect x="681.5" y="435.5" width="4" height="4"/><rect x="687.5" y="571.5" width="4" height="4"/><rect x="693.5" y="571.5" width="4" height="4"/><rect x="684.5" y="576.5" width="4" height="4"/><rect x="690.5" y="566.5" width="4" height="4"/><rect x="681.5" y="571.5" width="4" height="4"/><rect x="22.5" y="459.5" width="4" height="4"/><rect x="28.5" y="459.5" width="4" height="4"/><rect x="19.5" y="464.5" width="4" height="4"/><rect x="25.5" y="454.5" width="4" height="4"/><rect x="22.5" y="576.5" width="4" height="4"/><rect x="28.5" y="576.5" width="4" height="4"/><rect x="19.5" y="581.5" width="4" height="4"/><rect x="25.5" y="571.5" width="4" height="4"/><rect x="22.5" y="712.5" width="4" height="4"/><rect x="28.5" y="712.5" width="4" height="4"/><rect x="19.5" y="717.5" width="4" height="4"/><rect x="25.5" y="707.5" width="4" height="4"/><rect x="216.5" y="459.5" width="4" height="4"/><rect x="222.5" y="459.5" width="4" height="4"/><rect x="213.5" y="464.5" width="4" height="4"/><rect x="219.5" y="454.5" width="4" height="4"/><rect x="210.5" y="459.5" width="4" height="4"/><rect x="216.5" y="576.5" width="4" height="4"/><rect x="222.5" y="576.5" width="4" height="4"/><rect x="213.5" y="581.5" width="4" height="4"/><rect x="219.5" y="571.5" width="4" height="4"/><rect x="210.5" y="576.5" width="4" height="4"/><rect x="216.5" y="712.5" width="4" height="4"/><rect x="222.5" y="712.5" width="4" height="4"/><rect x="213.5" y="717.5" width="4" height="4"/><rect x="219.5" y="707.5" width="4" height="4"/><rect x="210.5" y="712.5" width="4" height="4"/><rect x="411.5" y="459.5" width="4" height="4"/><rect x="417.5" y="459.5" width="4" height="4"/><rect x="408.5" y="464.5" width="4" height="4"/><rect x="414.5" y="454.5" width="4" height="4"/><rect x="405.5" y="459.5" width="4" height="4"/><rect x="411.5" y="576.5" width="4" height="4"/><rect x="417.5" y="576.5" width="4" height="4"/><rect x="408.5" y="581.5" width="4" height="4"/><rect x="414.5" y="571.5" width="4" height="4"/><rect x="405.5" y="576.5" width="4" height="4"/><rect x="411.5" y="712.5" width="4" height="4"/><rect x="417.5" y="712.5" width="4" height="4"/><rect x="408.5" y="717.5" width="4" height="4"/><rect x="414.5" y="707.5" width="4" height="4"/><rect x="405.5" y="712.5" width="4" height="4"/><rect x="606.5" y="459.5" width="4" height="4"/><rect x="612.5" y="459.5" width="4" height="4"/><rect x="603.5" y="464.5" width="4" height="4"/><rect x="609.5" y="454.5" width="4" height="4"/><rect x="600.5" y="459.5" width="4" height="4"/><rect x="606.5" y="576.5" width="4" height="4"/><rect x="612.5" y="576.5" width="4" height="4"/><rect x="603.5" y="581.5" width="4" height="4"/><rect x="609.5" y="571.5" width="4" height="4"/><rect x="600.5" y="576.5" width="4" height="4"/><rect x="606.5" y="712.5" width="4" height="4"/><rect x="612.5" y="712.5" width="4" height="4"/><rect x="603.5" y="717.5" width="4" height="4"/><rect x="609.5" y="707.5" width="4" height="4"/><rect x="600.5" y="712.5" width="4" height="4"/><rect x="-58.5" y="599.5" width="4" height="4"/><rect x="-52.5" y="599.5" width="4" height="4"/><rect x="-61.5" y="604.5" width="4" height="4"/><rect x="-55.5" y="594.5" width="4" height="4"/><rect x="-58.5" y="716.5" width="4" height="4"/><rect x="-52.5" y="716.5" width="4" height="4"/><rect x="-61.5" y="721.5" width="4" height="4"/><rect x="-55.5" y="711.5" width="4" height="4"/><rect x="-58.5" y="852.5" width="4" height="4"/><rect x="-52.5" y="852.5" width="4" height="4"/><rect x="-61.5" y="857.5" width="4" height="4"/><rect x="-55.5" y="847.5" width="4" height="4"/><rect x="135.5" y="599.5" width="4" height="4"/><rect x="141.5" y="599.5" width="4" height="4"/><rect x="132.5" y="604.5" width="4" height="4"/><rect x="138.5" y="594.5" width="4" height="4"/><rect x="129.5" y="599.5" width="4" height="4"/><rect x="135.5" y="716.5" width="4" height="4"/><rect x="141.5" y="716.5" width="4" height="4"/><rect x="132.5" y="721.5" width="4" height="4"/><rect x="138.5" y="711.5" width="4" height="4"/><rect x="129.5" y="716.5" width="4" height="4"/><rect x="135.5" y="852.5" width="4" height="4"/><rect x="141.5" y="852.5" width="4" height="4"/><rect x="132.5" y="857.5" width="4" height="4"/><rect x="138.5" y="847.5" width="4" height="4"/><rect x="129.5" y="852.5" width="4" height="4"/><rect x="330.5" y="599.5" width="4" height="4"/><rect x="336.5" y="599.5" width="4" height="4"/><rect x="327.5" y="604.5" width="4" height="4"/><rect x="333.5" y="594.5" width="4" height="4"/><rect x="324.5" y="599.5" width="4" height="4"/><rect x="330.5" y="716.5" width="4" height="4"/><rect x="336.5" y="716.5" width="4" height="4"/><rect x="327.5" y="721.5" width="4" height="4"/><rect x="333.5" y="711.5" width="4" height="4"/><rect x="324.5" y="716.5" width="4" height="4"/><rect x="330.5" y="852.5" width="4" height="4"/><rect x="336.5" y="852.5" width="4" height="4"/><rect x="327.5" y="857.5" width="4" height="4"/><rect x="333.5" y="847.5" width="4" height="4"/><rect x="324.5" y="852.5" width="4" height="4"/><rect x="525.5" y="599.5" width="4" height="4"/><rect x="531.5" y="599.5" width="4" height="4"/><rect x="522.5" y="604.5" width="4" height="4"/><rect x="528.5" y="594.5" width="4" height="4"/><rect x="519.5" y="599.5" width="4" height="4"/><rect x="525.5" y="716.5" width="4" height="4"/><rect x="531.5" y="716.5" width="4" height="4"/><rect x="522.5" y="721.5" width="4" height="4"/><rect x="528.5" y="711.5" width="4" height="4"/><rect x="519.5" y="716.5" width="4" height="4"/><rect x="525.5" y="852.5" width="4" height="4"/><rect x="531.5" y="852.5" width="4" height="4"/><rect x="522.5" y="857.5" width="4" height="4"/><rect x="528.5" y="847.5" width="4" height="4"/><rect x="519.5" y="852.5" width="4" height="4"/><rect x="-139.5" y="740.5" width="4" height="4"/><rect x="-133.5" y="740.5" width="4" height="4"/><rect x="-142.5" y="745.5" width="4" height="4"/><rect x="-136.5" y="735.5" width="4" height="4"/><rect x="-139.5" y="857.5" width="4" height="4"/><rect x="-133.5" y="857.5" width="4" height="4"/><rect x="-142.5" y="862.5" width="4" height="4"/><rect x="-136.5" y="852.5" width="4" height="4"/><rect x="-139.5" y="993.5" width="4" height="4"/><rect x="-133.5" y="993.5" width="4" height="4"/><rect x="-142.5" y="998.5" width="4" height="4"/><rect x="-136.5" y="988.5" width="4" height="4"/><rect x="54.5" y="740.5" width="4" height="4"/><rect x="60.5" y="740.5" width="4" height="4"/><rect x="51.5" y="745.5" width="4" height="4"/><rect x="57.5" y="735.5" width="4" height="4"/><rect x="48.5" y="740.5" width="4" height="4"/><rect x="54.5" y="857.5" width="4" height="4"/><rect x="60.5" y="857.5" width="4" height="4"/><rect x="51.5" y="862.5" width="4" height="4"/><rect x="57.5" y="852.5" width="4" height="4"/><rect x="48.5" y="857.5" width="4" height="4"/><rect x="54.5" y="993.5" width="4" height="4"/><rect x="60.5" y="993.5" width="4" height="4"/><rect x="51.5" y="998.5" width="4" height="4"/><rect x="57.5" y="988.5" width="4" height="4"/><rect x="48.5" y="993.5" width="4" height="4"/><rect x="249.5" y="740.5" width="4" height="4"/><rect x="255.5" y="740.5" width="4" height="4"/><rect x="246.5" y="745.5" width="4" height="4"/><rect x="252.5" y="735.5" width="4" height="4"/><rect x="243.5" y="740.5" width="4" height="4"/><rect x="249.5" y="857.5" width="4" height="4"/><rect x="255.5" y="857.5" width="4" height="4"/><rect x="246.5" y="862.5" width="4" height="4"/><rect x="252.5" y="852.5" width="4" height="4"/><rect x="243.5" y="857.5" width="4" height="4"/><rect x="249.5" y="993.5" width="4" height="4"/><rect x="255.5" y="993.5" width="4" height="4"/><rect x="246.5" y="998.5" width="4" height="4"/><rect x="252.5" y="988.5" width="4" height="4"/><rect x="243.5" y="993.5" width="4" height="4"/><rect x="444.5" y="740.5" width="4" height="4"/><rect x="450.5" y="740.5" width="4" height="4"/><rect x="441.5" y="745.5" width="4" height="4"/><rect x="447.5" y="735.5" width="4" height="4"/><rect x="438.5" y="740.5" width="4" height="4"/><rect x="444.5" y="857.5" width="4" height="4"/><rect x="450.5" y="857.5" width="4" height="4"/><rect x="441.5" y="862.5" width="4" height="4"/><rect x="447.5" y="852.5" width="4" height="4"/><rect x="438.5" y="857.5" width="4" height="4"/><rect x="444.5" y="993.5" width="4" height="4"/><rect x="450.5" y="993.5" width="4" height="4"/><rect x="441.5" y="998.5" width="4" height="4"/><rect x="447.5" y="988.5" width="4" height="4"/><rect x="438.5" y="993.5" width="4" height="4"/><rect x="-220.5" y="880.5" width="4" height="4"/><rect x="-214.5" y="880.5" width="4" height="4"/><rect x="-223.5" y="885.5" width="4" height="4"/><rect x="-217.5" y="875.5" width="4" height="4"/><rect x="-220.5" y="997.5" width="4" height="4"/><rect x="-214.5" y="997.5" width="4" height="4"/><rect x="-223.5" y="1002.5" width="4" height="4"/><rect x="-217.5" y="992.5" width="4" height="4"/><rect x="-220.5" y="1133.5" width="4" height="4"/><rect x="-214.5" y="1133.5" width="4" height="4"/><rect x="-223.5" y="1138.5" width="4" height="4"/><rect x="-217.5" y="1128.5" width="4" height="4"/><rect x="-26.5" y="880.5" width="4" height="4"/><rect x="-20.5" y="880.5" width="4" height="4"/><rect x="-29.5" y="885.5" width="4" height="4"/><rect x="-23.5" y="875.5" width="4" height="4"/><rect x="-32.5" y="880.5" width="4" height="4"/><rect x="-26.5" y="997.5" width="4" height="4"/><rect x="-20.5" y="997.5" width="4" height="4"/><rect x="-29.5" y="1002.5" width="4" height="4"/><rect x="-23.5" y="992.5" width="4" height="4"/><rect x="-32.5" y="997.5" width="4" height="4"/><rect x="-26.5" y="1133.5" width="4" height="4"/><rect x="-20.5" y="1133.5" width="4" height="4"/><rect x="-29.5" y="1138.5" width="4" height="4"/><rect x="-23.5" y="1128.5" width="4" height="4"/><rect x="-32.5" y="1133.5" width="4" height="4"/><rect x="168.5" y="880.5" width="4" height="4"/><rect x="174.5" y="880.5" width="4" height="4"/><rect x="165.5" y="885.5" width="4" height="4"/><rect x="171.5" y="875.5" width="4" height="4"/><rect x="162.5" y="880.5" width="4" height="4"/><rect x="168.5" y="997.5" width="4" height="4"/><rect x="174.5" y="997.5" width="4" height="4"/><rect x="165.5" y="1002.5" width="4" height="4"/><rect x="171.5" y="992.5" width="4" height="4"/><rect x="162.5" y="997.5" width="4" height="4"/><rect x="168.5" y="1133.5" width="4" height="4"/><rect x="174.5" y="1133.5" width="4" height="4"/><rect x="165.5" y="1138.5" width="4" height="4"/><rect x="171.5" y="1128.5" width="4" height="4"/><rect x="162.5" y="1133.5" width="4" height="4"/><rect x="363.5" y="880.5" width="4" height="4"/><rect x="369.5" y="880.5" width="4" height="4"/><rect x="360.5" y="885.5" width="4" height="4"/><rect x="366.5" y="875.5" width="4" height="4"/><rect x="357.5" y="880.5" width="4" height="4"/><rect x="363.5" y="997.5" width="4" height="4"/><rect x="369.5" y="997.5" width="4" height="4"/><rect x="360.5" y="1002.5" width="4" height="4"/><rect x="366.5" y="992.5" width="4" height="4"/><rect x="357.5" y="997.5" width="4" height="4"/><rect x="363.5" y="1133.5" width="4" height="4"/><rect x="369.5" y="1133.5" width="4" height="4"/><rect x="360.5" y="1138.5" width="4" height="4"/><rect x="366.5" y="1128.5" width="4" height="4"/><rect x="357.5" y="1133.5" width="4" height="4"/><rect x="180.5" y="530.5" width="4" height="4"/><rect x="185.5" y="529.5" width="4" height="4"/><rect x="190.5" y="530.5" width="4" height="4"/><rect x="195.5" y="529.5" width="4" height="4"/><rect x="178.5" y="535.5" width="4" height="4"/><rect x="183.5" y="536.5" width="4" height="4"/><rect x="188.5" y="535.5" width="4" height="4"/><rect x="192.5" y="536.5" width="4" height="4"/><rect x="374.5" y="530.5" width="4" height="4"/><rect x="379.5" y="529.5" width="4" height="4"/><rect x="384.5" y="530.5" width="4" height="4"/><rect x="389.5" y="529.5" width="4" height="4"/><rect x="372.5" y="535.5" width="4" height="4"/><rect x="377.5" y="536.5" width="4" height="4"/><rect x="382.5" y="535.5" width="4" height="4"/><rect x="386.5" y="536.5" width="4" height="4"/><rect x="472.5" y="530.5" width="4" height="4"/><rect x="477.5" y="529.5" width="4" height="4"/><rect x="482.5" y="530.5" width="4" height="4"/><rect x="487.5" y="529.5" width="4" height="4"/><rect x="470.5" y="535.5" width="4" height="4"/><rect x="475.5" y="536.5" width="4" height="4"/><rect x="480.5" y="535.5" width="4" height="4"/><rect x="484.5" y="536.5" width="4" height="4"/><rect x="569.5" y="530.5" width="4" height="4"/><rect x="574.5" y="529.5" width="4" height="4"/><rect x="579.5" y="530.5" width="4" height="4"/><rect x="584.5" y="529.5" width="4" height="4"/><rect x="567.5" y="535.5" width="4" height="4"/><rect x="572.5" y="536.5" width="4" height="4"/><rect x="577.5" y="535.5" width="4" height="4"/><rect x="581.5" y="536.5" width="4" height="4"/><rect x="764.5" y="530.5" width="4" height="4"/><rect x="769.5" y="529.5" width="4" height="4"/><rect x="774.5" y="530.5" width="4" height="4"/><rect x="779.5" y="529.5" width="4" height="4"/><rect x="762.5" y="535.5" width="4" height="4"/><rect x="767.5" y="536.5" width="4" height="4"/><rect x="772.5" y="535.5" width="4" height="4"/><rect x="776.5" y="536.5" width="4" height="4"/><rect x="99.5" y="670.5" width="4" height="4"/><rect x="104.5" y="669.5" width="4" height="4"/><rect x="109.5" y="670.5" width="4" height="4"/><rect x="114.5" y="669.5" width="4" height="4"/><rect x="97.5" y="675.5" width="4" height="4"/><rect x="102.5" y="676.5" width="4" height="4"/><rect x="107.5" y="675.5" width="4" height="4"/><rect x="111.5" y="676.5" width="4" height="4"/><rect x="293.5" y="670.5" width="4" height="4"/><rect x="298.5" y="669.5" width="4" height="4"/><rect x="303.5" y="670.5" width="4" height="4"/><rect x="308.5" y="669.5" width="4" height="4"/><rect x="291.5" y="675.5" width="4" height="4"/><rect x="296.5" y="676.5" width="4" height="4"/><rect x="301.5" y="675.5" width="4" height="4"/><rect x="305.5" y="676.5" width="4" height="4"/><rect x="391.5" y="670.5" width="4" height="4"/><rect x="396.5" y="669.5" width="4" height="4"/><rect x="401.5" y="670.5" width="4" height="4"/><rect x="406.5" y="669.5" width="4" height="4"/><rect x="389.5" y="675.5" width="4" height="4"/><rect x="394.5" y="676.5" width="4" height="4"/><rect x="399.5" y="675.5" width="4" height="4"/><rect x="403.5" y="676.5" width="4" height="4"/><rect x="488.5" y="670.5" width="4" height="4"/><rect x="493.5" y="669.5" width="4" height="4"/><rect x="498.5" y="670.5" width="4" height="4"/><rect x="503.5" y="669.5" width="4" height="4"/><rect x="486.5" y="675.5" width="4" height="4"/><rect x="491.5" y="676.5" width="4" height="4"/><rect x="496.5" y="675.5" width="4" height="4"/><rect x="500.5" y="676.5" width="4" height="4"/><rect x="683.5" y="670.5" width="4" height="4"/><rect x="688.5" y="669.5" width="4" height="4"/><rect x="693.5" y="670.5" width="4" height="4"/><rect x="698.5" y="669.5" width="4" height="4"/><rect x="681.5" y="675.5" width="4" height="4"/><rect x="686.5" y="676.5" width="4" height="4"/><rect x="691.5" y="675.5" width="4" height="4"/><rect x="695.5" y="676.5" width="4" height="4"/><rect x="18.5" y="811.5" width="4" height="4"/><rect x="23.5" y="810.5" width="4" height="4"/><rect x="28.5" y="811.5" width="4" height="4"/><rect x="33.5" y="810.5" width="4" height="4"/><rect x="16.5" y="816.5" width="4" height="4"/><rect x="21.5" y="817.5" width="4" height="4"/><rect x="26.5" y="816.5" width="4" height="4"/><rect x="30.5" y="817.5" width="4" height="4"/><rect x="212.5" y="811.5" width="4" height="4"/><rect x="217.5" y="810.5" width="4" height="4"/><rect x="222.5" y="811.5" width="4" height="4"/><rect x="227.5" y="810.5" width="4" height="4"/><rect x="210.5" y="816.5" width="4" height="4"/><rect x="215.5" y="817.5" width="4" height="4"/><rect x="220.5" y="816.5" width="4" height="4"/><rect x="224.5" y="817.5" width="4" height="4"/><rect x="407.5" y="811.5" width="4" height="4"/><rect x="412.5" y="810.5" width="4" height="4"/><rect x="417.5" y="811.5" width="4" height="4"/><rect x="422.5" y="810.5" width="4" height="4"/><rect x="405.5" y="816.5" width="4" height="4"/><rect x="410.5" y="817.5" width="4" height="4"/><rect x="415.5" y="816.5" width="4" height="4"/><rect x="419.5" y="817.5" width="4" height="4"/><rect x="602.5" y="811.5" width="4" height="4"/><rect x="607.5" y="810.5" width="4" height="4"/><rect x="612.5" y="811.5" width="4" height="4"/><rect x="617.5" y="810.5" width="4" height="4"/><rect x="600.5" y="816.5" width="4" height="4"/><rect x="605.5" y="817.5" width="4" height="4"/><rect x="610.5" y="816.5" width="4" height="4"/><rect x="614.5" y="817.5" width="4" height="4"/><rect x="-62.5" y="951.5" width="4" height="4"/><rect x="-57.5" y="950.5" width="4" height="4"/><rect x="-52.5" y="951.5" width="4" height="4"/><rect x="-47.5" y="950.5" width="4" height="4"/><rect x="-64.5" y="956.5" width="4" height="4"/><rect x="-59.5" y="957.5" width="4" height="4"/><rect x="-54.5" y="956.5" width="4" height="4"/><rect x="-50.5" y="957.5" width="4" height="4"/><rect x="131.5" y="951.5" width="4" height="4"/><rect x="136.5" y="950.5" width="4" height="4"/><rect x="141.5" y="951.5" width="4" height="4"/><rect x="146.5" y="950.5" width="4" height="4"/><rect x="129.5" y="956.5" width="4" height="4"/><rect x="134.5" y="957.5" width="4" height="4"/><rect x="139.5" y="956.5" width="4" height="4"/><rect x="143.5" y="957.5" width="4" height="4"/><rect x="326.5" y="951.5" width="4" height="4"/><rect x="331.5" y="950.5" width="4" height="4"/><rect x="336.5" y="951.5" width="4" height="4"/><rect x="341.5" y="950.5" width="4" height="4"/><rect x="324.5" y="956.5" width="4" height="4"/><rect x="329.5" y="957.5" width="4" height="4"/><rect x="334.5" y="956.5" width="4" height="4"/><rect x="338.5" y="957.5" width="4" height="4"/><rect x="521.5" y="951.5" width="4" height="4"/><rect x="526.5" y="950.5" width="4" height="4"/><rect x="531.5" y="951.5" width="4" height="4"/><rect x="536.5" y="950.5" width="4" height="4"/><rect x="519.5" y="956.5" width="4" height="4"/><rect x="524.5" y="957.5" width="4" height="4"/><rect x="529.5" y="956.5" width="4" height="4"/><rect x="533.5" y="957.5" width="4" height="4"/><rect x="-143.5" y="1092.5" width="4" height="4"/><rect x="-138.5" y="1091.5" width="4" height="4"/><rect x="-133.5" y="1092.5" width="4" height="4"/><rect x="-128.5" y="1091.5" width="4" height="4"/><rect x="-145.5" y="1097.5" width="4" height="4"/><rect x="-140.5" y="1098.5" width="4" height="4"/><rect x="-135.5" y="1097.5" width="4" height="4"/><rect x="-131.5" y="1098.5" width="4" height="4"/><rect x="50.5" y="1092.5" width="4" height="4"/><rect x="55.5" y="1091.5" width="4" height="4"/><rect x="60.5" y="1092.5" width="4" height="4"/><rect x="65.5" y="1091.5" width="4" height="4"/><rect x="48.5" y="1097.5" width="4" height="4"/><rect x="53.5" y="1098.5" width="4" height="4"/><rect x="58.5" y="1097.5" width="4" height="4"/><rect x="62.5" y="1098.5" width="4" height="4"/><rect x="245.5" y="1092.5" width="4" height="4"/><rect x="250.5" y="1091.5" width="4" height="4"/><rect x="255.5" y="1092.5" width="4" height="4"/><rect x="260.5" y="1091.5" width="4" height="4"/><rect x="243.5" y="1097.5" width="4" height="4"/><rect x="248.5" y="1098.5" width="4" height="4"/><rect x="253.5" y="1097.5" width="4" height="4"/><rect x="257.5" y="1098.5" width="4" height="4"/><rect x="440.5" y="1092.5" width="4" height="4"/><rect x="445.5" y="1091.5" width="4" height="4"/><rect x="450.5" y="1092.5" width="4" height="4"/><rect x="455.5" y="1091.5" width="4" height="4"/><rect x="438.5" y="1097.5" width="4" height="4"/><rect x="443.5" y="1098.5" width="4" height="4"/><rect x="448.5" y="1097.5" width="4" height="4"/><rect x="452.5" y="1098.5" width="4" height="4"/><rect x="-224.5" y="1232.5" width="4" height="4"/><rect x="-219.5" y="1231.5" width="4" height="4"/><rect x="-214.5" y="1232.5" width="4" height="4"/><rect x="-209.5" y="1231.5" width="4" height="4"/><rect x="-226.5" y="1237.5" width="4" height="4"/><rect x="-221.5" y="1238.5" width="4" height="4"/><rect x="-216.5" y="1237.5" width="4" height="4"/><rect x="-212.5" y="1238.5" width="4" height="4"/><rect x="-30.5" y="1232.5" width="4" height="4"/><rect x="-25.5" y="1231.5" width="4" height="4"/><rect x="-20.5" y="1232.5" width="4" height="4"/><rect x="-15.5" y="1231.5" width="4" height="4"/><rect x="-32.5" y="1237.5" width="4" height="4"/><rect x="-27.5" y="1238.5" width="4" height="4"/><rect x="-22.5" y="1237.5" width="4" height="4"/><rect x="-18.5" y="1238.5" width="4" height="4"/><rect x="164.5" y="1232.5" width="4" height="4"/><rect x="169.5" y="1231.5" width="4" height="4"/><rect x="174.5" y="1232.5" width="4" height="4"/><rect x="179.5" y="1231.5" width="4" height="4"/><rect x="162.5" y="1237.5" width="4" height="4"/><rect x="167.5" y="1238.5" width="4" height="4"/><rect x="172.5" y="1237.5" width="4" height="4"/><rect x="176.5" y="1238.5" width="4" height="4"/><rect x="359.5" y="1232.5" width="4" height="4"/><rect x="364.5" y="1231.5" width="4" height="4"/><rect x="369.5" y="1232.5" width="4" height="4"/><rect x="374.5" y="1231.5" width="4" height="4"/><rect x="357.5" y="1237.5" width="4" height="4"/><rect x="362.5" y="1238.5" width="4" height="4"/><rect x="367.5" y="1237.5" width="4" height="4"/><rect x="371.5" y="1238.5" width="4" height="4"/></g></svg><div class="sb" style="left:548px;top:151px;width:18px;height:661px"></div><svg class="a" style="left:552px;top:157px" width="9" height="5"><path d="M0 5 L4.5 0 L9 5Z" fill="#404040"/></svg><svg class="a" style="left:552px;top:800px" width="9" height="5"><path d="M0 0 L4.5 5 L9 0Z" fill="#404040"/></svg><div class="thumbv" style="left:549px;top:326px;width:16px;height:200px"></div><div class="sb" style="left:13px;top:812px;width:553px;height:18px"></div><svg class="a" style="left:19px;top:817px" width="5" height="9"><path d="M5 0 L0 4.5 L5 9Z" fill="#404040"/></svg><svg class="a" style="left:537px;top:817px" width="5" height="9"><path d="M0 0 L5 4.5 L0 9Z" fill="#404040"/></svg><div class="thumbh" style="left:143px;top:813px;width:146px;height:16px"></div><div class="a" style="left:211px;top:817px;width:8px;height:8px;background:repeating-linear-gradient(90deg,#5a5a5a 0,#5a5a5a 1px,#fff 1px,#fff 2px,transparent 2px,transparent 3px)"></div><svg class="a" style="left:552px;top:816px" width="12" height="12"><rect x="9" y="1" width="2" height="2" fill="#c4c4c4"/><rect x="5" y="5" width="2" height="2" fill="#c4c4c4"/><rect x="9" y="5" width="2" height="2" fill="#c4c4c4"/><rect x="1" y="9" width="2" height="2" fill="#c4c4c4"/><rect x="5" y="9" width="2" height="2" fill="#c4c4c4"/><rect x="9" y="9" width="2" height="2" fill="#c4c4c4"/></svg><div class="a" style="left:577px;top:116px;width:573px;height:724px;background:#1e1e1e;border-radius:7px 7px 0 0"></div><div class="a" style="left:578px;top:117px;width:571px;height:722px;background:#19b8e6;border-radius:6px 6px 0 0"></div><div class="a" style="left:578px;top:117px;width:570px;height:721px;background:linear-gradient(#9db6d3 0,#b3cae2 16px,#c1d5ea 33px,#b9d0e8 100%);border-radius:6px 6px 0 0;box-shadow:inset 1px 1px 0 #dbe8f5"></div><div class="a" style="left:1148px;top:124px;width:1px;height:715px;background:#19b8e6"></div><svg class="a" style="left:587px;top:126px" width="22" height="21" viewBox="0 0 22 21"><path d="M0.5 0.5 H19.5 V12 L9 19.5 H0.5Z" fill="#fff" stroke="#000" stroke-width="1"/><path d="M0.5 0.5 V19.5" stroke="#000" stroke-width="1.6"/><path d="M0 19.6 H9 L19.5 12" stroke="#000" stroke-width="1" fill="none" stroke-dasharray="2 1"/><path d="M4 3 h11" stroke="#e8232b" stroke-width="2" stroke-dasharray="2 1"/><path d="M4 7.5 h12 M4 10.5 h12 M4 13.5 h9" stroke="#c8c8c8" stroke-width="1"/></svg><div class="t ctitle" style="left:611px;top:128px" id="rt">перехрестя-секция 3нииасс:1</div><div class="cbtn" style="left:1037px;top:127px;width:32px;height:17px"></div><div class="a" style="left:1047px;top:134px;width:11px;height:5px;background:#fff;border:1px solid #4b556b;border-radius:1px"></div><div class="cbtn" style="left:1071px;top:127px;width:33px;height:17px"></div><svg class="a" style="left:1081px;top:130px" width="13" height="11"><rect x="1" y="1" width="11" height="9" rx="1.5" fill="#fff" stroke="#4b556b"/><rect x="3.5" y="3.5" width="6" height="4" fill="#a9c2dc" stroke="#4b556b"/></svg><div class="cbtn red" style="left:1106px;top:127px;width:34px;height:17px"></div><svg class="a" style="left:1116px;top:130px" width="14" height="12" viewBox="0 0 14 12"><path d="M2 1.5 L4.6 1.5 L7 4 L9.4 1.5 L12 1.5 L8.6 5.5 L12 9.5 L9.4 9.5 L7 7 L4.6 9.5 L2 9.5 L5.4 5.5 Z" fill="#fff" stroke="#5d2a2a" stroke-width=".9"/></svg><div class="a" style="left:586px;top:149px;width:555px;height:681px;background:#000;border:1px solid;border-color:#6d6d6d #fff #fff #6d6d6d"></div><svg style="left:587px;top:150px" width="534" height="661" viewBox="587 150 534 661"><defs><clipPath id="rslab"><path d="M780.8 446.8H1130V642H667.8Z"/></clipPath><clipPath id="rslabm"><path d="M764 498H1130V642H680.7Z"/></clipPath><pattern id="dense" width="32" height="30" patternUnits="userSpaceOnUse"><path d="M0 0h1v1h-1zM1 0h1v1h-1zM2 0h1v1h-1zM3 0h1v1h-1zM4 0h1v1h-1zM5 0h1v1h-1zM6 0h1v1h-1zM7 0h1v1h-1zM8 0h1v1h-1zM9 0h1v1h-1zM10 0h1v1h-1zM11 0h1v1h-1zM12 0h1v1h-1zM13 0h1v1h-1zM14 0h1v1h-1zM15 0h1v1h-1zM16 0h1v1h-1zM18 0h1v1h-1zM19 0h1v1h-1zM21 0h1v1h-1zM22 0h1v1h-1zM23 0h1v1h-1zM24 0h1v1h-1zM25 0h1v1h-1zM26 0h1v1h-1zM27 0h1v1h-1zM28 0h1v1h-1zM29 0h1v1h-1zM30 0h1v1h-1zM31 0h1v1h-1zM0 1h1v1h-1zM1 1h1v1h-1zM2 1h1v1h-1zM3 1h1v1h-1zM4 1h1v1h-1zM5 1h1v1h-1zM6 1h1v1h-1zM7 1h1v1h-1zM8 1h1v1h-1zM9 1h1v1h-1zM10 1h1v1h-1zM11 1h1v1h-1zM12 1h1v1h-1zM13 1h1v1h-1zM14 1h1v1h-1zM15 1h1v1h-1zM16 1h1v1h-1zM17 1h1v1h-1zM19 1h1v1h-1zM20 1h1v1h-1zM21 1h1v1h-1zM22 1h1v1h-1zM23 1h1v1h-1zM24 1h1v1h-1zM25 1h1v1h-1zM26 1h1v1h-1zM27 1h1v1h-1zM28 1h1v1h-1zM29 1h1v1h-1zM30 1h1v1h-1zM31 1h1v1h-1zM0 2h1v1h-1zM1 2h1v1h-1zM4 2h1v1h-1zM6 2h1v1h-1zM8 2h1v1h-1zM11 2h1v1h-1zM12 2h1v1h-1zM14 2h1v1h-1zM15 2h1v1h-1zM16 2h1v1h-1zM17 2h1v1h-1zM18 2h1v1h-1zM20 2h1v1h-1zM21 2h1v1h-1zM22 2h1v1h-1zM24 2h1v1h-1zM25 2h1v1h-1zM30 2h1v1h-1zM31 2h1v1h-1zM0 3h1v1h-1zM3 3h1v1h-1zM4 3h1v1h-1zM5 3h1v1h-1zM6 3h1v1h-1zM7 3h1v1h-1zM8 3h1v1h-1zM9 3h1v1h-1zM10 3h1v1h-1zM11 3h1v1h-1zM12 3h1v1h-1zM16 3h1v1h-1zM19 3h1v1h-1zM24 3h1v1h-1zM25 3h1v1h-1zM26 3h1v1h-1zM28 3h1v1h-1zM29 3h1v1h-1zM30 3h1v1h-1zM31 3h1v1h-1zM0 4h1v1h-1zM1 4h1v1h-1zM2 4h1v1h-1zM3 4h1v1h-1zM4 4h1v1h-1zM5 4h1v1h-1zM6 4h1v1h-1zM8 4h1v1h-1zM9 4h1v1h-1zM10 4h1v1h-1zM11 4h1v1h-1zM12 4h1v1h-1zM13 4h1v1h-1zM16 4h1v1h-1zM17 4h1v1h-1zM18 4h1v1h-1zM19 4h1v1h-1zM20 4h1v1h-1zM21 4h1v1h-1zM23 4h1v1h-1zM24 4h1v1h-1zM27 4h1v1h-1zM29 4h1v1h-1zM2 5h1v1h-1zM3 5h1v1h-1zM4 5h1v1h-1zM8 5h1v1h-1zM9 5h1v1h-1zM16 5h1v1h-1zM18 5h1v1h-1zM19 5h1v1h-1zM20 5h1v1h-1zM21 5h1v1h-1zM22 5h1v1h-1zM25 5h1v1h-1zM29 5h1v1h-1zM30 5h1v1h-1zM31 5h1v1h-1zM0 6h1v1h-1zM1 6h1v1h-1zM5 6h1v1h-1zM8 6h1v1h-1zM13 6h1v1h-1zM14 6h1v1h-1zM16 6h1v1h-1zM19 6h1v1h-1zM20 6h1v1h-1zM23 6h1v1h-1zM24 6h1v1h-1zM25 6h1v1h-1zM28 6h1v1h-1zM0 7h1v1h-1zM2 7h1v1h-1zM3 7h1v1h-1zM8 7h1v1h-1zM11 7h1v1h-1zM12 7h1v1h-1zM13 7h1v1h-1zM14 7h1v1h-1zM16 7h1v1h-1zM17 7h1v1h-1zM18 7h1v1h-1zM20 7h1v1h-1zM21 7h1v1h-1zM24 7h1v1h-1zM29 7h1v1h-1zM30 7h1v1h-1zM31 7h1v1h-1zM0 8h1v1h-1zM2 8h1v1h-1zM3 8h1v1h-1zM6 8h1v1h-1zM8 8h1v1h-1zM10 8h1v1h-1zM12 8h1v1h-1zM13 8h1v1h-1zM16 8h1v1h-1zM19 8h1v1h-1zM24 8h1v1h-1zM26 8h1v1h-1zM31 8h1v1h-1zM0 9h1v1h-1zM3 9h1v1h-1zM4 9h1v1h-1zM5 9h1v1h-1zM6 9h1v1h-1zM7 9h1v1h-1zM8 9h1v1h-1zM12 9h1v1h-1zM15 9h1v1h-1zM18 9h1v1h-1zM20 9h1v1h-1zM21 9h1v1h-1zM24 9h1v1h-1zM25 9h1v1h-1zM27 9h1v1h-1zM28 9h1v1h-1zM29 9h1v1h-1zM31 9h1v1h-1zM0 10h1v1h-1zM1 10h1v1h-1zM2 10h1v1h-1zM3 10h1v1h-1zM6 10h1v1h-1zM10 10h1v1h-1zM11 10h1v1h-1zM12 10h1v1h-1zM14 10h1v1h-1zM15 10h1v1h-1zM16 10h1v1h-1zM19 10h1v1h-1zM20 10h1v1h-1zM24 10h1v1h-1zM25 10h1v1h-1zM27 10h1v1h-1zM28 10h1v1h-1zM0 11h1v1h-1zM2 11h1v1h-1zM4 11h1v1h-1zM5 11h1v1h-1zM8 11h1v1h-1zM9 11h1v1h-1zM11 11h1v1h-1zM12 11h1v1h-1zM13 11h1v1h-1zM14 11h1v1h-1zM15 11h1v1h-1zM16 11h1v1h-1zM17 11h1v1h-1zM19 11h1v1h-1zM21 11h1v1h-1zM22 11h1v1h-1zM23 11h1v1h-1zM24 11h1v1h-1zM25 11h1v1h-1zM28 11h1v1h-1zM29 11h1v1h-1zM31 11h1v1h-1zM1 12h1v1h-1zM2 12h1v1h-1zM4 12h1v1h-1zM8 12h1v1h-1zM12 12h1v1h-1zM13 12h1v1h-1zM14 12h1v1h-1zM15 12h1v1h-1zM16 12h1v1h-1zM18 12h1v1h-1zM19 12h1v1h-1zM20 12h1v1h-1zM24 12h1v1h-1zM25 12h1v1h-1zM26 12h1v1h-1zM27 12h1v1h-1zM28 12h1v1h-1zM29 12h1v1h-1zM30 12h1v1h-1zM2 13h1v1h-1zM4 13h1v1h-1zM5 13h1v1h-1zM6 13h1v1h-1zM7 13h1v1h-1zM8 13h1v1h-1zM10 13h1v1h-1zM12 13h1v1h-1zM13 13h1v1h-1zM14 13h1v1h-1zM15 13h1v1h-1zM16 13h1v1h-1zM17 13h1v1h-1zM18 13h1v1h-1zM19 13h1v1h-1zM24 13h1v1h-1zM26 13h1v1h-1zM27 13h1v1h-1zM29 13h1v1h-1zM0 14h1v1h-1zM6 14h1v1h-1zM8 14h1v1h-1zM16 14h1v1h-1zM17 14h1v1h-1zM18 14h1v1h-1zM19 14h1v1h-1zM20 14h1v1h-1zM24 14h1v1h-1zM26 14h1v1h-1zM27 14h1v1h-1zM0 15h1v1h-1zM1 15h1v1h-1zM2 15h1v1h-1zM3 15h1v1h-1zM4 15h1v1h-1zM5 15h1v1h-1zM6 15h1v1h-1zM7 15h1v1h-1zM8 15h1v1h-1zM10 15h1v1h-1zM11 15h1v1h-1zM12 15h1v1h-1zM13 15h1v1h-1zM14 15h1v1h-1zM15 15h1v1h-1zM16 15h1v1h-1zM17 15h1v1h-1zM18 15h1v1h-1zM19 15h1v1h-1zM20 15h1v1h-1zM21 15h1v1h-1zM22 15h1v1h-1zM23 15h1v1h-1zM24 15h1v1h-1zM25 15h1v1h-1zM26 15h1v1h-1zM27 15h1v1h-1zM28 15h1v1h-1zM29 15h1v1h-1zM30 15h1v1h-1zM31 15h1v1h-1zM0 16h1v1h-1zM1 16h1v1h-1zM2 16h1v1h-1zM3 16h1v1h-1zM6 16h1v1h-1zM7 16h1v1h-1zM10 16h1v1h-1zM11 16h1v1h-1zM12 16h1v1h-1zM14 16h1v1h-1zM15 16h1v1h-1zM16 16h1v1h-1zM17 16h1v1h-1zM19 16h1v1h-1zM20 16h1v1h-1zM21 16h1v1h-1zM22 16h1v1h-1zM23 16h1v1h-1zM24 16h1v1h-1zM25 16h1v1h-1zM26 16h1v1h-1zM27 16h1v1h-1zM28 16h1v1h-1zM29 16h1v1h-1zM30 16h1v1h-1zM31 16h1v1h-1zM0 17h1v1h-1zM1 17h1v1h-1zM2 17h1v1h-1zM4 17h1v1h-1zM7 17h1v1h-1zM11 17h1v1h-1zM12 17h1v1h-1zM13 17h1v1h-1zM16 17h1v1h-1zM17 17h1v1h-1zM18 17h1v1h-1zM19 17h1v1h-1zM20 17h1v1h-1zM22 17h1v1h-1zM24 17h1v1h-1zM25 17h1v1h-1zM27 17h1v1h-1zM28 17h1v1h-1zM0 18h1v1h-1zM5 18h1v1h-1zM7 18h1v1h-1zM10 18h1v1h-1zM11 18h1v1h-1zM13 18h1v1h-1zM14 18h1v1h-1zM15 18h1v1h-1zM16 18h1v1h-1zM19 18h1v1h-1zM21 18h1v1h-1zM23 18h1v1h-1zM24 18h1v1h-1zM25 18h1v1h-1zM26 18h1v1h-1zM28 18h1v1h-1zM29 18h1v1h-1zM0 19h1v1h-1zM1 19h1v1h-1zM2 19h1v1h-1zM3 19h1v1h-1zM4 19h1v1h-1zM5 19h1v1h-1zM6 19h1v1h-1zM7 19h1v1h-1zM8 19h1v1h-1zM11 19h1v1h-1zM12 19h1v1h-1zM14 19h1v1h-1zM15 19h1v1h-1zM16 19h1v1h-1zM17 19h1v1h-1zM19 19h1v1h-1zM23 19h1v1h-1zM24 19h1v1h-1zM25 19h1v1h-1zM26 19h1v1h-1zM27 19h1v1h-1zM31 19h1v1h-1zM0 20h1v1h-1zM3 20h1v1h-1zM5 20h1v1h-1zM6 20h1v1h-1zM11 20h1v1h-1zM12 20h1v1h-1zM13 20h1v1h-1zM20 20h1v1h-1zM22 20h1v1h-1zM24 20h1v1h-1zM27 20h1v1h-1zM28 20h1v1h-1zM29 20h1v1h-1zM0 21h1v1h-1zM1 21h1v1h-1zM4 21h1v1h-1zM5 21h1v1h-1zM7 21h1v1h-1zM8 21h1v1h-1zM9 21h1v1h-1zM13 21h1v1h-1zM14 21h1v1h-1zM15 21h1v1h-1zM18 21h1v1h-1zM19 21h1v1h-1zM20 21h1v1h-1zM22 21h1v1h-1zM23 21h1v1h-1zM24 21h1v1h-1zM26 21h1v1h-1zM27 21h1v1h-1zM28 21h1v1h-1zM29 21h1v1h-1zM31 21h1v1h-1zM3 22h1v1h-1zM5 22h1v1h-1zM7 22h1v1h-1zM8 22h1v1h-1zM10 22h1v1h-1zM12 22h1v1h-1zM13 22h1v1h-1zM14 22h1v1h-1zM15 22h1v1h-1zM16 22h1v1h-1zM18 22h1v1h-1zM19 22h1v1h-1zM20 22h1v1h-1zM22 22h1v1h-1zM23 22h1v1h-1zM24 22h1v1h-1zM25 22h1v1h-1zM31 22h1v1h-1zM0 23h1v1h-1zM3 23h1v1h-1zM5 23h1v1h-1zM6 23h1v1h-1zM7 23h1v1h-1zM8 23h1v1h-1zM9 23h1v1h-1zM10 23h1v1h-1zM11 23h1v1h-1zM13 23h1v1h-1zM15 23h1v1h-1zM16 23h1v1h-1zM19 23h1v1h-1zM20 23h1v1h-1zM21 23h1v1h-1zM22 23h1v1h-1zM24 23h1v1h-1zM25 23h1v1h-1zM27 23h1v1h-1zM28 23h1v1h-1zM31 23h1v1h-1zM0 24h1v1h-1zM1 24h1v1h-1zM3 24h1v1h-1zM6 24h1v1h-1zM7 24h1v1h-1zM10 24h1v1h-1zM12 24h1v1h-1zM13 24h1v1h-1zM14 24h1v1h-1zM19 24h1v1h-1zM20 24h1v1h-1zM21 24h1v1h-1zM24 24h1v1h-1zM25 24h1v1h-1zM26 24h1v1h-1zM27 24h1v1h-1zM29 24h1v1h-1zM3 25h1v1h-1zM4 25h1v1h-1zM5 25h1v1h-1zM7 25h1v1h-1zM8 25h1v1h-1zM10 25h1v1h-1zM11 25h1v1h-1zM12 25h1v1h-1zM14 25h1v1h-1zM18 25h1v1h-1zM19 25h1v1h-1zM20 25h1v1h-1zM21 25h1v1h-1zM23 25h1v1h-1zM24 25h1v1h-1zM25 25h1v1h-1zM31 25h1v1h-1zM1 26h1v1h-1zM3 26h1v1h-1zM5 26h1v1h-1zM6 26h1v1h-1zM7 26h1v1h-1zM8 26h1v1h-1zM11 26h1v1h-1zM12 26h1v1h-1zM15 26h1v1h-1zM19 26h1v1h-1zM20 26h1v1h-1zM24 26h1v1h-1zM25 26h1v1h-1zM26 26h1v1h-1zM27 26h1v1h-1zM31 26h1v1h-1zM1 27h1v1h-1zM2 27h1v1h-1zM5 27h1v1h-1zM8 27h1v1h-1zM9 27h1v1h-1zM10 27h1v1h-1zM11 27h1v1h-1zM12 27h1v1h-1zM15 27h1v1h-1zM16 27h1v1h-1zM17 27h1v1h-1zM19 27h1v1h-1zM20 27h1v1h-1zM21 27h1v1h-1zM24 27h1v1h-1zM25 27h1v1h-1zM26 27h1v1h-1zM29 27h1v1h-1zM30 27h1v1h-1zM0 28h1v1h-1zM1 28h1v1h-1zM2 28h1v1h-1zM4 28h1v1h-1zM6 28h1v1h-1zM7 28h1v1h-1zM10 28h1v1h-1zM11 28h1v1h-1zM13 28h1v1h-1zM14 28h1v1h-1zM16 28h1v1h-1zM18 28h1v1h-1zM20 28h1v1h-1zM21 28h1v1h-1zM22 28h1v1h-1zM24 28h1v1h-1zM26 28h1v1h-1zM28 28h1v1h-1zM30 28h1v1h-1zM31 28h1v1h-1zM0 29h1v1h-1zM2 29h1v1h-1zM3 29h1v1h-1zM6 29h1v1h-1zM7 29h1v1h-1zM10 29h1v1h-1zM11 29h1v1h-1zM13 29h1v1h-1zM17 29h1v1h-1zM19 29h1v1h-1zM20 29h1v1h-1zM23 29h1v1h-1zM24 29h1v1h-1zM25 29h1v1h-1zM27 29h1v1h-1zM28 29h1v1h-1zM29 29h1v1h-1z" fill="#cc00cc"/></pattern></defs><path d="M587 584L705 584M587 591.5L705 591.5M587 599L705 599M587 606.5L705 606.5M587 614L705 614M587 621.5L705 621.5M587 629L705 629M587 636.5L705 636.5M590 584L590 642M595.4 584L595.4 642M600.8 584L600.8 642M606.2 584L606.2 642M611.6 584L611.6 642M617 584L617 642M622.4 584L622.4 642M627.8 584L627.8 642M633.2 584L633.2 642M638.6 584L638.6 642M644 584L644 642M649.4 584L649.4 642M654.8 584L654.8 642M660.2 584L660.2 642M665.6 584L665.6 642M671 584L671 642M676.4 584L676.4 642M681.8 584L681.8 642M687.2 584L687.2 642M692.6 584L692.6 642M698 584L698 642M703.4 584L703.4 642" stroke="#7a00ff" stroke-width="1" fill="none" shape-rendering="crispEdges"/><g clip-path="url(#rslab)" shape-rendering="crispEdges"><path d="M780.8 446.8L1130 446.8M778.9 450L1130 450M777.1 453.2L1130 453.2M775.2 456.4L1130 456.4M773.4 459.6L1130 459.6M771.5 462.8L1130 462.8M769.7 466L1130 466M767.8 469.2L1130 469.2M766 472.4L1130 472.4M764.1 475.6L1130 475.6M762.3 478.8L1130 478.8M760.4 482L1130 482M758.6 485.2L1130 485.2M756.7 488.4L1130 488.4M754.9 491.6L1130 491.6M753 494.8L1130 494.8M751.2 498L1130 498M749.3 501.2L1130 501.2M747.5 504.4L1130 504.4M745.6 507.6L1130 507.6M743.8 510.8L1130 510.8M741.9 514L1130 514M740.1 517.2L1130 517.2M738.2 520.4L1130 520.4M736.4 523.6L1130 523.6M734.5 526.8L1130 526.8M732.6 530L1130 530M730.8 533.2L1130 533.2M728.9 536.4L1130 536.4M727.1 539.6L1130 539.6M725.2 542.8L1130 542.8M723.4 546L1130 546M721.5 549.2L1130 549.2M719.7 552.4L1130 552.4M717.8 555.6L1130 555.6M716 558.8L1130 558.8M714.1 562L1130 562M712.3 565.2L1130 565.2M710.4 568.4L1130 568.4M708.6 571.6L1130 571.6M706.7 574.8L1130 574.8M704.9 578L1130 578M703 581.2L1130 581.2M701.2 584.4L1130 584.4M699.3 587.6L1130 587.6M697.5 590.8L1130 590.8M695.6 594L1130 594M693.8 597.2L1130 597.2M691.9 600.4L1130 600.4M690 603.6L1130 603.6M688.2 606.8L1130 606.8M686.3 610L1130 610M684.5 613.2L1130 613.2M682.6 616.4L1130 616.4M680.8 619.6L1130 619.6M678.9 622.8L1130 622.8M677.1 626L1130 626M675.2 629.2L1130 629.2M673.4 632.4L1130 632.4M671.5 635.6L1130 635.6M669.7 638.8L1130 638.8M780.8 446.8L667.8 642M786.2 446.8L673.2 642M791.6 446.8L678.6 642M797 446.8L684 642M802.4 446.8L689.4 642M807.8 446.8L694.8 642M813.2 446.8L700.2 642M818.6 446.8L705.6 642M824 446.8L711 642M829.4 446.8L716.4 642M834.8 446.8L721.8 642M840.2 446.8L727.2 642M845.6 446.8L732.6 642M851 446.8L738 642M856.4 446.8L743.4 642M861.8 446.8L748.8 642M867.2 446.8L754.2 642M872.6 446.8L759.6 642M878 446.8L765 642M883.4 446.8L770.4 642M888.8 446.8L775.8 642M894.2 446.8L781.2 642M899.6 446.8L786.6 642M905 446.8L792 642M910.4 446.8L797.4 642M915.8 446.8L802.8 642M921.2 446.8L808.2 642M926.6 446.8L813.6 642M932 446.8L819 642M937.4 446.8L824.4 642M942.8 446.8L829.8 642M948.2 446.8L835.2 642M953.6 446.8L840.6 642M959 446.8L846 642M964.4 446.8L851.4 642M969.8 446.8L856.8 642M975.2 446.8L862.2 642M980.6 446.8L867.6 642M986 446.8L873 642M991.4 446.8L878.4 642M996.8 446.8L883.8 642M1002.2 446.8L889.2 642M1007.6 446.8L894.6 642M1013 446.8L900 642M1018.4 446.8L905.4 642M1023.8 446.8L910.8 642M1029.2 446.8L916.2 642M1034.6 446.8L921.6 642M1040 446.8L927 642M1045.4 446.8L932.4 642M1050.8 446.8L937.8 642M1056.2 446.8L943.2 642M1061.6 446.8L948.6 642M1067 446.8L954 642M1072.4 446.8L959.4 642M1077.8 446.8L964.8 642M1083.2 446.8L970.2 642M1088.6 446.8L975.6 642M1094 446.8L981 642M1099.4 446.8L986.4 642M1104.8 446.8L991.8 642M1110.2 446.8L997.2 642M1115.6 446.8L1002.6 642M1121 446.8L1008 642M1126.4 446.8L1013.4 642M1131.8 446.8L1018.8 642M1137.2 446.8L1024.2 642M1142.6 446.8L1029.6 642M1148 446.8L1035 642M1153.4 446.8L1040.4 642M1158.8 446.8L1045.8 642M1164.2 446.8L1051.2 642M1169.6 446.8L1056.6 642M1175 446.8L1062 642M1180.4 446.8L1067.4 642M1185.8 446.8L1072.8 642M1191.2 446.8L1078.2 642M1196.6 446.8L1083.6 642M1202 446.8L1089 642M1207.4 446.8L1094.4 642M1212.8 446.8L1099.8 642M1218.2 446.8L1105.2 642M1223.6 446.8L1110.6 642M1229 446.8L1116 642M1234.4 446.8L1121.4 642M1239.8 446.8L1126.8 642M1245.2 446.8L1132.2 642" stroke="#7a00ff" stroke-width="1" fill="none"/><path d="M780.8 446.8L1125 446.8M777.1 453.2L1125 453.2M773.4 459.6L1125 459.6M769.7 466L1125 466M766 472.4L1125 472.4M762.3 478.8L1125 478.8M758.6 485.2L1125 485.2M754.9 491.6L1125 491.6M751.2 498L1125 498M747.5 504.4L1125 504.4M743.8 510.8L1125 510.8M740.1 517.2L1125 517.2M736.4 523.6L1125 523.6M732.6 530L1125 530M728.9 536.4L1125 536.4M725.2 542.8L1125 542.8M721.5 549.2L1125 549.2M717.8 555.6L1125 555.6M714.1 562L1125 562M710.4 568.4L1125 568.4M706.7 574.8L1125 574.8M703 581.2L1125 581.2M699.3 587.6L1125 587.6M695.6 594L1125 594M691.9 600.4L1125 600.4M688.2 606.8L1125 606.8M684.5 613.2L1125 613.2M680.8 619.6L1125 619.6M677.1 626L1125 626M673.4 632.4L1125 632.4M669.7 638.8L1125 638.8" stroke="#00f000" stroke-width="2" fill="none" stroke-dasharray="2 7.6"/></g><g shape-rendering="crispEdges"><path d="M587 642L1122 642M587 645L1122 645M587 648L1122 648M587 651L1122 651M587 654L1122 654M587 657L1122 657M587 660L1122 660M587 663L1122 663M587 666L1122 666M587 669L1122 669M587 672L1122 672M587 675L1122 675M587 678L1122 678M587 681L1122 681M587 684L1122 684M587 687L1122 687M587 690L1122 690M587 693L1122 693M587 696L1122 696M587 699L1122 699M587 702L1122 702M587 705L1122 705M587 708L1122 708M587 711L1122 711M587 714L1122 714M587 717L1122 717M587 720L1122 720M587 723L1122 723M587 726L1122 726M587 729L1122 729M587 732L1122 732M587 735L1122 735M587 738L1122 738M587 741L1122 741M587 744L1122 744M587 747L1122 747M587 750L1122 750M587 753L1122 753M587 756L1122 756M587 759L1122 759M587 762L1122 762M587 765L1122 765M587 768L1122 768M587 771L1122 771M587 774L1122 774M587 777L1122 777M587 780L1122 780M587 783L1122 783M587 786L1122 786M587 789L1122 789M587 792L1122 792M587 795L1122 795M587 798L1122 798M587 801L1122 801M587 804L1122 804M587 807L1122 807M587 810L1122 810M587 642L587 812M591 642L591 812M595 642L595 812M599 642L599 812M603 642L603 812M607 642L607 812M611 642L611 812M615 642L615 812M619 642L619 812M623 642L623 812M627 642L627 812M631 642L631 812M635 642L635 812M639 642L639 812M643 642L643 812M647 642L647 812M651 642L651 812M655 642L655 812M659 642L659 812M663 642L663 812M667 642L667 812M671 642L671 812M675 642L675 812M679 642L679 812M683 642L683 812M687 642L687 812M691 642L691 812M695 642L695 812M699 642L699 812M703 642L703 812M707 642L707 812M711 642L711 812M715 642L715 812M719 642L719 812M723 642L723 812M727 642L727 812M731 642L731 812M735 642L735 812M739 642L739 812M743 642L743 812M747 642L747 812M751 642L751 812M755 642L755 812M759 642L759 812M763 642L763 812M767 642L767 812M771 642L771 812M775 642L775 812M779 642L779 812M783 642L783 812M787 642L787 812M791 642L791 812M795 642L795 812M799 642L799 812M803 642L803 812M807 642L807 812M811 642L811 812M815 642L815 812M819 642L819 812M823 642L823 812M827 642L827 812M831 642L831 812M835 642L835 812M839 642L839 812M843 642L843 812M847 642L847 812M851 642L851 812M855 642L855 812M859 642L859 812M863 642L863 812M867 642L867 812M871 642L871 812M875 642L875 812M879 642L879 812M883 642L883 812M887 642L887 812M891 642L891 812M895 642L895 812M899 642L899 812M903 642L903 812M907 642L907 812M911 642L911 812M915 642L915 812M919 642L919 812M923 642L923 812M927 642L927 812M931 642L931 812M935 642L935 812M939 642L939 812M943 642L943 812M947 642L947 812M951 642L951 812M955 642L955 812M959 642L959 812M963 642L963 812M967 642L967 812M971 642L971 812M975 642L975 812M979 642L979 812M983 642L983 812M987 642L987 812M991 642L991 812M995 642L995 812M999 642L999 812M1003 642L1003 812M1007 642L1007 812M1011 642L1011 812M1015 642L1015 812M1019 642L1019 812M1023 642L1023 812M1027 642L1027 812M1031 642L1031 812M1035 642L1035 812M1039 642L1039 812M1043 642L1043 812M1047 642L1047 812M1051 642L1051 812M1055 642L1055 812M1059 642L1059 812M1063 642L1063 812M1067 642L1067 812M1071 642L1071 812M1075 642L1075 812M1079 642L1079 812M1083 642L1083 812M1087 642L1087 812M1091 642L1091 812M1095 642L1095 812M1099 642L1099 812M1103 642L1103 812M1107 642L1107 812M1111 642L1111 812M1115 642L1115 812M1119 642L1119 812" stroke="#7a00ff" stroke-width="1" fill="none"/><path d="M588 644h2M596 644h2M604 644h2M612 644h2M620 644h2M628 644h2M636 644h2M644 644h2M652 644h2M660 644h2M668 644h2M676 644h2M684 644h2M692 644h2M700 644h2M708 644h2M716 644h2M724 644h2M732 644h2M740 644h2M748 644h2M756 644h2M764 644h2M772 644h2M780 644h2M788 644h2M796 644h2M804 644h2M812 644h2M820 644h2M828 644h2M836 644h2M844 644h2M852 644h2M860 644h2M868 644h2M876 644h2M884 644h2M892 644h2M900 644h2M908 644h2M916 644h2M924 644h2M932 644h2M940 644h2M948 644h2M956 644h2M964 644h2M972 644h2M980 644h2M988 644h2M996 644h2M1004 644h2M1012 644h2M1020 644h2M1028 644h2M1036 644h2M1044 644h2M1052 644h2M1060 644h2M1068 644h2M1076 644h2M1084 644h2M1092 644h2M1100 644h2M1108 644h2M1116 644h2M592 651.5h2M600 651.5h2M608 651.5h2M616 651.5h2M624 651.5h2M632 651.5h2M640 651.5h2M648 651.5h2M656 651.5h2M664 651.5h2M672 651.5h2M680 651.5h2M688 651.5h2M696 651.5h2M704 651.5h2M712 651.5h2M720 651.5h2M728 651.5h2M736 651.5h2M744 651.5h2M752 651.5h2M760 651.5h2M768 651.5h2M776 651.5h2M784 651.5h2M792 651.5h2M800 651.5h2M808 651.5h2M816 651.5h2M824 651.5h2M832 651.5h2M840 651.5h2M848 651.5h2M856 651.5h2M864 651.5h2M872 651.5h2M880 651.5h2M888 651.5h2M896 651.5h2M904 651.5h2M912 651.5h2M920 651.5h2M928 651.5h2M936 651.5h2M944 651.5h2M952 651.5h2M960 651.5h2M968 651.5h2M976 651.5h2M984 651.5h2M992 651.5h2M1000 651.5h2M1008 651.5h2M1016 651.5h2M1024 651.5h2M1032 651.5h2M1040 651.5h2M1048 651.5h2M1056 651.5h2M1064 651.5h2M1072 651.5h2M1080 651.5h2M1088 651.5h2M1096 651.5h2M1104 651.5h2M1112 651.5h2M1120 651.5h2M588 659h2M596 659h2M604 659h2M612 659h2M620 659h2M628 659h2M636 659h2M644 659h2M652 659h2M660 659h2M668 659h2M676 659h2M684 659h2M692 659h2M700 659h2M708 659h2M716 659h2M724 659h2M732 659h2M740 659h2M748 659h2M756 659h2M764 659h2M772 659h2M780 659h2M788 659h2M796 659h2M804 659h2M812 659h2M820 659h2M828 659h2M836 659h2M844 659h2M852 659h2M860 659h2M868 659h2M876 659h2M884 659h2M892 659h2M900 659h2M908 659h2M916 659h2M924 659h2M932 659h2M940 659h2M948 659h2M956 659h2M964 659h2M972 659h2M980 659h2M988 659h2M996 659h2M1004 659h2M1012 659h2M1020 659h2M1028 659h2M1036 659h2M1044 659h2M1052 659h2M1060 659h2M1068 659h2M1076 659h2M1084 659h2M1092 659h2M1100 659h2M1108 659h2M1116 659h2M592 666.5h2M600 666.5h2M608 666.5h2M616 666.5h2M624 666.5h2M632 666.5h2M640 666.5h2M648 666.5h2M656 666.5h2M664 666.5h2M672 666.5h2M680 666.5h2M688 666.5h2M696 666.5h2M704 666.5h2M712 666.5h2M720 666.5h2M728 666.5h2M736 666.5h2M744 666.5h2M752 666.5h2M760 666.5h2M768 666.5h2M776 666.5h2M784 666.5h2M792 666.5h2M800 666.5h2M808 666.5h2M816 666.5h2M824 666.5h2M832 666.5h2M840 666.5h2M848 666.5h2M856 666.5h2M864 666.5h2M872 666.5h2M880 666.5h2M888 666.5h2M896 666.5h2M904 666.5h2M912 666.5h2M920 666.5h2M928 666.5h2M936 666.5h2M944 666.5h2M952 666.5h2M960 666.5h2M968 666.5h2M976 666.5h2M984 666.5h2M992 666.5h2M1000 666.5h2M1008 666.5h2M1016 666.5h2M1024 666.5h2M1032 666.5h2M1040 666.5h2M1048 666.5h2M1056 666.5h2M1064 666.5h2M1072 666.5h2M1080 666.5h2M1088 666.5h2M1096 666.5h2M1104 666.5h2M1112 666.5h2M1120 666.5h2M588 674h2M596 674h2M604 674h2M612 674h2M620 674h2M628 674h2M636 674h2M644 674h2M652 674h2M660 674h2M668 674h2M676 674h2M684 674h2M692 674h2M700 674h2M708 674h2M716 674h2M724 674h2M732 674h2M740 674h2M748 674h2M756 674h2M764 674h2M772 674h2M780 674h2M788 674h2M796 674h2M804 674h2M812 674h2M820 674h2M828 674h2M836 674h2M844 674h2M852 674h2M860 674h2M868 674h2M876 674h2M884 674h2M892 674h2M900 674h2M908 674h2M916 674h2M924 674h2M932 674h2M940 674h2M948 674h2M956 674h2M964 674h2M972 674h2M980 674h2M988 674h2M996 674h2M1004 674h2M1012 674h2M1020 674h2M1028 674h2M1036 674h2M1044 674h2M1052 674h2M1060 674h2M1068 674h2M1076 674h2M1084 674h2M1092 674h2M1100 674h2M1108 674h2M1116 674h2M592 681.5h2M600 681.5h2M608 681.5h2M616 681.5h2M624 681.5h2M632 681.5h2M640 681.5h2M648 681.5h2M656 681.5h2M664 681.5h2M672 681.5h2M680 681.5h2M688 681.5h2M696 681.5h2M704 681.5h2M712 681.5h2M720 681.5h2M728 681.5h2M736 681.5h2M744 681.5h2M752 681.5h2M760 681.5h2M768 681.5h2M776 681.5h2M784 681.5h2M792 681.5h2M800 681.5h2M808 681.5h2M816 681.5h2M824 681.5h2M832 681.5h2M840 681.5h2M848 681.5h2M856 681.5h2M864 681.5h2M872 681.5h2M880 681.5h2M888 681.5h2M896 681.5h2M904 681.5h2M912 681.5h2M920 681.5h2M928 681.5h2M936 681.5h2M944 681.5h2M952 681.5h2M960 681.5h2M968 681.5h2M976 681.5h2M984 681.5h2M992 681.5h2M1000 681.5h2M1008 681.5h2M1016 681.5h2M1024 681.5h2M1032 681.5h2M1040 681.5h2M1048 681.5h2M1056 681.5h2M1064 681.5h2M1072 681.5h2M1080 681.5h2M1088 681.5h2M1096 681.5h2M1104 681.5h2M1112 681.5h2M1120 681.5h2M588 689h2M596 689h2M604 689h2M612 689h2M620 689h2M628 689h2M636 689h2M644 689h2M652 689h2M660 689h2M668 689h2M676 689h2M684 689h2M692 689h2M700 689h2M708 689h2M716 689h2M724 689h2M732 689h2M740 689h2M748 689h2M756 689h2M764 689h2M772 689h2M780 689h2M788 689h2M796 689h2M804 689h2M812 689h2M820 689h2M828 689h2M836 689h2M844 689h2M852 689h2M860 689h2M868 689h2M876 689h2M884 689h2M892 689h2M900 689h2M908 689h2M916 689h2M924 689h2M932 689h2M940 689h2M948 689h2M956 689h2M964 689h2M972 689h2M980 689h2M988 689h2M996 689h2M1004 689h2M1012 689h2M1020 689h2M1028 689h2M1036 689h2M1044 689h2M1052 689h2M1060 689h2M1068 689h2M1076 689h2M1084 689h2M1092 689h2M1100 689h2M1108 689h2M1116 689h2M592 696.5h2M600 696.5h2M608 696.5h2M616 696.5h2M624 696.5h2M632 696.5h2M640 696.5h2M648 696.5h2M656 696.5h2M664 696.5h2M672 696.5h2M680 696.5h2M688 696.5h2M696 696.5h2M704 696.5h2M712 696.5h2M720 696.5h2M728 696.5h2M736 696.5h2M744 696.5h2M752 696.5h2M760 696.5h2M768 696.5h2M776 696.5h2M784 696.5h2M792 696.5h2M800 696.5h2M808 696.5h2M816 696.5h2M824 696.5h2M832 696.5h2M840 696.5h2M848 696.5h2M856 696.5h2M864 696.5h2M872 696.5h2M880 696.5h2M888 696.5h2M896 696.5h2M904 696.5h2M912 696.5h2M920 696.5h2M928 696.5h2M936 696.5h2M944 696.5h2M952 696.5h2M960 696.5h2M968 696.5h2M976 696.5h2M984 696.5h2M992 696.5h2M1000 696.5h2M1008 696.5h2M1016 696.5h2M1024 696.5h2M1032 696.5h2M1040 696.5h2M1048 696.5h2M1056 696.5h2M1064 696.5h2M1072 696.5h2M1080 696.5h2M1088 696.5h2M1096 696.5h2M1104 696.5h2M1112 696.5h2M1120 696.5h2M588 704h2M596 704h2M604 704h2M612 704h2M620 704h2M628 704h2M636 704h2M644 704h2M652 704h2M660 704h2M668 704h2M676 704h2M684 704h2M692 704h2M700 704h2M708 704h2M716 704h2M724 704h2M732 704h2M740 704h2M748 704h2M756 704h2M764 704h2M772 704h2M780 704h2M788 704h2M796 704h2M804 704h2M812 704h2M820 704h2M828 704h2M836 704h2M844 704h2M852 704h2M860 704h2M868 704h2M876 704h2M884 704h2M892 704h2M900 704h2M908 704h2M916 704h2M924 704h2M932 704h2M940 704h2M948 704h2M956 704h2M964 704h2M972 704h2M980 704h2M988 704h2M996 704h2M1004 704h2M1012 704h2M1020 704h2M1028 704h2M1036 704h2M1044 704h2M1052 704h2M1060 704h2M1068 704h2M1076 704h2M1084 704h2M1092 704h2M1100 704h2M1108 704h2M1116 704h2M592 711.5h2M600 711.5h2M608 711.5h2M616 711.5h2M624 711.5h2M632 711.5h2M640 711.5h2M648 711.5h2M656 711.5h2M664 711.5h2M672 711.5h2M680 711.5h2M688 711.5h2M696 711.5h2M704 711.5h2M712 711.5h2M720 711.5h2M728 711.5h2M736 711.5h2M744 711.5h2M752 711.5h2M760 711.5h2M768 711.5h2M776 711.5h2M784 711.5h2M792 711.5h2M800 711.5h2M808 711.5h2M816 711.5h2M824 711.5h2M832 711.5h2M840 711.5h2M848 711.5h2M856 711.5h2M864 711.5h2M872 711.5h2M880 711.5h2M888 711.5h2M896 711.5h2M904 711.5h2M912 711.5h2M920 711.5h2M928 711.5h2M936 711.5h2M944 711.5h2M952 711.5h2M960 711.5h2M968 711.5h2M976 711.5h2M984 711.5h2M992 711.5h2M1000 711.5h2M1008 711.5h2M1016 711.5h2M1024 711.5h2M1032 711.5h2M1040 711.5h2M1048 711.5h2M1056 711.5h2M1064 711.5h2M1072 711.5h2M1080 711.5h2M1088 711.5h2M1096 711.5h2M1104 711.5h2M1112 711.5h2M1120 711.5h2M588 719h2M596 719h2M604 719h2M612 719h2M620 719h2M628 719h2M636 719h2M644 719h2M652 719h2M660 719h2M668 719h2M676 719h2M684 719h2M692 719h2M700 719h2M708 719h2M716 719h2M724 719h2M732 719h2M740 719h2M748 719h2M756 719h2M764 719h2M772 719h2M780 719h2M788 719h2M796 719h2M804 719h2M812 719h2M820 719h2M828 719h2M836 719h2M844 719h2M852 719h2M860 719h2M868 719h2M876 719h2M884 719h2M892 719h2M900 719h2M908 719h2M916 719h2M924 719h2M932 719h2M940 719h2M948 719h2M956 719h2M964 719h2M972 719h2M980 719h2M988 719h2M996 719h2M1004 719h2M1012 719h2M1020 719h2M1028 719h2M1036 719h2M1044 719h2M1052 719h2M1060 719h2M1068 719h2M1076 719h2M1084 719h2M1092 719h2M1100 719h2M1108 719h2M1116 719h2M592 726.5h2M600 726.5h2M608 726.5h2M616 726.5h2M624 726.5h2M632 726.5h2M640 726.5h2M648 726.5h2M656 726.5h2M664 726.5h2M672 726.5h2M680 726.5h2M688 726.5h2M696 726.5h2M704 726.5h2M712 726.5h2M720 726.5h2M728 726.5h2M736 726.5h2M744 726.5h2M752 726.5h2M760 726.5h2M768 726.5h2M776 726.5h2M784 726.5h2M792 726.5h2M800 726.5h2M808 726.5h2M816 726.5h2M824 726.5h2M832 726.5h2M840 726.5h2M848 726.5h2M856 726.5h2M864 726.5h2M872 726.5h2M880 726.5h2M888 726.5h2M896 726.5h2M904 726.5h2M912 726.5h2M920 726.5h2M928 726.5h2M936 726.5h2M944 726.5h2M952 726.5h2M960 726.5h2M968 726.5h2M976 726.5h2M984 726.5h2M992 726.5h2M1000 726.5h2M1008 726.5h2M1016 726.5h2M1024 726.5h2M1032 726.5h2M1040 726.5h2M1048 726.5h2M1056 726.5h2M1064 726.5h2M1072 726.5h2M1080 726.5h2M1088 726.5h2M1096 726.5h2M1104 726.5h2M1112 726.5h2M1120 726.5h2M588 734h2M596 734h2M604 734h2M612 734h2M620 734h2M628 734h2M636 734h2M644 734h2M652 734h2M660 734h2M668 734h2M676 734h2M684 734h2M692 734h2M700 734h2M708 734h2M716 734h2M724 734h2M732 734h2M740 734h2M748 734h2M756 734h2M764 734h2M772 734h2M780 734h2M788 734h2M796 734h2M804 734h2M812 734h2M820 734h2M828 734h2M836 734h2M844 734h2M852 734h2M860 734h2M868 734h2M876 734h2M884 734h2M892 734h2M900 734h2M908 734h2M916 734h2M924 734h2M932 734h2M940 734h2M948 734h2M956 734h2M964 734h2M972 734h2M980 734h2M988 734h2M996 734h2M1004 734h2M1012 734h2M1020 734h2M1028 734h2M1036 734h2M1044 734h2M1052 734h2M1060 734h2M1068 734h2M1076 734h2M1084 734h2M1092 734h2M1100 734h2M1108 734h2M1116 734h2M592 741.5h2M600 741.5h2M608 741.5h2M616 741.5h2M624 741.5h2M632 741.5h2M640 741.5h2M648 741.5h2M656 741.5h2M664 741.5h2M672 741.5h2M680 741.5h2M688 741.5h2M696 741.5h2M704 741.5h2M712 741.5h2M720 741.5h2M728 741.5h2M736 741.5h2M744 741.5h2M752 741.5h2M760 741.5h2M768 741.5h2M776 741.5h2M784 741.5h2M792 741.5h2M800 741.5h2M808 741.5h2M816 741.5h2M824 741.5h2M832 741.5h2M840 741.5h2M848 741.5h2M856 741.5h2M864 741.5h2M872 741.5h2M880 741.5h2M888 741.5h2M896 741.5h2M904 741.5h2M912 741.5h2M920 741.5h2M928 741.5h2M936 741.5h2M944 741.5h2M952 741.5h2M960 741.5h2M968 741.5h2M976 741.5h2M984 741.5h2M992 741.5h2M1000 741.5h2M1008 741.5h2M1016 741.5h2M1024 741.5h2M1032 741.5h2M1040 741.5h2M1048 741.5h2M1056 741.5h2M1064 741.5h2M1072 741.5h2M1080 741.5h2M1088 741.5h2M1096 741.5h2M1104 741.5h2M1112 741.5h2M1120 741.5h2M592 749h2M600 749h2M608 749h2M616 749h2M624 749h2M632 749h2M640 749h2M648 749h2M656 749h2M664 749h2M672 749h2M680 749h2M688 749h2M696 749h2M704 749h2M712 749h2M720 749h2M728 749h2M736 749h2M744 749h2M752 749h2M760 749h2M768 749h2M776 749h2M784 749h2M792 749h2M800 749h2M808 749h2M816 749h2M824 749h2M832 749h2M840 749h2M848 749h2M856 749h2M864 749h2M872 749h2M880 749h2M888 749h2M896 749h2M904 749h2M912 749h2M920 749h2M928 749h2M936 749h2M944 749h2M952 749h2M960 749h2M968 749h2M976 749h2M984 749h2M992 749h2M1000 749h2M1008 749h2M1016 749h2M1024 749h2M1032 749h2M1040 749h2M1048 749h2M1056 749h2M1064 749h2M1072 749h2M1080 749h2M1088 749h2M1096 749h2M1104 749h2M1112 749h2M1120 749h2M588 756.5h2M596 756.5h2M604 756.5h2M612 756.5h2M620 756.5h2M628 756.5h2M636 756.5h2M644 756.5h2M652 756.5h2M660 756.5h2M668 756.5h2M676 756.5h2M684 756.5h2M692 756.5h2M700 756.5h2M708 756.5h2M716 756.5h2M724 756.5h2M732 756.5h2M740 756.5h2M748 756.5h2M756 756.5h2M764 756.5h2M772 756.5h2M780 756.5h2M788 756.5h2M796 756.5h2M804 756.5h2M812 756.5h2M820 756.5h2M828 756.5h2M836 756.5h2M844 756.5h2M852 756.5h2M860 756.5h2M868 756.5h2M876 756.5h2M884 756.5h2M892 756.5h2M900 756.5h2M908 756.5h2M916 756.5h2M924 756.5h2M932 756.5h2M940 756.5h2M948 756.5h2M956 756.5h2M964 756.5h2M972 756.5h2M980 756.5h2M988 756.5h2M996 756.5h2M1004 756.5h2M1012 756.5h2M1020 756.5h2M1028 756.5h2M1036 756.5h2M1044 756.5h2M1052 756.5h2M1060 756.5h2M1068 756.5h2M1076 756.5h2M1084 756.5h2M1092 756.5h2M1100 756.5h2M1108 756.5h2M1116 756.5h2M592 764h2M600 764h2M608 764h2M616 764h2M624 764h2M632 764h2M640 764h2M648 764h2M656 764h2M664 764h2M672 764h2M680 764h2M688 764h2M696 764h2M704 764h2M712 764h2M720 764h2M728 764h2M736 764h2M744 764h2M752 764h2M760 764h2M768 764h2M776 764h2M784 764h2M792 764h2M800 764h2M808 764h2M816 764h2M824 764h2M832 764h2M840 764h2M848 764h2M856 764h2M864 764h2M872 764h2M880 764h2M888 764h2M896 764h2M904 764h2M912 764h2M920 764h2M928 764h2M936 764h2M944 764h2M952 764h2M960 764h2M968 764h2M976 764h2M984 764h2M992 764h2M1000 764h2M1008 764h2M1016 764h2M1024 764h2M1032 764h2M1040 764h2M1048 764h2M1056 764h2M1064 764h2M1072 764h2M1080 764h2M1088 764h2M1096 764h2M1104 764h2M1112 764h2M1120 764h2M588 771.5h2M596 771.5h2M604 771.5h2M612 771.5h2M620 771.5h2M628 771.5h2M636 771.5h2M644 771.5h2M652 771.5h2M660 771.5h2M668 771.5h2M676 771.5h2M684 771.5h2M692 771.5h2M700 771.5h2M708 771.5h2M716 771.5h2M724 771.5h2M732 771.5h2M740 771.5h2M748 771.5h2M756 771.5h2M764 771.5h2M772 771.5h2M780 771.5h2M788 771.5h2M796 771.5h2M804 771.5h2M812 771.5h2M820 771.5h2M828 771.5h2M836 771.5h2M844 771.5h2M852 771.5h2M860 771.5h2M868 771.5h2M876 771.5h2M884 771.5h2M892 771.5h2M900 771.5h2M908 771.5h2M916 771.5h2M924 771.5h2M932 771.5h2M940 771.5h2M948 771.5h2M956 771.5h2M964 771.5h2M972 771.5h2M980 771.5h2M988 771.5h2M996 771.5h2M1004 771.5h2M1012 771.5h2M1020 771.5h2M1028 771.5h2M1036 771.5h2M1044 771.5h2M1052 771.5h2M1060 771.5h2M1068 771.5h2M1076 771.5h2M1084 771.5h2M1092 771.5h2M1100 771.5h2M1108 771.5h2M1116 771.5h2M592 779h2M600 779h2M608 779h2M616 779h2M624 779h2M632 779h2M640 779h2M648 779h2M656 779h2M664 779h2M672 779h2M680 779h2M688 779h2M696 779h2M704 779h2M712 779h2M720 779h2M728 779h2M736 779h2M744 779h2M752 779h2M760 779h2M768 779h2M776 779h2M784 779h2M792 779h2M800 779h2M808 779h2M816 779h2M824 779h2M832 779h2M840 779h2M848 779h2M856 779h2M864 779h2M872 779h2M880 779h2M888 779h2M896 779h2M904 779h2M912 779h2M920 779h2M928 779h2M936 779h2M944 779h2M952 779h2M960 779h2M968 779h2M976 779h2M984 779h2M992 779h2M1000 779h2M1008 779h2M1016 779h2M1024 779h2M1032 779h2M1040 779h2M1048 779h2M1056 779h2M1064 779h2M1072 779h2M1080 779h2M1088 779h2M1096 779h2M1104 779h2M1112 779h2M1120 779h2M588 786.5h2M596 786.5h2M604 786.5h2M612 786.5h2M620 786.5h2M628 786.5h2M636 786.5h2M644 786.5h2M652 786.5h2M660 786.5h2M668 786.5h2M676 786.5h2M684 786.5h2M692 786.5h2M700 786.5h2M708 786.5h2M716 786.5h2M724 786.5h2M732 786.5h2M740 786.5h2M748 786.5h2M756 786.5h2M764 786.5h2M772 786.5h2M780 786.5h2M788 786.5h2M796 786.5h2M804 786.5h2M812 786.5h2M820 786.5h2M828 786.5h2M836 786.5h2M844 786.5h2M852 786.5h2M860 786.5h2M868 786.5h2M876 786.5h2M884 786.5h2M892 786.5h2M900 786.5h2M908 786.5h2M916 786.5h2M924 786.5h2M932 786.5h2M940 786.5h2M948 786.5h2M956 786.5h2M964 786.5h2M972 786.5h2M980 786.5h2M988 786.5h2M996 786.5h2M1004 786.5h2M1012 786.5h2M1020 786.5h2M1028 786.5h2M1036 786.5h2M1044 786.5h2M1052 786.5h2M1060 786.5h2M1068 786.5h2M1076 786.5h2M1084 786.5h2M1092 786.5h2M1100 786.5h2M1108 786.5h2M1116 786.5h2M592 794h2M600 794h2M608 794h2M616 794h2M624 794h2M632 794h2M640 794h2M648 794h2M656 794h2M664 794h2M672 794h2M680 794h2M688 794h2M696 794h2M704 794h2M712 794h2M720 794h2M728 794h2M736 794h2M744 794h2M752 794h2M760 794h2M768 794h2M776 794h2M784 794h2M792 794h2M800 794h2M808 794h2M816 794h2M824 794h2M832 794h2M840 794h2M848 794h2M856 794h2M864 794h2M872 794h2M880 794h2M888 794h2M896 794h2M904 794h2M912 794h2M920 794h2M928 794h2M936 794h2M944 794h2M952 794h2M960 794h2M968 794h2M976 794h2M984 794h2M992 794h2M1000 794h2M1008 794h2M1016 794h2M1024 794h2M1032 794h2M1040 794h2M1048 794h2M1056 794h2M1064 794h2M1072 794h2M1080 794h2M1088 794h2M1096 794h2M1104 794h2M1112 794h2M1120 794h2M588 801.5h2M596 801.5h2M604 801.5h2M612 801.5h2M620 801.5h2M628 801.5h2M636 801.5h2M644 801.5h2M652 801.5h2M660 801.5h2M668 801.5h2M676 801.5h2M684 801.5h2M692 801.5h2M700 801.5h2M708 801.5h2M716 801.5h2M724 801.5h2M732 801.5h2M740 801.5h2M748 801.5h2M756 801.5h2M764 801.5h2M772 801.5h2M780 801.5h2M788 801.5h2M796 801.5h2M804 801.5h2M812 801.5h2M820 801.5h2M828 801.5h2M836 801.5h2M844 801.5h2M852 801.5h2M860 801.5h2M868 801.5h2M876 801.5h2M884 801.5h2M892 801.5h2M900 801.5h2M908 801.5h2M916 801.5h2M924 801.5h2M932 801.5h2M940 801.5h2M948 801.5h2M956 801.5h2M964 801.5h2M972 801.5h2M980 801.5h2M988 801.5h2M996 801.5h2M1004 801.5h2M1012 801.5h2M1020 801.5h2M1028 801.5h2M1036 801.5h2M1044 801.5h2M1052 801.5h2M1060 801.5h2M1068 801.5h2M1076 801.5h2M1084 801.5h2M1092 801.5h2M1100 801.5h2M1108 801.5h2M1116 801.5h2M592 809h2M600 809h2M608 809h2M616 809h2M624 809h2M632 809h2M640 809h2M648 809h2M656 809h2M664 809h2M672 809h2M680 809h2M688 809h2M696 809h2M704 809h2M712 809h2M720 809h2M728 809h2M736 809h2M744 809h2M752 809h2M760 809h2M768 809h2M776 809h2M784 809h2M792 809h2M800 809h2M808 809h2M816 809h2M824 809h2M832 809h2M840 809h2M848 809h2M856 809h2M864 809h2M872 809h2M880 809h2M888 809h2M896 809h2M904 809h2M912 809h2M920 809h2M928 809h2M936 809h2M944 809h2M952 809h2M960 809h2M968 809h2M976 809h2M984 809h2M992 809h2M1000 809h2M1008 809h2M1016 809h2M1024 809h2M1032 809h2M1040 809h2M1048 809h2M1056 809h2M1064 809h2M1072 809h2M1080 809h2M1088 809h2M1096 809h2M1104 809h2M1112 809h2M1120 809h2" stroke="#00f000" stroke-width="1.4" fill="none"/></g><g fill="#ff8000" shape-rendering="crispEdges"><path d="M785.5 453.5h9l-3 8h-10z"/><path d="M902.5 453.5h9l-3 8h-10z"/><path d="M961.5 453.5h9l-3 8h-10z"/><path d="M1021.5 453.5h9l-3 8h-10z"/><path d="M1140.5 453.5h9l-3 8h-10z"/><path d="M1260.5 453.5h9l-3 8h-10z"/><path d="M1320.5 453.5h9l-3 8h-10z"/><path d="M735.5 539.5h9l-3 8h-10z"/><path d="M853.5 539.5h9l-3 8h-10z"/><path d="M912.5 539.5h9l-3 8h-10z"/><path d="M971.5 539.5h9l-3 8h-10z"/><path d="M1091.5 539.5h9l-3 8h-10z"/><path d="M1211.5 539.5h9l-3 8h-10z"/><path d="M1270.5 539.5h9l-3 8h-10z"/><path d="M685.5 625.5h9l-3 8h-10z"/><path d="M803.5 625.5h9l-3 8h-10z"/><path d="M922.5 625.5h9l-3 8h-10z"/><path d="M1041.5 625.5h9l-3 8h-10z"/><path d="M1161.5 625.5h9l-3 8h-10z"/><path d="M1220.5 625.5h9l-3 8h-10z"/></g><path d="M788.5 240.5L905.5 240.5L964.5 240.5L1024.5 240.5L1143.5 240.5L1263.5 240.5L1323.5 240.5M788.5 311.5L905.5 311.5L964.5 311.5L1024.5 311.5L1143.5 311.5L1263.5 311.5L1323.5 311.5M788.5 394.5L905.5 394.5L964.5 394.5L1024.5 394.5L1143.5 394.5L1263.5 394.5L1323.5 394.5M738.5 325.5L856.5 325.5L915.5 325.5L974.5 325.5L1094.5 325.5L1214.5 325.5L1273.5 325.5M738.5 397.5L856.5 397.5L915.5 397.5L974.5 397.5L1094.5 397.5L1214.5 397.5L1273.5 397.5M738.5 480.5L856.5 480.5L915.5 480.5L974.5 480.5L1094.5 480.5L1214.5 480.5L1273.5 480.5M688.5 411.5L806.5 411.5L865.5 411.5L925.5 411.5L1044.5 411.5L1164.5 411.5L1223.5 411.5M688.5 483.5L806.5 483.5L865.5 483.5L925.5 483.5L1044.5 483.5L1164.5 483.5L1223.5 483.5M688.5 565.5L806.5 565.5L865.5 565.5L925.5 565.5L1044.5 565.5L1164.5 565.5L1223.5 565.5M639.5 497.5L756.5 497.5L816.5 497.5L875.5 497.5L995.5 497.5L1115.5 497.5L1174.5 497.5M639.5 568.5L756.5 568.5L816.5 568.5L875.5 568.5L995.5 568.5L1115.5 568.5L1174.5 568.5M639.5 651.5L756.5 651.5L816.5 651.5L875.5 651.5L995.5 651.5L1115.5 651.5L1174.5 651.5M589.5 582.5L707.5 582.5L766.5 582.5L826.5 582.5L945.5 582.5L1065.5 582.5L1124.5 582.5M589.5 654.5L707.5 654.5L766.5 654.5L826.5 654.5L945.5 654.5L1065.5 654.5L1124.5 654.5M589.5 737.5L707.5 737.5L766.5 737.5L826.5 737.5L945.5 737.5L1065.5 737.5L1124.5 737.5M540.5 668.5L657.5 668.5L716.5 668.5L776.5 668.5L895.5 668.5L1015.5 668.5L1075.5 668.5M540.5 740.5L657.5 740.5L716.5 740.5L776.5 740.5L895.5 740.5L1015.5 740.5L1075.5 740.5M540.5 822.5L657.5 822.5L716.5 822.5L776.5 822.5L895.5 822.5L1015.5 822.5L1075.5 822.5M788.5 240.5L738.5 325.5L688.5 411.5L639.5 497.5L589.5 582.5L540.5 668.5M788.5 311.5L738.5 397.5L688.5 483.5L639.5 568.5L589.5 654.5L540.5 740.5M788.5 394.5L738.5 480.5L688.5 565.5L639.5 651.5L589.5 737.5L540.5 822.5M905.5 240.5L856.5 325.5L806.5 411.5L756.5 497.5L707.5 582.5L657.5 668.5M905.5 311.5L856.5 397.5L806.5 483.5L756.5 568.5L707.5 654.5L657.5 740.5M905.5 394.5L856.5 480.5L806.5 565.5L756.5 651.5L707.5 737.5L657.5 822.5M964.5 240.5L915.5 325.5M964.5 311.5L915.5 397.5M964.5 394.5L915.5 480.5M1024.5 240.5L974.5 325.5L925.5 411.5L875.5 497.5L826.5 582.5L776.5 668.5M1024.5 311.5L974.5 397.5L925.5 483.5L875.5 568.5L826.5 654.5L776.5 740.5M1024.5 394.5L974.5 480.5L925.5 565.5L875.5 651.5L826.5 737.5L776.5 822.5M1143.5 240.5L1094.5 325.5L1044.5 411.5L995.5 497.5L945.5 582.5L895.5 668.5M1143.5 311.5L1094.5 397.5L1044.5 483.5L995.5 568.5L945.5 654.5L895.5 740.5M1143.5 394.5L1094.5 480.5L1044.5 565.5L995.5 651.5L945.5 737.5L895.5 822.5M1263.5 240.5L1214.5 325.5L1164.5 411.5L1115.5 497.5L1065.5 582.5L1015.5 668.5M1263.5 311.5L1214.5 397.5L1164.5 483.5L1115.5 568.5L1065.5 654.5L1015.5 740.5M1263.5 394.5L1214.5 480.5L1164.5 565.5L1115.5 651.5L1065.5 737.5L1015.5 822.5M1323.5 240.5L1273.5 325.5L1223.5 411.5L1174.5 497.5L1124.5 582.5L1075.5 668.5M1323.5 311.5L1273.5 397.5L1223.5 483.5L1174.5 568.5L1124.5 654.5L1075.5 740.5M1323.5 394.5L1273.5 480.5L1223.5 565.5L1174.5 651.5L1124.5 737.5L1075.5 822.5M788.5 240.5L788.5 311.5L788.5 394.5L788.5 457.5M905.5 240.5L905.5 311.5L905.5 394.5L905.5 457.5M964.5 240.5L964.5 311.5L964.5 394.5L964.5 457.5M1024.5 240.5L1024.5 311.5L1024.5 394.5L1024.5 457.5M1143.5 240.5L1143.5 311.5L1143.5 394.5L1143.5 457.5M1263.5 240.5L1263.5 311.5L1263.5 394.5L1263.5 457.5M1323.5 240.5L1323.5 311.5L1323.5 394.5L1323.5 457.5M738.5 325.5L738.5 397.5L738.5 480.5L738.5 543.5M856.5 325.5L856.5 397.5L856.5 480.5L856.5 543.5M915.5 325.5L915.5 397.5L915.5 480.5L915.5 543.5M974.5 325.5L974.5 397.5L974.5 480.5L974.5 543.5M1094.5 325.5L1094.5 397.5L1094.5 480.5L1094.5 543.5M1214.5 325.5L1214.5 397.5L1214.5 480.5L1214.5 543.5M1273.5 325.5L1273.5 397.5L1273.5 480.5L1273.5 543.5M688.5 411.5L688.5 483.5L688.5 565.5L688.5 629.5M806.5 411.5L806.5 483.5L806.5 565.5L806.5 629.5M925.5 411.5L925.5 483.5L925.5 565.5L925.5 629.5M1044.5 411.5L1044.5 483.5L1044.5 565.5L1044.5 629.5M1164.5 411.5L1164.5 483.5L1164.5 565.5L1164.5 629.5M1223.5 411.5L1223.5 483.5L1223.5 565.5L1223.5 629.5M639.5 497.5L639.5 568.5L639.5 651.5L639.5 714.5M756.5 497.5L756.5 568.5L756.5 651.5L756.5 714.5M875.5 497.5L875.5 568.5L875.5 651.5L875.5 714.5M995.5 497.5L995.5 568.5L995.5 651.5L995.5 714.5M1115.5 497.5L1115.5 568.5L1115.5 651.5L1115.5 714.5M1174.5 497.5L1174.5 568.5L1174.5 651.5L1174.5 714.5M589.5 582.5L589.5 654.5L589.5 737.5L589.5 800.5M707.5 582.5L707.5 654.5L707.5 737.5L707.5 800.5M826.5 582.5L826.5 654.5L826.5 737.5L826.5 800.5M945.5 582.5L945.5 654.5L945.5 737.5L945.5 800.5M1065.5 582.5L1065.5 654.5L1065.5 737.5L1065.5 800.5M1124.5 582.5L1124.5 654.5L1124.5 737.5L1124.5 800.5M540.5 668.5L540.5 740.5L540.5 822.5L540.5 886.5M657.5 668.5L657.5 740.5L657.5 822.5L657.5 886.5M776.5 668.5L776.5 740.5L776.5 822.5L776.5 886.5M895.5 668.5L895.5 740.5L895.5 822.5L895.5 886.5M1015.5 668.5L1015.5 740.5L1015.5 822.5L1015.5 886.5M1075.5 668.5L1075.5 740.5L1075.5 822.5L1075.5 886.5" stroke="#00e8e8" stroke-width="1" fill="none" shape-rendering="crispEdges"/><path d="M788.5 240.5L905.5 240.5L964.5 240.5L1024.5 240.5L1143.5 240.5L1263.5 240.5L1323.5 240.5M788.5 311.5L905.5 311.5L964.5 311.5L1024.5 311.5L1143.5 311.5L1263.5 311.5L1323.5 311.5M788.5 394.5L905.5 394.5L964.5 394.5L1024.5 394.5L1143.5 394.5L1263.5 394.5L1323.5 394.5M738.5 325.5L856.5 325.5L915.5 325.5L974.5 325.5L1094.5 325.5L1214.5 325.5L1273.5 325.5M738.5 397.5L856.5 397.5L915.5 397.5L974.5 397.5L1094.5 397.5L1214.5 397.5L1273.5 397.5M738.5 480.5L856.5 480.5L915.5 480.5L974.5 480.5L1094.5 480.5L1214.5 480.5L1273.5 480.5M688.5 411.5L806.5 411.5L865.5 411.5L925.5 411.5L1044.5 411.5L1164.5 411.5L1223.5 411.5M688.5 483.5L806.5 483.5L865.5 483.5L925.5 483.5L1044.5 483.5L1164.5 483.5L1223.5 483.5M688.5 565.5L806.5 565.5L865.5 565.5L925.5 565.5L1044.5 565.5L1164.5 565.5L1223.5 565.5M639.5 497.5L756.5 497.5L816.5 497.5L875.5 497.5L995.5 497.5L1115.5 497.5L1174.5 497.5M639.5 568.5L756.5 568.5L816.5 568.5L875.5 568.5L995.5 568.5L1115.5 568.5L1174.5 568.5M639.5 651.5L756.5 651.5L816.5 651.5L875.5 651.5L995.5 651.5L1115.5 651.5L1174.5 651.5M589.5 582.5L707.5 582.5L766.5 582.5L826.5 582.5L945.5 582.5L1065.5 582.5L1124.5 582.5M589.5 654.5L707.5 654.5L766.5 654.5L826.5 654.5L945.5 654.5L1065.5 654.5L1124.5 654.5M589.5 737.5L707.5 737.5L766.5 737.5L826.5 737.5L945.5 737.5L1065.5 737.5L1124.5 737.5M540.5 668.5L657.5 668.5L716.5 668.5L776.5 668.5L895.5 668.5L1015.5 668.5L1075.5 668.5M540.5 740.5L657.5 740.5L716.5 740.5L776.5 740.5L895.5 740.5L1015.5 740.5L1075.5 740.5M540.5 822.5L657.5 822.5L716.5 822.5L776.5 822.5L895.5 822.5L1015.5 822.5L1075.5 822.5M788.5 240.5L738.5 325.5L688.5 411.5L639.5 497.5L589.5 582.5L540.5 668.5M788.5 311.5L738.5 397.5L688.5 483.5L639.5 568.5L589.5 654.5L540.5 740.5M788.5 394.5L738.5 480.5L688.5 565.5L639.5 651.5L589.5 737.5L540.5 822.5M905.5 240.5L856.5 325.5L806.5 411.5L756.5 497.5L707.5 582.5L657.5 668.5M905.5 311.5L856.5 397.5L806.5 483.5L756.5 568.5L707.5 654.5L657.5 740.5M905.5 394.5L856.5 480.5L806.5 565.5L756.5 651.5L707.5 737.5L657.5 822.5M964.5 240.5L915.5 325.5M964.5 311.5L915.5 397.5M964.5 394.5L915.5 480.5M1024.5 240.5L974.5 325.5L925.5 411.5L875.5 497.5L826.5 582.5L776.5 668.5M1024.5 311.5L974.5 397.5L925.5 483.5L875.5 568.5L826.5 654.5L776.5 740.5M1024.5 394.5L974.5 480.5L925.5 565.5L875.5 651.5L826.5 737.5L776.5 822.5M1143.5 240.5L1094.5 325.5L1044.5 411.5L995.5 497.5L945.5 582.5L895.5 668.5M1143.5 311.5L1094.5 397.5L1044.5 483.5L995.5 568.5L945.5 654.5L895.5 740.5M1143.5 394.5L1094.5 480.5L1044.5 565.5L995.5 651.5L945.5 737.5L895.5 822.5M1263.5 240.5L1214.5 325.5L1164.5 411.5L1115.5 497.5L1065.5 582.5L1015.5 668.5M1263.5 311.5L1214.5 397.5L1164.5 483.5L1115.5 568.5L1065.5 654.5L1015.5 740.5M1263.5 394.5L1214.5 480.5L1164.5 565.5L1115.5 651.5L1065.5 737.5L1015.5 822.5M1323.5 240.5L1273.5 325.5L1223.5 411.5L1174.5 497.5L1124.5 582.5L1075.5 668.5M1323.5 311.5L1273.5 397.5L1223.5 483.5L1174.5 568.5L1124.5 654.5L1075.5 740.5M1323.5 394.5L1273.5 480.5L1223.5 565.5L1174.5 651.5L1124.5 737.5L1075.5 822.5M788.5 240.5L788.5 311.5L788.5 394.5L788.5 457.5M905.5 240.5L905.5 311.5L905.5 394.5L905.5 457.5M964.5 240.5L964.5 311.5L964.5 394.5L964.5 457.5M1024.5 240.5L1024.5 311.5L1024.5 394.5L1024.5 457.5M1143.5 240.5L1143.5 311.5L1143.5 394.5L1143.5 457.5M1263.5 240.5L1263.5 311.5L1263.5 394.5L1263.5 457.5M1323.5 240.5L1323.5 311.5L1323.5 394.5L1323.5 457.5M738.5 325.5L738.5 397.5L738.5 480.5L738.5 543.5M856.5 325.5L856.5 397.5L856.5 480.5L856.5 543.5M915.5 325.5L915.5 397.5L915.5 480.5L915.5 543.5M974.5 325.5L974.5 397.5L974.5 480.5L974.5 543.5M1094.5 325.5L1094.5 397.5L1094.5 480.5L1094.5 543.5M1214.5 325.5L1214.5 397.5L1214.5 480.5L1214.5 543.5M1273.5 325.5L1273.5 397.5L1273.5 480.5L1273.5 543.5M688.5 411.5L688.5 483.5L688.5 565.5L688.5 629.5M806.5 411.5L806.5 483.5L806.5 565.5L806.5 629.5M925.5 411.5L925.5 483.5L925.5 565.5L925.5 629.5M1044.5 411.5L1044.5 483.5L1044.5 565.5L1044.5 629.5M1164.5 411.5L1164.5 483.5L1164.5 565.5L1164.5 629.5M1223.5 411.5L1223.5 483.5L1223.5 565.5L1223.5 629.5M639.5 497.5L639.5 568.5L639.5 651.5L639.5 714.5M756.5 497.5L756.5 568.5L756.5 651.5L756.5 714.5M875.5 497.5L875.5 568.5L875.5 651.5L875.5 714.5M995.5 497.5L995.5 568.5L995.5 651.5L995.5 714.5M1115.5 497.5L1115.5 568.5L1115.5 651.5L1115.5 714.5M1174.5 497.5L1174.5 568.5L1174.5 651.5L1174.5 714.5M589.5 582.5L589.5 654.5L589.5 737.5L589.5 800.5M707.5 582.5L707.5 654.5L707.5 737.5L707.5 800.5M826.5 582.5L826.5 654.5L826.5 737.5L826.5 800.5M945.5 582.5L945.5 654.5L945.5 737.5L945.5 800.5M1065.5 582.5L1065.5 654.5L1065.5 737.5L1065.5 800.5M1124.5 582.5L1124.5 654.5L1124.5 737.5L1124.5 800.5M540.5 668.5L540.5 740.5L540.5 822.5L540.5 886.5M657.5 668.5L657.5 740.5L657.5 822.5L657.5 886.5M776.5 668.5L776.5 740.5L776.5 822.5L776.5 886.5M895.5 668.5L895.5 740.5L895.5 822.5L895.5 886.5M1015.5 668.5L1015.5 740.5L1015.5 822.5L1015.5 886.5M1075.5 668.5L1075.5 740.5L1075.5 822.5L1075.5 886.5" stroke="#00ff00" stroke-width="2.4" fill="none" stroke-dasharray="2.4 5.6"/><g clip-path="url(#rslabm)" shape-rendering="crispEdges"><path d="M763.1 499.6L1130 499.6M761.2 502.8L1130 502.8M759.4 506L1130 506M757.5 509.2L1130 509.2M755.7 512.4L1130 512.4M753.8 515.6L1130 515.6M752 518.8L1130 518.8M750.1 522L1130 522M748.3 525.2L1130 525.2M746.4 528.4L1130 528.4M744.6 531.6L1130 531.6M742.7 534.8L1130 534.8M740.8 538L1130 538M739 541.2L1130 541.2M737.1 544.4L1130 544.4M735.3 547.6L1130 547.6M733.4 550.8L1130 550.8M731.6 554L1130 554M729.7 557.2L1130 557.2M727.9 560.4L1130 560.4M726 563.6L1130 563.6M724.2 566.8L1130 566.8M722.3 570L1130 570M720.5 573.2L1130 573.2M718.6 576.4L1130 576.4M716.8 579.6L1130 579.6M714.9 582.8L1130 582.8M713.1 586L1130 586M711.2 589.2L1130 589.2M709.4 592.4L1130 592.4M707.5 595.6L1130 595.6M705.7 598.8L1130 598.8M703.8 602L1130 602M702 605.2L1130 605.2M700.1 608.4L1130 608.4M698.3 611.6L1130 611.6M696.4 614.8L1130 614.8M694.5 618L1130 618M692.7 621.2L1130 621.2M690.8 624.4L1130 624.4M689 627.6L1130 627.6M687.1 630.8L1130 630.8M685.3 634L1130 634M683.4 637.2L1130 637.2M681.6 640.4L1130 640.4M766 498L682.7 642M774.1 498L690.8 642M782.2 498L698.9 642M790.3 498L707 642M798.4 498L715.1 642M806.5 498L723.2 642M814.6 498L731.3 642M822.7 498L739.4 642M830.8 498L747.5 642M838.9 498L755.6 642M847 498L763.7 642M855.1 498L771.8 642M863.2 498L779.9 642M871.3 498L788 642M879.4 498L796.1 642M887.5 498L804.2 642M895.6 498L812.3 642M903.7 498L820.4 642M911.8 498L828.5 642M919.9 498L836.6 642M928 498L844.7 642M936.1 498L852.8 642M944.2 498L860.9 642M952.3 498L869 642M960.4 498L877.1 642M968.5 498L885.2 642M976.6 498L893.3 642M984.7 498L901.4 642M992.8 498L909.5 642M1000.9 498L917.6 642M1009 498L925.7 642M1017.1 498L933.8 642M1025.2 498L941.9 642M1033.3 498L950 642M1041.4 498L958.1 642M1049.5 498L966.2 642M1057.6 498L974.3 642M1065.7 498L982.4 642M1073.8 498L990.5 642M1081.9 498L998.6 642M1090 498L1006.7 642M1098.1 498L1014.8 642M1106.2 498L1022.9 642M1114.3 498L1031 642M1122.4 498L1039.1 642M1130.5 498L1047.2 642M1138.6 498L1055.3 642M1146.7 498L1063.4 642M1154.8 498L1071.5 642M1162.9 498L1079.6 642M1171 498L1087.7 642M1179.1 498L1095.8 642M1187.2 498L1103.9 642M1195.3 498L1112 642M1203.4 498L1120.1 642M1211.5 498L1128.2 642M1219.6 498L1136.3 642" stroke="#cc00cc" stroke-width="1" fill="none"/></g><path d="M764 498H1122" stroke="#cc00cc" stroke-width="2" fill="none" shape-rendering="crispEdges"/><path d="M790 286.9L907 291.1L966 293.1L1026 294.1L1145 294.9L1265 294.9L1325 294.9M789.5 356.3L906.5 360.5L965.5 362.5L1025.5 363.5L1144.5 364.3L1264.5 364.3L1324.5 364.3M789 437.7L906 441.9L965 443.9L1025 444.9L1144 445.7L1264 445.7L1324 445.7M740 373.9L858 378.1L917 380.1L976 381.1L1096 381.9L1216 381.9L1275 381.9M739.5 444.3L857.5 448.5L916.5 450.5L975.5 451.5L1095.5 452.3L1215.5 452.3L1274.5 452.3M739 525.7L857 529.9L916 531.9L975 532.9L1095 533.7L1215 533.7L1274 533.7M690 461.9L808 466.1L867 468.1L927 469.1L1046 469.9L1166 469.9L1225 469.9M689.5 532.3L807.5 536.5L866.5 538.5L926.5 539.5L1045.5 540.3L1165.5 540.3L1224.5 540.3M689 612.7L807 616.9L866 618.9L926 619.9L1045 620.7L1165 620.7L1224 620.7M641 549.9L758 554.1L818 556.1L877 557.1L997 557.9L1117 557.9L1176 557.9M640.5 619.3L757.5 623.5L817.5 625.5L876.5 626.5L996.5 627.3L1116.5 627.3L1175.5 627.3M640 700.7L757 704.9L817 706.9L876 707.9L996 708.7L1116 708.7L1175 708.7M591 636.9L709 641.1L768 643.1L828 644.1L947 644.9L1067 644.9L1126 644.9M590.5 707.3L708.5 711.5L767.5 713.5L827.5 714.5L946.5 715.3L1066.5 715.3L1125.5 715.3M590 788.7L708 792.9L767 794.9L827 795.9L946 796.7L1066 796.7L1125 796.7M542 724.9L659 729.1L718 731.1L778 732.1L897 732.9L1017 732.9L1077 732.9M541.5 795.3L658.5 799.5L717.5 801.5L777.5 802.5L896.5 803.3L1016.5 803.3L1076.5 803.3M541 875.7L658 879.9L717 881.9L777 882.9L896 883.7L1016 883.7L1076 883.7M790 286.9L740 373.9L690 461.9L641 549.9L591 636.9L542 724.9M789.5 356.3L739.5 444.3L689.5 532.3L640.5 619.3L590.5 707.3L541.5 795.3M789 437.7L739 525.7L689 612.7L640 700.7L590 788.7L541 875.7M907 291.1L858 378.1L808 466.1L758 554.1L709 641.1L659 729.1M906.5 360.5L857.5 448.5L807.5 536.5L757.5 623.5L708.5 711.5L658.5 799.5M906 441.9L857 529.9L807 616.9L757 704.9L708 792.9L658 879.9M966 293.1L917 380.1M965.5 362.5L916.5 450.5M965 443.9L916 531.9M1026 294.1L976 381.1L927 469.1L877 557.1L828 644.1L778 732.1M1025.5 363.5L975.5 451.5L926.5 539.5L876.5 626.5L827.5 714.5L777.5 802.5M1025 444.9L975 532.9L926 619.9L876 707.9L827 795.9L777 882.9M1145 294.9L1096 381.9L1046 469.9L997 557.9L947 644.9L897 732.9M1144.5 364.3L1095.5 452.3L1045.5 540.3L996.5 627.3L946.5 715.3L896.5 803.3M1144 445.7L1095 533.7L1045 620.7L996 708.7L946 796.7L896 883.7M1265 294.9L1216 381.9L1166 469.9L1117 557.9L1067 644.9L1017 732.9M1264.5 364.3L1215.5 452.3L1165.5 540.3L1116.5 627.3L1066.5 715.3L1016.5 803.3M1264 445.7L1215 533.7L1165 620.7L1116 708.7L1066 796.7L1016 883.7M1325 294.9L1275 381.9L1225 469.9L1176 557.9L1126 644.9L1077 732.9M1324.5 364.3L1274.5 452.3L1224.5 540.3L1175.5 627.3L1125.5 715.3L1076.5 803.3M1324 445.7L1274 533.7L1224 620.7L1175 708.7L1125 796.7L1076 883.7M790 286.9L789.5 356.3L789 437.7L788.5 499.1M907 291.1L906.5 360.5L906 441.9L905.5 503.3M966 293.1L965.5 362.5L965 443.9L964.5 505.3M1026 294.1L1025.5 363.5L1025 444.9L1024.5 506.3M1145 294.9L1144.5 364.3L1144 445.7L1143.5 507.1M1265 294.9L1264.5 364.3L1264 445.7L1263.5 507.1M1325 294.9L1324.5 364.3L1324 445.7L1323.5 507.1M740 373.9L739.5 444.3L739 525.7L738.5 587.1M858 378.1L857.5 448.5L857 529.9L856.5 591.3M917 380.1L916.5 450.5L916 531.9L915.5 593.3M976 381.1L975.5 451.5L975 532.9L974.5 594.3M1096 381.9L1095.5 452.3L1095 533.7L1094.5 595.1M1216 381.9L1215.5 452.3L1215 533.7L1214.5 595.1M1275 381.9L1274.5 452.3L1274 533.7L1273.5 595.1M690 461.9L689.5 532.3L689 612.7L688.5 675.1M808 466.1L807.5 536.5L807 616.9L806.5 679.3M927 469.1L926.5 539.5L926 619.9L925.5 682.3M1046 469.9L1045.5 540.3L1045 620.7L1044.5 683.1M1166 469.9L1165.5 540.3L1165 620.7L1164.5 683.1M1225 469.9L1224.5 540.3L1224 620.7L1223.5 683.1M641 549.9L640.5 619.3L640 700.7L639.5 762.1M758 554.1L757.5 623.5L757 704.9L756.5 766.3M877 557.1L876.5 626.5L876 707.9L875.5 769.3M997 557.9L996.5 627.3L996 708.7L995.5 770.1M1117 557.9L1116.5 627.3L1116 708.7L1115.5 770.1M1176 557.9L1175.5 627.3L1175 708.7L1174.5 770.1M591 636.9L590.5 707.3L590 788.7L589.5 850.1M709 641.1L708.5 711.5L708 792.9L707.5 854.3M828 644.1L827.5 714.5L827 795.9L826.5 857.3M947 644.9L946.5 715.3L946 796.7L945.5 858.1M1067 644.9L1066.5 715.3L1066 796.7L1065.5 858.1M1126 644.9L1125.5 715.3L1125 796.7L1124.5 858.1M542 724.9L541.5 795.3L541 875.7L540.5 938.1M659 729.1L658.5 799.5L658 879.9L657.5 942.3M778 732.1L777.5 802.5L777 882.9L776.5 945.3M897 732.9L896.5 803.3L896 883.7L895.5 946.1M1017 732.9L1016.5 803.3L1016 883.7L1015.5 946.1M1077 732.9L1076.5 803.3L1076 883.7L1075.5 946.1" stroke="#cc00cc" stroke-width="1" fill="none" shape-rendering="crispEdges"/><rect x="587" y="642" width="535" height="170" fill="url(#dense)" shape-rendering="crispEdges"/><path d="M587 643H1122M587 690H1122M587 738H1122M587 786H1122M641 642V812M700 642V812M759 642V812M877 642V812M995 642V812M1113 642V812" stroke="#cc00cc" stroke-width="2.4" fill="none" shape-rendering="crispEdges"/><path d="M589 646h2v2h-2zM597 646h2v2h-2zM613 646h2v2h-2zM629 646h2v2h-2zM637 646h2v2h-2zM645 646h2v2h-2zM661 646h2v2h-2zM669 646h2v2h-2zM677 646h2v2h-2zM685 646h2v2h-2zM701 646h2v2h-2zM709 646h2v2h-2zM717 646h2v2h-2zM733 646h2v2h-2zM741 646h2v2h-2zM765 646h2v2h-2zM773 646h2v2h-2zM781 646h2v2h-2zM789 646h2v2h-2zM797 646h2v2h-2zM805 646h2v2h-2zM813 646h2v2h-2zM821 646h2v2h-2zM829 646h2v2h-2zM837 646h2v2h-2zM853 646h2v2h-2zM877 646h2v2h-2zM885 646h2v2h-2zM893 646h2v2h-2zM901 646h2v2h-2zM917 646h2v2h-2zM957 646h2v2h-2zM973 646h2v2h-2zM997 646h2v2h-2zM1021 646h2v2h-2zM1029 646h2v2h-2zM1045 646h2v2h-2zM1061 646h2v2h-2zM1077 646h2v2h-2zM1085 646h2v2h-2zM1101 646h2v2h-2zM1109 646h2v2h-2zM1117 646h2v2h-2zM593 653.5h2v2h-2zM601 653.5h2v2h-2zM609 653.5h2v2h-2zM617 653.5h2v2h-2zM649 653.5h2v2h-2zM665 653.5h2v2h-2zM673 653.5h2v2h-2zM689 653.5h2v2h-2zM705 653.5h2v2h-2zM713 653.5h2v2h-2zM729 653.5h2v2h-2zM753 653.5h2v2h-2zM769 653.5h2v2h-2zM785 653.5h2v2h-2zM793 653.5h2v2h-2zM809 653.5h2v2h-2zM817 653.5h2v2h-2zM833 653.5h2v2h-2zM849 653.5h2v2h-2zM873 653.5h2v2h-2zM889 653.5h2v2h-2zM897 653.5h2v2h-2zM905 653.5h2v2h-2zM913 653.5h2v2h-2zM929 653.5h2v2h-2zM937 653.5h2v2h-2zM953 653.5h2v2h-2zM961 653.5h2v2h-2zM977 653.5h2v2h-2zM985 653.5h2v2h-2zM993 653.5h2v2h-2zM1001 653.5h2v2h-2zM1009 653.5h2v2h-2zM1017 653.5h2v2h-2zM1025 653.5h2v2h-2zM1033 653.5h2v2h-2zM1041 653.5h2v2h-2zM1057 653.5h2v2h-2zM1065 653.5h2v2h-2zM1081 653.5h2v2h-2zM1089 653.5h2v2h-2zM1097 653.5h2v2h-2zM597 661h2v2h-2zM605 661h2v2h-2zM613 661h2v2h-2zM629 661h2v2h-2zM637 661h2v2h-2zM653 661h2v2h-2zM677 661h2v2h-2zM693 661h2v2h-2zM701 661h2v2h-2zM709 661h2v2h-2zM717 661h2v2h-2zM725 661h2v2h-2zM741 661h2v2h-2zM749 661h2v2h-2zM765 661h2v2h-2zM773 661h2v2h-2zM789 661h2v2h-2zM813 661h2v2h-2zM821 661h2v2h-2zM829 661h2v2h-2zM837 661h2v2h-2zM869 661h2v2h-2zM893 661h2v2h-2zM909 661h2v2h-2zM917 661h2v2h-2zM925 661h2v2h-2zM933 661h2v2h-2zM941 661h2v2h-2zM949 661h2v2h-2zM989 661h2v2h-2zM997 661h2v2h-2zM1005 661h2v2h-2zM1021 661h2v2h-2zM1029 661h2v2h-2zM1053 661h2v2h-2zM1069 661h2v2h-2zM1077 661h2v2h-2zM1085 661h2v2h-2zM1117 661h2v2h-2zM601 668.5h2v2h-2zM609 668.5h2v2h-2zM657 668.5h2v2h-2zM689 668.5h2v2h-2zM705 668.5h2v2h-2zM713 668.5h2v2h-2zM721 668.5h2v2h-2zM737 668.5h2v2h-2zM753 668.5h2v2h-2zM761 668.5h2v2h-2zM769 668.5h2v2h-2zM785 668.5h2v2h-2zM793 668.5h2v2h-2zM801 668.5h2v2h-2zM809 668.5h2v2h-2zM849 668.5h2v2h-2zM857 668.5h2v2h-2zM865 668.5h2v2h-2zM897 668.5h2v2h-2zM929 668.5h2v2h-2zM937 668.5h2v2h-2zM945 668.5h2v2h-2zM953 668.5h2v2h-2zM1001 668.5h2v2h-2zM1009 668.5h2v2h-2zM1017 668.5h2v2h-2zM1033 668.5h2v2h-2zM1041 668.5h2v2h-2zM1049 668.5h2v2h-2zM1057 668.5h2v2h-2zM1065 668.5h2v2h-2zM1073 668.5h2v2h-2zM1089 668.5h2v2h-2zM1097 668.5h2v2h-2zM1113 668.5h2v2h-2zM605 676h2v2h-2zM613 676h2v2h-2zM621 676h2v2h-2zM637 676h2v2h-2zM653 676h2v2h-2zM661 676h2v2h-2zM677 676h2v2h-2zM693 676h2v2h-2zM701 676h2v2h-2zM709 676h2v2h-2zM733 676h2v2h-2zM741 676h2v2h-2zM749 676h2v2h-2zM765 676h2v2h-2zM773 676h2v2h-2zM781 676h2v2h-2zM797 676h2v2h-2zM813 676h2v2h-2zM821 676h2v2h-2zM837 676h2v2h-2zM845 676h2v2h-2zM861 676h2v2h-2zM901 676h2v2h-2zM909 676h2v2h-2zM917 676h2v2h-2zM933 676h2v2h-2zM949 676h2v2h-2zM957 676h2v2h-2zM965 676h2v2h-2zM981 676h2v2h-2zM989 676h2v2h-2zM1005 676h2v2h-2zM1013 676h2v2h-2zM1021 676h2v2h-2zM1053 676h2v2h-2zM1061 676h2v2h-2zM1069 676h2v2h-2zM1101 676h2v2h-2zM1109 676h2v2h-2zM593 683.5h2v2h-2zM601 683.5h2v2h-2zM609 683.5h2v2h-2zM625 683.5h2v2h-2zM633 683.5h2v2h-2zM641 683.5h2v2h-2zM665 683.5h2v2h-2zM673 683.5h2v2h-2zM681 683.5h2v2h-2zM689 683.5h2v2h-2zM697 683.5h2v2h-2zM705 683.5h2v2h-2zM713 683.5h2v2h-2zM721 683.5h2v2h-2zM745 683.5h2v2h-2zM761 683.5h2v2h-2zM769 683.5h2v2h-2zM801 683.5h2v2h-2zM809 683.5h2v2h-2zM825 683.5h2v2h-2zM833 683.5h2v2h-2zM841 683.5h2v2h-2zM849 683.5h2v2h-2zM857 683.5h2v2h-2zM881 683.5h2v2h-2zM897 683.5h2v2h-2zM905 683.5h2v2h-2zM921 683.5h2v2h-2zM945 683.5h2v2h-2zM953 683.5h2v2h-2zM969 683.5h2v2h-2zM977 683.5h2v2h-2zM1041 683.5h2v2h-2zM1049 683.5h2v2h-2zM1065 683.5h2v2h-2zM1073 683.5h2v2h-2zM1105 683.5h2v2h-2zM1113 683.5h2v2h-2zM589 691h2v2h-2zM605 691h2v2h-2zM629 691h2v2h-2zM653 691h2v2h-2zM661 691h2v2h-2zM677 691h2v2h-2zM685 691h2v2h-2zM693 691h2v2h-2zM717 691h2v2h-2zM725 691h2v2h-2zM733 691h2v2h-2zM741 691h2v2h-2zM757 691h2v2h-2zM781 691h2v2h-2zM789 691h2v2h-2zM805 691h2v2h-2zM821 691h2v2h-2zM837 691h2v2h-2zM853 691h2v2h-2zM861 691h2v2h-2zM869 691h2v2h-2zM877 691h2v2h-2zM885 691h2v2h-2zM893 691h2v2h-2zM901 691h2v2h-2zM917 691h2v2h-2zM925 691h2v2h-2zM933 691h2v2h-2zM957 691h2v2h-2zM965 691h2v2h-2zM981 691h2v2h-2zM989 691h2v2h-2zM997 691h2v2h-2zM1029 691h2v2h-2zM1037 691h2v2h-2zM1045 691h2v2h-2zM1061 691h2v2h-2zM1093 691h2v2h-2zM1101 691h2v2h-2zM1109 691h2v2h-2zM1117 691h2v2h-2zM601 698.5h2v2h-2zM617 698.5h2v2h-2zM625 698.5h2v2h-2zM633 698.5h2v2h-2zM641 698.5h2v2h-2zM649 698.5h2v2h-2zM657 698.5h2v2h-2zM673 698.5h2v2h-2zM681 698.5h2v2h-2zM689 698.5h2v2h-2zM697 698.5h2v2h-2zM705 698.5h2v2h-2zM729 698.5h2v2h-2zM753 698.5h2v2h-2zM785 698.5h2v2h-2zM809 698.5h2v2h-2zM817 698.5h2v2h-2zM841 698.5h2v2h-2zM849 698.5h2v2h-2zM857 698.5h2v2h-2zM865 698.5h2v2h-2zM881 698.5h2v2h-2zM889 698.5h2v2h-2zM913 698.5h2v2h-2zM977 698.5h2v2h-2zM993 698.5h2v2h-2zM1009 698.5h2v2h-2zM1025 698.5h2v2h-2zM1033 698.5h2v2h-2zM1041 698.5h2v2h-2zM1049 698.5h2v2h-2zM1057 698.5h2v2h-2zM1065 698.5h2v2h-2zM1073 698.5h2v2h-2zM1081 698.5h2v2h-2zM1089 698.5h2v2h-2zM1097 698.5h2v2h-2zM1105 698.5h2v2h-2zM589 706h2v2h-2zM605 706h2v2h-2zM613 706h2v2h-2zM637 706h2v2h-2zM645 706h2v2h-2zM661 706h2v2h-2zM685 706h2v2h-2zM717 706h2v2h-2zM733 706h2v2h-2zM741 706h2v2h-2zM757 706h2v2h-2zM781 706h2v2h-2zM797 706h2v2h-2zM805 706h2v2h-2zM813 706h2v2h-2zM829 706h2v2h-2zM837 706h2v2h-2zM845 706h2v2h-2zM853 706h2v2h-2zM869 706h2v2h-2zM885 706h2v2h-2zM893 706h2v2h-2zM901 706h2v2h-2zM909 706h2v2h-2zM941 706h2v2h-2zM949 706h2v2h-2zM957 706h2v2h-2zM965 706h2v2h-2zM989 706h2v2h-2zM1013 706h2v2h-2zM1021 706h2v2h-2zM1029 706h2v2h-2zM1037 706h2v2h-2zM1045 706h2v2h-2zM593 713.5h2v2h-2zM609 713.5h2v2h-2zM625 713.5h2v2h-2zM641 713.5h2v2h-2zM649 713.5h2v2h-2zM657 713.5h2v2h-2zM689 713.5h2v2h-2zM713 713.5h2v2h-2zM721 713.5h2v2h-2zM729 713.5h2v2h-2zM737 713.5h2v2h-2zM745 713.5h2v2h-2zM753 713.5h2v2h-2zM777 713.5h2v2h-2zM785 713.5h2v2h-2zM793 713.5h2v2h-2zM801 713.5h2v2h-2zM817 713.5h2v2h-2zM833 713.5h2v2h-2zM841 713.5h2v2h-2zM849 713.5h2v2h-2zM857 713.5h2v2h-2zM881 713.5h2v2h-2zM889 713.5h2v2h-2zM897 713.5h2v2h-2zM913 713.5h2v2h-2zM921 713.5h2v2h-2zM929 713.5h2v2h-2zM937 713.5h2v2h-2zM953 713.5h2v2h-2zM969 713.5h2v2h-2zM985 713.5h2v2h-2zM993 713.5h2v2h-2zM1009 713.5h2v2h-2zM1025 713.5h2v2h-2zM1033 713.5h2v2h-2zM1073 713.5h2v2h-2zM1097 713.5h2v2h-2zM1113 713.5h2v2h-2zM605 721h2v2h-2zM613 721h2v2h-2zM637 721h2v2h-2zM645 721h2v2h-2zM661 721h2v2h-2zM677 721h2v2h-2zM685 721h2v2h-2zM693 721h2v2h-2zM701 721h2v2h-2zM709 721h2v2h-2zM725 721h2v2h-2zM741 721h2v2h-2zM765 721h2v2h-2zM773 721h2v2h-2zM805 721h2v2h-2zM813 721h2v2h-2zM821 721h2v2h-2zM853 721h2v2h-2zM893 721h2v2h-2zM901 721h2v2h-2zM917 721h2v2h-2zM957 721h2v2h-2zM965 721h2v2h-2zM973 721h2v2h-2zM981 721h2v2h-2zM989 721h2v2h-2zM1013 721h2v2h-2zM1045 721h2v2h-2zM1053 721h2v2h-2zM1093 721h2v2h-2zM1101 721h2v2h-2zM1109 721h2v2h-2zM593 728.5h2v2h-2zM617 728.5h2v2h-2zM641 728.5h2v2h-2zM649 728.5h2v2h-2zM657 728.5h2v2h-2zM681 728.5h2v2h-2zM689 728.5h2v2h-2zM713 728.5h2v2h-2zM721 728.5h2v2h-2zM745 728.5h2v2h-2zM753 728.5h2v2h-2zM761 728.5h2v2h-2zM769 728.5h2v2h-2zM777 728.5h2v2h-2zM785 728.5h2v2h-2zM801 728.5h2v2h-2zM809 728.5h2v2h-2zM817 728.5h2v2h-2zM825 728.5h2v2h-2zM833 728.5h2v2h-2zM841 728.5h2v2h-2zM857 728.5h2v2h-2zM865 728.5h2v2h-2zM889 728.5h2v2h-2zM897 728.5h2v2h-2zM905 728.5h2v2h-2zM913 728.5h2v2h-2zM921 728.5h2v2h-2zM929 728.5h2v2h-2zM953 728.5h2v2h-2zM961 728.5h2v2h-2zM969 728.5h2v2h-2zM985 728.5h2v2h-2zM1025 728.5h2v2h-2zM1033 728.5h2v2h-2zM1041 728.5h2v2h-2zM1049 728.5h2v2h-2zM1057 728.5h2v2h-2zM1065 728.5h2v2h-2zM1073 728.5h2v2h-2zM1089 728.5h2v2h-2zM1113 728.5h2v2h-2zM589 736h2v2h-2zM597 736h2v2h-2zM605 736h2v2h-2zM621 736h2v2h-2zM629 736h2v2h-2zM661 736h2v2h-2zM669 736h2v2h-2zM677 736h2v2h-2zM701 736h2v2h-2zM709 736h2v2h-2zM717 736h2v2h-2zM725 736h2v2h-2zM757 736h2v2h-2zM797 736h2v2h-2zM805 736h2v2h-2zM837 736h2v2h-2zM845 736h2v2h-2zM861 736h2v2h-2zM869 736h2v2h-2zM877 736h2v2h-2zM885 736h2v2h-2zM893 736h2v2h-2zM901 736h2v2h-2zM909 736h2v2h-2zM917 736h2v2h-2zM933 736h2v2h-2zM949 736h2v2h-2zM957 736h2v2h-2zM973 736h2v2h-2zM1005 736h2v2h-2zM1013 736h2v2h-2zM1021 736h2v2h-2zM1053 736h2v2h-2zM1061 736h2v2h-2zM1077 736h2v2h-2zM1093 736h2v2h-2zM1101 736h2v2h-2zM1109 736h2v2h-2zM593 743.5h2v2h-2zM601 743.5h2v2h-2zM617 743.5h2v2h-2zM625 743.5h2v2h-2zM633 743.5h2v2h-2zM641 743.5h2v2h-2zM657 743.5h2v2h-2zM665 743.5h2v2h-2zM673 743.5h2v2h-2zM681 743.5h2v2h-2zM697 743.5h2v2h-2zM713 743.5h2v2h-2zM737 743.5h2v2h-2zM745 743.5h2v2h-2zM753 743.5h2v2h-2zM761 743.5h2v2h-2zM769 743.5h2v2h-2zM777 743.5h2v2h-2zM809 743.5h2v2h-2zM817 743.5h2v2h-2zM833 743.5h2v2h-2zM849 743.5h2v2h-2zM865 743.5h2v2h-2zM881 743.5h2v2h-2zM889 743.5h2v2h-2zM897 743.5h2v2h-2zM913 743.5h2v2h-2zM921 743.5h2v2h-2zM929 743.5h2v2h-2zM945 743.5h2v2h-2zM953 743.5h2v2h-2zM961 743.5h2v2h-2zM969 743.5h2v2h-2zM993 743.5h2v2h-2zM1001 743.5h2v2h-2zM1009 743.5h2v2h-2zM1025 743.5h2v2h-2zM1033 743.5h2v2h-2zM1041 743.5h2v2h-2zM1073 743.5h2v2h-2zM1081 743.5h2v2h-2zM1089 743.5h2v2h-2zM1105 743.5h2v2h-2zM589 751h2v2h-2zM605 751h2v2h-2zM629 751h2v2h-2zM637 751h2v2h-2zM653 751h2v2h-2zM669 751h2v2h-2zM677 751h2v2h-2zM693 751h2v2h-2zM701 751h2v2h-2zM709 751h2v2h-2zM717 751h2v2h-2zM725 751h2v2h-2zM733 751h2v2h-2zM741 751h2v2h-2zM749 751h2v2h-2zM757 751h2v2h-2zM789 751h2v2h-2zM805 751h2v2h-2zM821 751h2v2h-2zM845 751h2v2h-2zM853 751h2v2h-2zM861 751h2v2h-2zM869 751h2v2h-2zM877 751h2v2h-2zM893 751h2v2h-2zM901 751h2v2h-2zM909 751h2v2h-2zM917 751h2v2h-2zM933 751h2v2h-2zM941 751h2v2h-2zM957 751h2v2h-2zM965 751h2v2h-2zM973 751h2v2h-2zM981 751h2v2h-2zM989 751h2v2h-2zM1005 751h2v2h-2zM1029 751h2v2h-2zM1037 751h2v2h-2zM1045 751h2v2h-2zM1053 751h2v2h-2zM1061 751h2v2h-2zM1069 751h2v2h-2zM1077 751h2v2h-2zM1085 751h2v2h-2zM1093 751h2v2h-2zM1109 751h2v2h-2zM1117 751h2v2h-2zM601 758.5h2v2h-2zM625 758.5h2v2h-2zM633 758.5h2v2h-2zM649 758.5h2v2h-2zM657 758.5h2v2h-2zM681 758.5h2v2h-2zM689 758.5h2v2h-2zM697 758.5h2v2h-2zM705 758.5h2v2h-2zM753 758.5h2v2h-2zM761 758.5h2v2h-2zM785 758.5h2v2h-2zM793 758.5h2v2h-2zM809 758.5h2v2h-2zM817 758.5h2v2h-2zM825 758.5h2v2h-2zM833 758.5h2v2h-2zM841 758.5h2v2h-2zM849 758.5h2v2h-2zM857 758.5h2v2h-2zM921 758.5h2v2h-2zM937 758.5h2v2h-2zM953 758.5h2v2h-2zM961 758.5h2v2h-2zM985 758.5h2v2h-2zM993 758.5h2v2h-2zM1001 758.5h2v2h-2zM1017 758.5h2v2h-2zM1025 758.5h2v2h-2zM1041 758.5h2v2h-2zM1049 758.5h2v2h-2zM1065 758.5h2v2h-2zM1073 758.5h2v2h-2zM1081 758.5h2v2h-2zM1089 758.5h2v2h-2zM1097 758.5h2v2h-2zM1105 758.5h2v2h-2zM1113 758.5h2v2h-2zM589 766h2v2h-2zM597 766h2v2h-2zM605 766h2v2h-2zM613 766h2v2h-2zM621 766h2v2h-2zM629 766h2v2h-2zM653 766h2v2h-2zM669 766h2v2h-2zM685 766h2v2h-2zM693 766h2v2h-2zM709 766h2v2h-2zM717 766h2v2h-2zM725 766h2v2h-2zM733 766h2v2h-2zM741 766h2v2h-2zM749 766h2v2h-2zM757 766h2v2h-2zM765 766h2v2h-2zM773 766h2v2h-2zM789 766h2v2h-2zM797 766h2v2h-2zM805 766h2v2h-2zM813 766h2v2h-2zM829 766h2v2h-2zM845 766h2v2h-2zM853 766h2v2h-2zM869 766h2v2h-2zM877 766h2v2h-2zM885 766h2v2h-2zM893 766h2v2h-2zM909 766h2v2h-2zM917 766h2v2h-2zM941 766h2v2h-2zM949 766h2v2h-2zM957 766h2v2h-2zM997 766h2v2h-2zM1029 766h2v2h-2zM1061 766h2v2h-2zM1077 766h2v2h-2zM1093 766h2v2h-2zM1101 766h2v2h-2zM1117 766h2v2h-2zM593 773.5h2v2h-2zM625 773.5h2v2h-2zM633 773.5h2v2h-2zM641 773.5h2v2h-2zM657 773.5h2v2h-2zM665 773.5h2v2h-2zM673 773.5h2v2h-2zM681 773.5h2v2h-2zM689 773.5h2v2h-2zM713 773.5h2v2h-2zM721 773.5h2v2h-2zM729 773.5h2v2h-2zM737 773.5h2v2h-2zM745 773.5h2v2h-2zM753 773.5h2v2h-2zM761 773.5h2v2h-2zM769 773.5h2v2h-2zM785 773.5h2v2h-2zM817 773.5h2v2h-2zM825 773.5h2v2h-2zM841 773.5h2v2h-2zM849 773.5h2v2h-2zM857 773.5h2v2h-2zM865 773.5h2v2h-2zM889 773.5h2v2h-2zM905 773.5h2v2h-2zM913 773.5h2v2h-2zM929 773.5h2v2h-2zM937 773.5h2v2h-2zM945 773.5h2v2h-2zM953 773.5h2v2h-2zM977 773.5h2v2h-2zM985 773.5h2v2h-2zM993 773.5h2v2h-2zM1001 773.5h2v2h-2zM1009 773.5h2v2h-2zM1017 773.5h2v2h-2zM1041 773.5h2v2h-2zM1049 773.5h2v2h-2zM1073 773.5h2v2h-2zM1081 773.5h2v2h-2zM1097 773.5h2v2h-2zM1105 773.5h2v2h-2zM597 781h2v2h-2zM605 781h2v2h-2zM653 781h2v2h-2zM661 781h2v2h-2zM669 781h2v2h-2zM677 781h2v2h-2zM685 781h2v2h-2zM693 781h2v2h-2zM701 781h2v2h-2zM725 781h2v2h-2zM749 781h2v2h-2zM757 781h2v2h-2zM773 781h2v2h-2zM789 781h2v2h-2zM797 781h2v2h-2zM813 781h2v2h-2zM829 781h2v2h-2zM837 781h2v2h-2zM845 781h2v2h-2zM853 781h2v2h-2zM869 781h2v2h-2zM885 781h2v2h-2zM893 781h2v2h-2zM901 781h2v2h-2zM909 781h2v2h-2zM925 781h2v2h-2zM933 781h2v2h-2zM941 781h2v2h-2zM949 781h2v2h-2zM981 781h2v2h-2zM989 781h2v2h-2zM1005 781h2v2h-2zM1021 781h2v2h-2zM1029 781h2v2h-2zM1037 781h2v2h-2zM1045 781h2v2h-2zM1061 781h2v2h-2zM1069 781h2v2h-2zM1077 781h2v2h-2zM1085 781h2v2h-2zM1093 781h2v2h-2zM1109 781h2v2h-2zM593 788.5h2v2h-2zM609 788.5h2v2h-2zM617 788.5h2v2h-2zM641 788.5h2v2h-2zM665 788.5h2v2h-2zM689 788.5h2v2h-2zM705 788.5h2v2h-2zM713 788.5h2v2h-2zM729 788.5h2v2h-2zM737 788.5h2v2h-2zM753 788.5h2v2h-2zM769 788.5h2v2h-2zM777 788.5h2v2h-2zM785 788.5h2v2h-2zM793 788.5h2v2h-2zM809 788.5h2v2h-2zM817 788.5h2v2h-2zM825 788.5h2v2h-2zM833 788.5h2v2h-2zM841 788.5h2v2h-2zM849 788.5h2v2h-2zM857 788.5h2v2h-2zM865 788.5h2v2h-2zM881 788.5h2v2h-2zM889 788.5h2v2h-2zM897 788.5h2v2h-2zM905 788.5h2v2h-2zM913 788.5h2v2h-2zM921 788.5h2v2h-2zM937 788.5h2v2h-2zM945 788.5h2v2h-2zM961 788.5h2v2h-2zM969 788.5h2v2h-2zM985 788.5h2v2h-2zM993 788.5h2v2h-2zM1017 788.5h2v2h-2zM1025 788.5h2v2h-2zM1041 788.5h2v2h-2zM1057 788.5h2v2h-2zM1073 788.5h2v2h-2zM1081 788.5h2v2h-2zM1089 788.5h2v2h-2zM1097 788.5h2v2h-2zM1113 788.5h2v2h-2zM597 796h2v2h-2zM605 796h2v2h-2zM613 796h2v2h-2zM629 796h2v2h-2zM645 796h2v2h-2zM653 796h2v2h-2zM661 796h2v2h-2zM669 796h2v2h-2zM685 796h2v2h-2zM701 796h2v2h-2zM709 796h2v2h-2zM717 796h2v2h-2zM725 796h2v2h-2zM733 796h2v2h-2zM749 796h2v2h-2zM765 796h2v2h-2zM773 796h2v2h-2zM781 796h2v2h-2zM789 796h2v2h-2zM797 796h2v2h-2zM805 796h2v2h-2zM813 796h2v2h-2zM821 796h2v2h-2zM829 796h2v2h-2zM845 796h2v2h-2zM853 796h2v2h-2zM893 796h2v2h-2zM901 796h2v2h-2zM909 796h2v2h-2zM933 796h2v2h-2zM941 796h2v2h-2zM965 796h2v2h-2zM981 796h2v2h-2zM997 796h2v2h-2zM1005 796h2v2h-2zM1037 796h2v2h-2zM1045 796h2v2h-2zM1053 796h2v2h-2zM1061 796h2v2h-2zM1069 796h2v2h-2zM1077 796h2v2h-2zM1085 796h2v2h-2zM1093 796h2v2h-2zM1109 796h2v2h-2zM593 803.5h2v2h-2zM609 803.5h2v2h-2zM617 803.5h2v2h-2zM633 803.5h2v2h-2zM641 803.5h2v2h-2zM665 803.5h2v2h-2zM673 803.5h2v2h-2zM697 803.5h2v2h-2zM705 803.5h2v2h-2zM713 803.5h2v2h-2zM729 803.5h2v2h-2zM753 803.5h2v2h-2zM769 803.5h2v2h-2zM793 803.5h2v2h-2zM801 803.5h2v2h-2zM817 803.5h2v2h-2zM865 803.5h2v2h-2zM873 803.5h2v2h-2zM889 803.5h2v2h-2zM897 803.5h2v2h-2zM913 803.5h2v2h-2zM929 803.5h2v2h-2zM953 803.5h2v2h-2zM961 803.5h2v2h-2zM985 803.5h2v2h-2zM993 803.5h2v2h-2zM1001 803.5h2v2h-2zM1009 803.5h2v2h-2zM1017 803.5h2v2h-2zM1025 803.5h2v2h-2zM1033 803.5h2v2h-2zM1041 803.5h2v2h-2zM1065 803.5h2v2h-2zM1073 803.5h2v2h-2zM1081 803.5h2v2h-2zM1089 803.5h2v2h-2zM1105 803.5h2v2h-2zM1113 803.5h2v2h-2z" fill="#00f000" shape-rendering="crispEdges"/><path d="M703.3 652.6h5v2h-5zM710.3 652.6h4v2h-4zM704.3 656.6h3v2h-3zM703.3 735.2h5v2h-5zM710.3 735.2h4v2h-4zM704.3 739.2h3v2h-3zM703.3 798.4h5v2h-5zM710.3 798.4h4v2h-4zM704.3 802.4h3v2h-3zM822.1 652.6h5v2h-5zM829.1 652.6h4v2h-4zM823.1 656.6h3v2h-3zM822.1 735.2h5v2h-5zM829.1 735.2h4v2h-4zM823.1 739.2h3v2h-3zM822.1 798.4h5v2h-5zM829.1 798.4h4v2h-4zM823.1 802.4h3v2h-3zM941.4 652.6h5v2h-5zM948.4 652.6h4v2h-4zM942.4 656.6h3v2h-3zM941.4 735.2h5v2h-5zM948.4 735.2h4v2h-4zM942.4 739.2h3v2h-3zM941.4 798.4h5v2h-5zM948.4 798.4h4v2h-4zM942.4 802.4h3v2h-3zM1061.5 652.6h5v2h-5zM1068.5 652.6h4v2h-4zM1062.5 656.6h3v2h-3zM1061.5 735.2h5v2h-5zM1068.5 735.2h4v2h-4zM1062.5 739.2h3v2h-3zM1061.5 798.4h5v2h-5zM1068.5 798.4h4v2h-4zM1062.5 802.4h3v2h-3zM772.5 666.6h5v2h-5zM779.5 666.6h4v2h-4zM773.5 670.6h3v2h-3zM772.5 738.3h5v2h-5zM779.5 738.3h4v2h-4zM773.5 742.3h3v2h-3zM891.8 666.6h5v2h-5zM898.8 666.6h4v2h-4zM892.8 670.6h3v2h-3zM891.8 738.3h5v2h-5zM898.8 738.3h4v2h-4zM892.8 742.3h3v2h-3zM1011.9 666.6h5v2h-5zM1018.9 666.6h4v2h-4zM1012.9 670.6h3v2h-3zM1011.9 738.3h5v2h-5zM1018.9 738.3h4v2h-4zM1012.9 742.3h3v2h-3zM1071 666.6h5v2h-5zM1078 666.6h4v2h-4zM1072 670.6h3v2h-3zM1071 738.3h5v2h-5zM1078 738.3h4v2h-4zM1072 742.3h3v2h-3zM722.9 752.3h5v2h-5zM729.9 752.3h4v2h-4zM723.9 756.3h3v2h-3zM842.2 752.3h5v2h-5zM849.2 752.3h4v2h-4zM843.2 756.3h3v2h-3zM962.3 752.3h5v2h-5zM969.3 752.3h4v2h-4zM963.3 756.3h3v2h-3zM1021.4 752.3h5v2h-5zM1028.4 752.3h4v2h-4zM1022.4 756.3h3v2h-3zM1081 752.3h5v2h-5zM1088 752.3h4v2h-4zM1082 756.3h3v2h-3z" fill="#ff8000" shape-rendering="crispEdges"/><g fill="#ff8000" shape-rendering="crispEdges"><rect x="785" y="238" width="8" height="4"/><rect x="785" y="241" width="4" height="4"/><rect x="785" y="309" width="8" height="4"/><rect x="785" y="312" width="4" height="4"/><rect x="785" y="392" width="8" height="4"/><rect x="785" y="395" width="4" height="4"/><rect x="902" y="238" width="8" height="4"/><rect x="902" y="241" width="4" height="4"/><rect x="902" y="309" width="8" height="4"/><rect x="902" y="312" width="4" height="4"/><rect x="902" y="392" width="8" height="4"/><rect x="902" y="395" width="4" height="4"/><rect x="961" y="238" width="8" height="4"/><rect x="961" y="241" width="4" height="4"/><rect x="961" y="309" width="8" height="4"/><rect x="961" y="312" width="4" height="4"/><rect x="961" y="392" width="8" height="4"/><rect x="961" y="395" width="4" height="4"/><rect x="1021" y="238" width="8" height="4"/><rect x="1021" y="241" width="4" height="4"/><rect x="1021" y="309" width="8" height="4"/><rect x="1021" y="312" width="4" height="4"/><rect x="1021" y="392" width="8" height="4"/><rect x="1021" y="395" width="4" height="4"/><rect x="1140" y="238" width="8" height="4"/><rect x="1140" y="241" width="4" height="4"/><rect x="1140" y="309" width="8" height="4"/><rect x="1140" y="312" width="4" height="4"/><rect x="1140" y="392" width="8" height="4"/><rect x="1140" y="395" width="4" height="4"/><rect x="1260" y="238" width="8" height="4"/><rect x="1260" y="241" width="4" height="4"/><rect x="1260" y="309" width="8" height="4"/><rect x="1260" y="312" width="4" height="4"/><rect x="1260" y="392" width="8" height="4"/><rect x="1260" y="395" width="4" height="4"/><rect x="1320" y="238" width="8" height="4"/><rect x="1320" y="241" width="4" height="4"/><rect x="1320" y="309" width="8" height="4"/><rect x="1320" y="312" width="4" height="4"/><rect x="1320" y="392" width="8" height="4"/><rect x="1320" y="395" width="4" height="4"/><rect x="734" y="323" width="10" height="4"/><rect x="734" y="326" width="4" height="4"/><rect x="737" y="320" width="4" height="4"/><rect x="734" y="395" width="10" height="4"/><rect x="734" y="398" width="4" height="4"/><rect x="737" y="392" width="4" height="4"/><rect x="734" y="478" width="10" height="4"/><rect x="734" y="481" width="4" height="4"/><rect x="737" y="475" width="4" height="4"/><rect x="852" y="323" width="10" height="4"/><rect x="852" y="326" width="4" height="4"/><rect x="855" y="320" width="4" height="4"/><rect x="852" y="395" width="10" height="4"/><rect x="852" y="398" width="4" height="4"/><rect x="855" y="392" width="4" height="4"/><rect x="852" y="478" width="10" height="4"/><rect x="852" y="481" width="4" height="4"/><rect x="855" y="475" width="4" height="4"/><rect x="911" y="323" width="10" height="4"/><rect x="911" y="326" width="4" height="4"/><rect x="914" y="320" width="4" height="4"/><rect x="911" y="395" width="10" height="4"/><rect x="911" y="398" width="4" height="4"/><rect x="914" y="392" width="4" height="4"/><rect x="911" y="478" width="10" height="4"/><rect x="911" y="481" width="4" height="4"/><rect x="914" y="475" width="4" height="4"/><rect x="970" y="323" width="10" height="4"/><rect x="970" y="326" width="4" height="4"/><rect x="973" y="320" width="4" height="4"/><rect x="970" y="395" width="10" height="4"/><rect x="970" y="398" width="4" height="4"/><rect x="973" y="392" width="4" height="4"/><rect x="970" y="478" width="10" height="4"/><rect x="970" y="481" width="4" height="4"/><rect x="973" y="475" width="4" height="4"/><rect x="1090" y="323" width="10" height="4"/><rect x="1090" y="326" width="4" height="4"/><rect x="1093" y="320" width="4" height="4"/><rect x="1090" y="395" width="10" height="4"/><rect x="1090" y="398" width="4" height="4"/><rect x="1093" y="392" width="4" height="4"/><rect x="1090" y="478" width="10" height="4"/><rect x="1090" y="481" width="4" height="4"/><rect x="1093" y="475" width="4" height="4"/><rect x="1210" y="323" width="10" height="4"/><rect x="1210" y="326" width="4" height="4"/><rect x="1213" y="320" width="4" height="4"/><rect x="1210" y="395" width="10" height="4"/><rect x="1210" y="398" width="4" height="4"/><rect x="1213" y="392" width="4" height="4"/><rect x="1210" y="478" width="10" height="4"/><rect x="1210" y="481" width="4" height="4"/><rect x="1213" y="475" width="4" height="4"/><rect x="1269" y="323" width="10" height="4"/><rect x="1269" y="326" width="4" height="4"/><rect x="1272" y="320" width="4" height="4"/><rect x="1269" y="395" width="10" height="4"/><rect x="1269" y="398" width="4" height="4"/><rect x="1272" y="392" width="4" height="4"/><rect x="1269" y="478" width="10" height="4"/><rect x="1269" y="481" width="4" height="4"/><rect x="1272" y="475" width="4" height="4"/><rect x="684" y="409" width="10" height="4"/><rect x="684" y="412" width="4" height="4"/><rect x="687" y="406" width="4" height="4"/><rect x="684" y="481" width="10" height="4"/><rect x="684" y="484" width="4" height="4"/><rect x="687" y="478" width="4" height="4"/><rect x="684" y="563" width="10" height="4"/><rect x="684" y="566" width="4" height="4"/><rect x="687" y="560" width="4" height="4"/><rect x="802" y="409" width="10" height="4"/><rect x="802" y="412" width="4" height="4"/><rect x="805" y="406" width="4" height="4"/><rect x="802" y="481" width="10" height="4"/><rect x="802" y="484" width="4" height="4"/><rect x="805" y="478" width="4" height="4"/><rect x="802" y="563" width="10" height="4"/><rect x="802" y="566" width="4" height="4"/><rect x="805" y="560" width="4" height="4"/><rect x="921" y="409" width="10" height="4"/><rect x="921" y="412" width="4" height="4"/><rect x="924" y="406" width="4" height="4"/><rect x="921" y="481" width="10" height="4"/><rect x="921" y="484" width="4" height="4"/><rect x="924" y="478" width="4" height="4"/><rect x="921" y="563" width="10" height="4"/><rect x="921" y="566" width="4" height="4"/><rect x="924" y="560" width="4" height="4"/><rect x="1040" y="409" width="10" height="4"/><rect x="1040" y="412" width="4" height="4"/><rect x="1043" y="406" width="4" height="4"/><rect x="1040" y="481" width="10" height="4"/><rect x="1040" y="484" width="4" height="4"/><rect x="1043" y="478" width="4" height="4"/><rect x="1040" y="563" width="10" height="4"/><rect x="1040" y="566" width="4" height="4"/><rect x="1043" y="560" width="4" height="4"/><rect x="1160" y="409" width="10" height="4"/><rect x="1160" y="412" width="4" height="4"/><rect x="1163" y="406" width="4" height="4"/><rect x="1160" y="481" width="10" height="4"/><rect x="1160" y="484" width="4" height="4"/><rect x="1163" y="478" width="4" height="4"/><rect x="1160" y="563" width="10" height="4"/><rect x="1160" y="566" width="4" height="4"/><rect x="1163" y="560" width="4" height="4"/><rect x="1219" y="409" width="10" height="4"/><rect x="1219" y="412" width="4" height="4"/><rect x="1222" y="406" width="4" height="4"/><rect x="1219" y="481" width="10" height="4"/><rect x="1219" y="484" width="4" height="4"/><rect x="1222" y="478" width="4" height="4"/><rect x="1219" y="563" width="10" height="4"/><rect x="1219" y="566" width="4" height="4"/><rect x="1222" y="560" width="4" height="4"/><rect x="635" y="495" width="10" height="4"/><rect x="635" y="498" width="4" height="4"/><rect x="638" y="492" width="4" height="4"/><rect x="635" y="566" width="10" height="4"/><rect x="635" y="569" width="4" height="4"/><rect x="638" y="563" width="4" height="4"/><rect x="752" y="495" width="10" height="4"/><rect x="752" y="498" width="4" height="4"/><rect x="755" y="492" width="4" height="4"/><rect x="752" y="566" width="10" height="4"/><rect x="752" y="569" width="4" height="4"/><rect x="755" y="563" width="4" height="4"/><rect x="871" y="495" width="10" height="4"/><rect x="871" y="498" width="4" height="4"/><rect x="874" y="492" width="4" height="4"/><rect x="871" y="566" width="10" height="4"/><rect x="871" y="569" width="4" height="4"/><rect x="874" y="563" width="4" height="4"/><rect x="991" y="495" width="10" height="4"/><rect x="991" y="498" width="4" height="4"/><rect x="994" y="492" width="4" height="4"/><rect x="991" y="566" width="10" height="4"/><rect x="991" y="569" width="4" height="4"/><rect x="994" y="563" width="4" height="4"/><rect x="1111" y="495" width="10" height="4"/><rect x="1111" y="498" width="4" height="4"/><rect x="1114" y="492" width="4" height="4"/><rect x="1111" y="566" width="10" height="4"/><rect x="1111" y="569" width="4" height="4"/><rect x="1114" y="563" width="4" height="4"/><rect x="1170" y="495" width="10" height="4"/><rect x="1170" y="498" width="4" height="4"/><rect x="1173" y="492" width="4" height="4"/><rect x="1170" y="566" width="10" height="4"/><rect x="1170" y="569" width="4" height="4"/><rect x="1173" y="563" width="4" height="4"/><rect x="585" y="580" width="10" height="4"/><rect x="585" y="583" width="4" height="4"/><rect x="588" y="577" width="4" height="4"/><rect x="703" y="580" width="10" height="4"/><rect x="703" y="583" width="4" height="4"/><rect x="706" y="577" width="4" height="4"/><rect x="822" y="580" width="10" height="4"/><rect x="822" y="583" width="4" height="4"/><rect x="825" y="577" width="4" height="4"/><rect x="941" y="580" width="10" height="4"/><rect x="941" y="583" width="4" height="4"/><rect x="944" y="577" width="4" height="4"/><rect x="1061" y="580" width="10" height="4"/><rect x="1061" y="583" width="4" height="4"/><rect x="1064" y="577" width="4" height="4"/><rect x="1120" y="580" width="10" height="4"/><rect x="1120" y="583" width="4" height="4"/><rect x="1123" y="577" width="4" height="4"/></g></svg><div class="sb" style="left:1121px;top:150px;width:19px;height:661px"></div><svg class="a" style="left:1126px;top:156px" width="9" height="5"><path d="M0 5 L4.5 0 L9 5Z" fill="#404040"/></svg><svg class="a" style="left:1126px;top:799px" width="9" height="5"><path d="M0 0 L4.5 5 L9 0Z" fill="#404040"/></svg><div class="thumbv" style="left:1122px;top:282px;width:17px;height:320px"></div><div class="a" style="left:1126px;top:438px;width:8px;height:8px;background:repeating-linear-gradient(#5a5a5a 0,#5a5a5a 1px,#fff 1px,#fff 2px,transparent 2px,transparent 3px)"></div><div class="sb" style="left:587px;top:811px;width:553px;height:18px"></div><svg class="a" style="left:594px;top:816px" width="5" height="9"><path d="M5 0 L0 4.5 L5 9Z" fill="#404040"/></svg><svg class="a" style="left:1111px;top:816px" width="5" height="9"><path d="M0 0 L5 4.5 L0 9Z" fill="#404040"/></svg><div class="thumbh" style="left:674px;top:812px;width:241px;height:16px"></div><div class="a" style="left:790px;top:816px;width:8px;height:8px;background:repeating-linear-gradient(90deg,#5a5a5a 0,#5a5a5a 1px,#fff 1px,#fff 2px,transparent 2px,transparent 3px)"></div><svg class="a" style="left:1126px;top:815px" width="12" height="12"><rect x="9" y="1" width="2" height="2" fill="#c4c4c4"/><rect x="5" y="5" width="2" height="2" fill="#c4c4c4"/><rect x="9" y="5" width="2" height="2" fill="#c4c4c4"/><rect x="1" y="9" width="2" height="2" fill="#c4c4c4"/><rect x="5" y="9" width="2" height="2" fill="#c4c4c4"/><rect x="9" y="9" width="2" height="2" fill="#c4c4c4"/></svg><div class="a" style="left:358px;top:366px;width:308px;height:454px;background:#555;border-radius:7px 7px 1px 1px"></div><div class="a" style="left:359px;top:367px;width:306px;height:452px;background:linear-gradient(#bdd0e4 0,#cbdaeb 10px,#dce7f3 25px,#dbe6f2 100%);border-radius:6px 6px 0 0;box-shadow:inset 1px 1px 0 #eaf1f8"></div><div class="a" style="left:362px;top:393px;width:300px;height:423px;background:#f0f0f0"></div><div class="t" style="left:366px;top:372px;font-size:15px;letter-spacing:-0.08px;color:#3e4650;">Выбор цвета</div><div class="cbtn in" style="left:628px;top:371px;width:33px;height:18px"></div><svg class="a" style="left:637px;top:374px" width="14" height="12" viewBox="0 0 14 12"><path d="M2 1.5 L4.6 1.5 L7 4 L9.4 1.5 L12 1.5 L8.6 5.5 L12 9.5 L9.4 9.5 L7 7 L4.6 9.5 L2 9.5 L5.4 5.5 Z" fill="#fff" stroke="#5b6478" stroke-width=".9"/></svg><div class="a" style="left:362px;top:417px;width:293px;height:1px;background:#fff"></div><div class="a" style="left:655px;top:417px;width:1px;height:8px;background:#696969"></div><div class="a" style="left:654px;top:418px;width:1px;height:7px;background:#a0a0a0"></div><div class="a" style="left:362px;top:394px;width:37px;height:25px;background:#f0f0f0;border:1px solid;border-color:#fff #696969 #f0f0f0 #fff;border-radius:2px 2px 0 0;box-shadow:inset -1px 0 0 #a0a0a0"></div><div class="a" style="left:433px;top:397px;width:1px;height:20px;background:#696969"></div><div class="a" style="left:432px;top:397px;width:1px;height:20px;background:#a0a0a0"></div><div class="a" style="left:400px;top:396px;width:1px;height:21px;background:#fff"></div><div class="a" style="left:467px;top:397px;width:1px;height:20px;background:#696969"></div><div class="a" style="left:466px;top:397px;width:1px;height:20px;background:#a0a0a0"></div><div class="a" style="left:434px;top:396px;width:1px;height:21px;background:#fff"></div><div class="a" style="left:502px;top:397px;width:1px;height:20px;background:#696969"></div><div class="a" style="left:501px;top:397px;width:1px;height:20px;background:#a0a0a0"></div><div class="a" style="left:469px;top:396px;width:1px;height:21px;background:#fff"></div><div class="a" style="left:537px;top:397px;width:1px;height:20px;background:#696969"></div><div class="a" style="left:536px;top:397px;width:1px;height:20px;background:#a0a0a0"></div><div class="a" style="left:504px;top:396px;width:1px;height:21px;background:#fff"></div><div class="a" style="left:572px;top:397px;width:1px;height:20px;background:#696969"></div><div class="a" style="left:571px;top:397px;width:1px;height:20px;background:#a0a0a0"></div><div class="a" style="left:539px;top:396px;width:1px;height:21px;background:#fff"></div><svg class="ic" style="left:370px;top:395px;width:16px;height:16px" viewBox="0 0 16 16" ><path d="M3.5 1 V12 M9.5 1 V12 M14.5 1 V12 M3 1.5 H15 M3 7.5 H15" fill="none" stroke="#000040" stroke-width="1.7" /><rect x="2.5" y="0.5" width="2" height="2" fill="#00c000"/><rect x="8.5" y="0.5" width="2" height="2" fill="#00c000"/><rect x="13.5" y="0.5" width="2" height="2" fill="#00c000"/><rect x="2.5" y="6.5" width="2" height="2" fill="#00c000"/><rect x="8.5" y="6.5" width="2" height="2" fill="#00c000"/><rect x="13.5" y="6.5" width="2" height="2" fill="#00c000"/><rect x="2.4" y="11" width="2.2" height="2.2" fill="#00c000"/><rect x="8.4" y="11" width="2.2" height="2.2" fill="#00c000"/><rect x="13.4" y="11" width="2.2" height="2.2" fill="#00c000"/></svg><svg class="ic" style="left:407px;top:398px;width:16px;height:16px" viewBox="0 0 16 16" ><path d="M5 1 V10 H11 V1" fill="#00c000" stroke="#000" stroke-width="1" style="shape-rendering:auto"/><path d="M8 0 V9" fill="none" stroke="#000" stroke-width="1.4" /><path d="M1 4 L5 1.5 V6.5Z" fill="#00c000" stroke="#000" stroke-width="0.7" style="shape-rendering:auto"/><path d="M3.5 10 H12.5 L8 15.5Z" fill="#0000e0" style="shape-rendering:auto"/><path d="M3 9 H13" fill="none" stroke="#00e000" stroke-width="2" /></svg><svg class="ic" style="left:439px;top:398px;width:18px;height:16px" viewBox="0 0 18 16" ><path d="M1 11 L9 3 H17 V7 L9 15 H1Z" fill="#fff" stroke="#000" stroke-width="1.2" style="shape-rendering:auto"/><path d="M1 11 H9 L17 3 M9 11 V15 M5.5 7 H13" fill="none" stroke="#000" stroke-width="1.1" style="shape-rendering:auto"/><path d="M9.5 11.5 L16.5 4.5 V7 L9.5 14.5Z" fill="#b0b0b0" style="shape-rendering:auto"/></svg><svg class="ic" style="left:472px;top:397px;width:18px;height:18px" viewBox="0 0 18 18" ><path d="M4.5 3 V15 M9.5 3 V15 M15.5 3 V15 M4 3.5 H16 M4 9.5 H16 M3 15.5 H17" fill="none" stroke="#000" stroke-width="1.2" /><rect x="3" y="2" width="3" height="3" fill="#00ffff"/><rect x="3" y="8" width="3" height="3" fill="#ffff00"/><rect x="8" y="8" width="3" height="3" fill="#ff00ff"/><rect x="14.5" y="2.5" width="2" height="2" fill="#00c000"/><rect x="14.5" y="8.5" width="2" height="2" fill="#00c000"/><rect x="8.7" y="2.5" width="2" height="2" fill="#00c000"/><path d="M2.5 15 L4.5 12 L6.5 15" fill="none" stroke="#0000ff" stroke-width="1.2" style="shape-rendering:auto"/><path d="M7.5 15 L9.5 12 L11.5 15" fill="none" stroke="#0000ff" stroke-width="1.2" style="shape-rendering:auto"/><path d="M13.5 15 L15.5 12 L17.5 15" fill="none" stroke="#0000ff" stroke-width="1.2" style="shape-rendering:auto"/><text x="0" y="6" font-family="Liberation Sans" font-size="6" font-weight="bold" font-style="normal" fill="#800000" letter-spacing="0" style="shape-rendering:auto">1</text></svg><svg class="ic" style="left:510px;top:397px;width:16px;height:17px" viewBox="0 0 16 17" ><rect x="0" y="6" width="5" height="5" fill="#008000"/><path d="M5 8.5 H12" fill="none" stroke="#0000ff" stroke-width="1.6" /><path d="M11.5 5.8 L15 8.5 L11.5 11.2Z" fill="#0000ff" style="shape-rendering:auto"/><path d="M4.5 6 L8.5 2.2" fill="none" stroke="#ff2020" stroke-width="1.3" stroke-dasharray="1.5 1" style="shape-rendering:auto"/><path d="M7 1 L10.5 0.5 L9.8 4Z" fill="#ff2020" style="shape-rendering:auto"/><path d="M4.5 11 L8.5 14.8" fill="none" stroke="#008000" stroke-width="1.3" style="shape-rendering:auto"/><path d="M7 16 L10.5 16.5 L9.8 13Z" fill="#008000" style="shape-rendering:auto"/></svg><svg class="ic" style="left:544px;top:398px;width:16px;height:16px" viewBox="0 0 16 16" ><rect x="0.5" y="0.5" width="15" height="15" fill="#fff" stroke="#000"/><rect x="1" y="1" width="7" height="7" fill="#fff"/><rect x="1" y="1" width="7" height="7" fill="url(#d4080ff)"/><rect x="8" y="1" width="7" height="7" fill="#fff"/><rect x="8" y="1" width="7" height="7" fill="url(#d00e0ff)"/><rect x="1" y="8" width="7" height="7" fill="#000080"/><rect x="8" y="8" width="7" height="7" fill="#fff"/><rect x="8" y="8" width="7" height="7" fill="url(#d4080ff)"/><path d="M8 1 V15 M1 8 H15" fill="none" stroke="#000" stroke-width="1" /></svg><div class="a" style="left:362px;top:707px;width:294px;height:1px;background:#a0a0a0"></div><div class="a" style="left:362px;top:708px;width:295px;height:1px;background:#696969"></div><div class="a" style="left:655px;top:425px;width:1px;height:283px;background:#a0a0a0"></div><div class="a" style="left:656px;top:425px;width:1px;height:284px;background:#696969"></div><div class="a" style="left:362px;top:418px;width:1px;height:290px;background:#fff"></div><div class="gb" style="left:364px;top:434px;width:291px;height:265px"></div><div class="a" style="left:371px;top:430px;width:160px;height:10px;background:#f0f0f0"></div><div class="t" style="left:374px;top:428px;font-size:12px;color:#000;transform-origin:0 0;transform:scaleX(1.2162);">Цвета объектов схемы</div><div class="a" style="left:367px;top:444px;width:285px;height:254px;background:#fff;border:1px solid;border-color:#828282 #fff #fff #828282;box-shadow:inset 1px 1px 0 #696969"></div><div class="sw" style="left:369px;top:447.0px;background:#000000"></div><div class="t" style="left:392px;top:448px;font-size:12px;color:#000;transform-origin:0 0;transform:scaleX(1.2309);">Фон</div><div class="sw" style="left:369px;top:464.1px;background:#00ff00"></div><div class="t" style="left:392px;top:465px;font-size:12px;color:#000;transform-origin:0 0;transform:scaleX(1.2347);">Узел</div><div class="sw" style="left:369px;top:481.3px;background:#6a00ff"></div><div class="t" style="left:392px;top:482px;font-size:12px;color:#000;transform-origin:0 0;transform:scaleX(1.1792);">Плоские и объемные КЭ</div><div class="sw" style="left:369px;top:498.4px;background:#006400"></div><div class="t" style="left:392px;top:499px;font-size:12px;color:#000;transform-origin:0 0;transform:scaleX(1.2083);">Суперэлементы</div><div class="sw" style="left:369px;top:515.6px;background:#ff0000"></div><div class="t" style="left:392px;top:517px;font-size:12px;color:#000;transform-origin:0 0;transform:scaleX(1.2595);">Узел отмеченный</div><div class="sw" style="left:369px;top:532.8px;background:#ff0000"></div><div class="t" style="left:392px;top:534px;font-size:12px;color:#000;transform-origin:0 0;transform:scaleX(1.2519);">Элемент отмеченный</div><div class="sw" style="left:369px;top:549.9px;background:#ff80c0"></div><div class="t" style="left:392px;top:551px;font-size:12px;color:#000;transform-origin:0 0;transform:scaleX(1.2641);">Строительные оси и отметки</div><div class="sw" style="left:369px;top:567.0px;background:#c800c8"></div><div class="t" style="left:392px;top:568px;font-size:12px;color:#000;transform-origin:0 0;transform:scaleX(1.2049);">Схема деформированная</div><div class="sw" style="left:501px;top:447px;background:#c0c0c0"></div><div class="t" style="left:523.6px;top:448px;font-size:12px;color:#000;transform-origin:0 0;transform:scaleX(1.2028);">Сеть</div><div class="sw" style="left:501px;top:464.1px;background:#00f0ff"></div><div class="t" style="left:523.6px;top:465px;font-size:12px;color:#000;transform-origin:0 0;transform:scaleX(1.2358);">Стержни и одноуз</div><div class="a" style="left:650px;top:445px;width:1px;height:252px;background:#c8c8c8"></div><div class="sb" style="left:369px;top:681px;width:282px;height:16px"></div><svg class="a" style="left:375px;top:685px" width="5" height="9"><path d="M5 0 L0 4.5 L5 9Z" fill="#404040"/></svg><svg class="a" style="left:637px;top:685px" width="5" height="9"><path d="M0 0 L5 4.5 L0 9Z" fill="#404040"/></svg><div class="thumbh" style="left:388px;top:682px;width:195px;height:15px"></div><div class="a" style="left:481px;top:685px;width:8px;height:8px;background:repeating-linear-gradient(90deg,#5a5a5a 0,#5a5a5a 1px,#fff 1px,#fff 2px,transparent 2px,transparent 3px)"></div><div class="gb" style="left:362px;top:720px;width:293px;height:66px"></div><div class="a" style="left:369px;top:714px;width:238px;height:10px;background:#f0f0f0"></div><div class="t" style="left:372px;top:713px;font-size:12px;color:#000;transform-origin:0 0;transform:scaleX(1.2132);">Выбор файла цветовых установок</div><div class="a" style="left:367px;top:732px;width:284px;height:23px;background:#f0f0f0;border:1px solid;border-color:#a0a0a0 #fff #fff #a0a0a0"></div><div class="t" style="left:370px;top:737px;font-size:12px;letter-spacing:0.46px;color:#000;">C:\Lira Soft\Lira 9.4\black.col</div><div class="btn" style="left:368px;top:760px;width:81px;height:24px"></div><div class="t" style="left:372.3px;top:765px;font-size:13px;color:#000;transform-origin:0 0;transform:scaleX(1.2164);">Загрузить</div><div class="btn" style="left:455px;top:760px;width:106px;height:24px"></div><div class="t" style="left:465px;top:765px;font-size:13px;color:#000;transform-origin:0 0;transform:scaleX(1.0716);">Сохранить ...</div><div class="btn" style="left:569px;top:760px;width:79px;height:24px"></div><div class="t" style="left:574px;top:765px;font-size:13px;color:#000;transform-origin:0 0;transform:scaleX(1.1812);">Стандарт</div><div class="a" style="left:483px;top:790px;width:29px;height:21px;background:#f0f0f0;border:1px solid #000;box-shadow:inset 1px 1px 0 #fff,inset -1px -1px 0 #696969,inset -2px -2px 0 #a0a0a0"></div><div class="a" style="left:539px;top:790px;width:29px;height:21px;background:#f0f0f0;border:1px solid #000;box-shadow:inset 1px 1px 0 #fff,inset -1px -1px 0 #696969,inset -2px -2px 0 #a0a0a0"></div><div class="a" style="left:599px;top:790px;width:29px;height:21px;background:#f0f0f0;border:1px solid #000;box-shadow:inset 1px 1px 0 #fff,inset -1px -1px 0 #696969,inset -2px -2px 0 #a0a0a0"></div><svg class="ic" style="left:486px;top:793px;width:24px;height:16px" viewBox="0 0 24 16" ><circle cx="15" cy="10" r="8" fill="#008080" style="shape-rendering:auto"/><path d="M2 12.5 H10" fill="none" stroke="#00e000" stroke-width="2.6" stroke-dasharray="2.2 1"/><path d="M9 9 L13 13.5 L21 2" fill="none" stroke="#00f000" stroke-width="2.6" style="shape-rendering:auto"/></svg><svg class="ic" style="left:545px;top:792px;width:18px;height:17px" viewBox="0 0 18 17" ><path d="M3 2 L6 2 L9 7 L13 1 L15.5 2 L10.5 8.5 L14 15 L10.5 15 L8 10.5 L4.5 15.5 L1.5 14.5 L6.5 8Z" fill="#008080" stroke="#000" stroke-width="1" style="shape-rendering:auto"/><path d="M13 1.5 L5 13" stroke="#00e000" stroke-width="1.6" style="shape-rendering:auto"/></svg><svg class="ic" style="left:606px;top:792px;width:17px;height:17px" viewBox="0 0 17 17" ><path d="M4 5 C4 -0.5 12.5 -0.5 12.5 4.5 C12.5 8 8.5 7.5 8.5 11" fill="none" stroke="#000" stroke-width="3.8" style="shape-rendering:auto"/><circle cx="8.5" cy="14.5" r="2" fill="#000" style="shape-rendering:auto"/><path d="M4 5 C4 -0.5 12.5 -0.5 12.5 4.5 C12.5 8 8.5 7.5 8.5 11" fill="none" stroke="#00a060" stroke-width="2" style="shape-rendering:auto"/><circle cx="8.5" cy="14.5" r="1.2" fill="#00a060" style="shape-rendering:auto"/></svg><div class="a" style="left:0;top:842px;width:1152px;height:22px;background:#f0f0f0"></div><div class="a" style="left:0;top:840px;width:1152px;height:1px;background:#fff"></div><div class="a" style="left:0;top:841px;width:1152px;height:2px;background:#f0f0f0"></div><div class="pane" style="left:1px;width:868px"></div><div class="pane" style="left:871px;width:105px"><span>0 / 11136</span></div><div class="pane" style="left:978px;width:106px"><span>0 / 11635</span></div><div class="pane" style="left:1087px;width:56px"><span>1 / 2</span></div><div class="a" style="left:0;top:862px;width:1152px;height:2px;background:#a0a0a0"></div>
</body></html>
